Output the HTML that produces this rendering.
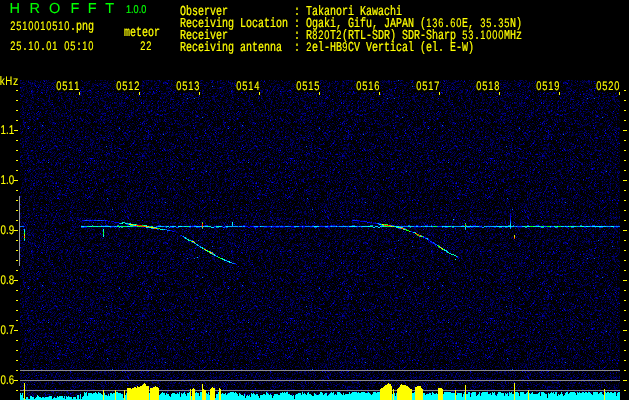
<!DOCTYPE html><html><head><meta charset="utf-8"><title>HROFFT</title><style>html,body{margin:0;padding:0;background:#000;overflow:hidden}svg{display:block;will-change:transform}text{text-rendering:geometricPrecision}</style></head><body><svg width="629" height="400" viewBox="0 0 629 400" shape-rendering="crispEdges">
<defs><g id="t" transform="translate(0,.5)" fill="none" stroke-width="1"><path d="M3 0h1m2 0h1m1 0h1m1 0h2m2 0h1m6 0h1m3 0h1m7 0h2m16 0h1m4 0h1m13 0h1m7 0h1m2 0h2m1 0h1m3 0h1m17 0h1m8 0h1m6 0h1m1 0h2m3 0h2m1 0h1m1 0h1m6 0h1m4 0h2m4 0h1m4 0h1m21 0h2M0 1h1m15 0h1m9 0h2m14 0h1m10 0h1m2 0h1m9 0h1m24 0h2m1 0h1m1 0h1m22 0h1m2 0h1m3 0h1m3 0h1m1 0h1m2 0h1m8 0h2m2 0h1m3 0h1m1 0h1m6 0h1m2 0h1m1 0h1m8 0h1m1 0h1m5 0h1m14 0h2M0 2h1m3 0h1m17 0h1m5 0h1m1 0h1m1 0h2m14 0h1m5 0h1m10 0h2m1 0h1m6 0h1m5 0h1m2 0h1m12 0h1m5 0h2m8 0h1m4 0h1m12 0h1m7 0h2m7 0h1m2 0h1m11 0h2m16 0h1m5 0h1m1 0h1M9 3h1m1 0h1m1 0h1m10 0h1m2 0h1m11 0h2m4 0h1m6 0h1m9 0h1m5 0h1m3 0h2m5 0h1m11 0h1m7 0h1m27 0h2m10 0h1m5 0h1m3 0h1m6 0h1m6 0h1m3 0h3m12 0h1m4 0h1M7 4h1m3 0h2m6 0h2m10 0h1m19 0h1m4 0h1m1 0h1m10 0h1m10 0h1m7 0h2m3 0h1m16 0h1m7 0h1m3 0h1m7 0h1m4 0h1m3 0h1m16 0h1m3 0h1m2 0h1m1 0h1m10 0h1m8 0h2m1 0h1m2 0h1m1 0h1m3 0h1M1 5h1m12 0h1m13 0h1m7 0h1m7 0h1m12 0h1m7 0h2m5 0h1m2 0h2m1 0h1m7 0h1m3 0h1m5 0h1m9 0h1m3 0h1m1 0h1m11 0h1m3 0h1m6 0h1m1 0h1m15 0h1m24 0h1m2 0h2m3 0h2m4 0h1m5 0h1M2 6h1m1 0h2m6 0h2m4 0h1m9 0h1m8 0h1m2 0h1m3 0h1m13 0h1m1 0h1m8 0h1m1 0h1m22 0h1m17 0h1m1 0h1m7 0h1m2 0h1m26 0h1m17 0h1m5 0h1m13 0h1m2 0h1m2 0h1M10 7h1m14 0h1m8 0h1m11 0h1m6 0h2m3 0h1m24 0h1m1 0h1m6 0h1m8 0h1m2 0h1m8 0h1m28 0h1m3 0h1m1 0h1m16 0h1m1 0h1m14 0h1m1 0h2m4 0h1m6 0h1M1 8h2m1 0h1m1 0h1m1 0h2m4 0h1m4 0h1m7 0h2m2 0h1m5 0h1m16 0h1m17 0h1m5 0h1m10 0h1m14 0h1m18 0h1m2 0h1m6 0h2m12 0h1m2 0h2m5 0h1m2 0h1m12 0h1m5 0h1m4 0h1m7 0h1m2 0h1M1 9h1m2 0h1m5 0h1m1 0h1m10 0h1m14 0h1m1 0h1m11 0h1m2 0h1m3 0h1m3 0h1m7 0h1m4 0h2m9 0h1m3 0h1m5 0h1m10 0h1m3 0h1m7 0h1m6 0h1m3 0h1m2 0h2m2 0h1m4 0h1m2 0h2m3 0h1m1 0h1m24 0h1m8 0h1m2 0h2m7 0h1M14 10h1m7 0h2m4 0h1m17 0h1m10 0h1m2 0h1m3 0h1m18 0h1m1 0h1m27 0h1m8 0h2m16 0h1m18 0h1m17 0h1m4 0h1m13 0h1m2 0h1M0 11h1m5 0h2m6 0h1m5 0h1m6 0h1m25 0h1m3 0h2m6 0h1m4 0h1m2 0h1m13 0h1m9 0h1m9 0h1m4 0h1m4 0h1m2 0h1m7 0h1m1 0h1m11 0h1m3 0h2m4 0h1m10 0h1m3 0h1m2 0h1m1 0h1m4 0h1m5 0h1m8 0h1m4 0h1m1 0h1M8 12h1m4 0h1m22 0h1m3 0h1m4 0h1m4 0h2m2 0h1m3 0h1m4 0h1m7 0h2m20 0h1m11 0h1m4 0h2m3 0h1m19 0h1m9 0h1m10 0h1m3 0h1m7 0h1m3 0h1m2 0h1m6 0h1m2 0h1m1 0h1m5 0h1m2 0h1M3 13h1m1 0h1m2 0h1m17 0h1m4 0h1m1 0h1m2 0h1m7 0h3m12 0h1m5 0h1m10 0h1m4 0h1m6 0h1m2 0h1m2 0h1m10 0h1m20 0h1m8 0h2m6 0h1m8 0h1m7 0h1m4 0h1m13 0h1m3 0h1m12 0h1m1 0h1M5 14h1m3 0h1m3 0h1m3 0h1m20 0h2m7 0h4m10 0h1m10 0h1m1 0h1m3 0h1m42 0h2m1 0h1m3 0h1m2 0h1m5 0h1m3 0h1m3 0h2m3 0h1m1 0h1m6 0h1m11 0h2m4 0h1m17 0h1M3 15h1m3 0h1m6 0h1m40 0h1m3 0h1m2 0h1m4 0h1m15 0h1m2 0h1m6 0h1m7 0h1m17 0h1m6 0h1m14 0h1m4 0h1m1 0h1m1 0h2m2 0h1m3 0h1m9 0h1m9 0h1m6 0h1m10 0h1M12 16h1m2 0h1m1 0h1m14 0h2m8 0h1m1 0h1m14 0h1m4 0h1m4 0h1m1 0h1m9 0h1m4 0h2m5 0h1m5 0h1m7 0h1m1 0h1m4 0h1m1 0h1m1 0h1m12 0h1m1 0h1m2 0h1m8 0h1m4 0h1m9 0h1m4 0h1m5 0h1m3 0h1m7 0h1m3 0h1M10 17h1m6 0h1m15 0h1m19 0h1m6 0h1m1 0h2m10 0h1m5 0h1m1 0h1m18 0h1m6 0h1m7 0h1m13 0h1m8 0h1m1 0h1m5 0h1m22 0h1m6 0h1m10 0h1M15 18h1m6 0h1m5 0h1m19 0h1m1 0h1m21 0h1m4 0h1m5 0h1m5 0h1m2 0h1m1 0h1m1 0h1m3 0h1m1 0h1m11 0h1m1 0h1m2 0h1m13 0h1m1 0h1m24 0h1m1 0h1m9 0h1m5 0h2m8 0h2m4 0h1M4 19h2m3 0h1m3 0h1m2 0h1m9 0h1m1 0h1m6 0h1m1 0h1m11 0h1m8 0h2m2 0h2m9 0h1m1 0h1m6 0h1m3 0h1m7 0h2m3 0h1m1 0h1m3 0h1m3 0h1m3 0h1m3 0h1m7 0h3m13 0h1m12 0h1m11 0h1m9 0h1m15 0h1m3 0h1M8 20h1m10 0h3m2 0h1m6 0h1m5 0h1m3 0h1m6 0h1m8 0h1m5 0h2m1 0h1m3 0h1m4 0h1m13 0h1m3 0h1m1 0h1m2 0h2m4 0h2m4 0h1m6 0h1m6 0h1m4 0h1m5 0h1m3 0h1m2 0h1m18 0h1m1 0h1m8 0h1m19 0h1m3 0h1M2 21h1m1 0h1m2 0h1m3 0h1m12 0h1m1 0h2m10 0h1m7 0h1m9 0h1m5 0h1m19 0h1m3 0h2m2 0h1m8 0h1m20 0h1m3 0h2m2 0h1m4 0h2m9 0h2m1 0h1m10 0h1m7 0h1m6 0h1m2 0h1m2 0h1m6 0h1M8 22h1m1 0h2m6 0h1m6 0h2m14 0h1m3 0h1m2 0h1m3 0h1m3 0h1m1 0h1m1 0h1m2 0h3m8 0h1m2 0h1m11 0h1m2 0h1m17 0h1m12 0h1m17 0h1m7 0h1m4 0h1m10 0h1m1 0h1m2 0h2m15 0h1M0 23h1m1 0h1m4 0h1m35 0h1m17 0h2m18 0h1m2 0h2m16 0h1m14 0h1m11 0h1m23 0h1m2 0h1m25 0h1m1 0h1m3 0h1m7 0h1M3 24h1m4 0h4m2 0h1m19 0h1m2 0h1m16 0h1m3 0h1m28 0h1m9 0h1m1 0h1m1 0h1m6 0h1m18 0h1m3 0h1m3 0h1m4 0h1m1 0h1m2 0h1m7 0h1m1 0h1m18 0h1m14 0h1M8 25h1m1 0h1m17 0h2m3 0h1m7 0h2m4 0h1m4 0h1m3 0h1m8 0h1m2 0h1m27 0h2m6 0h1m12 0h2m1 0h1m13 0h2m4 0h1m2 0h1m7 0h1m1 0h1m3 0h1m10 0h1m3 0h1m12 0h1m4 0h1m2 0h1m1 0h1M5 26h2m6 0h1m2 0h2m57 0h1m1 0h1m7 0h1m26 0h1m5 0h1m2 0h1m6 0h1m10 0h1m4 0h1m5 0h1m6 0h1m6 0h1m8 0h1m4 0h1m2 0h3M3 27h1m2 0h1m21 0h1m12 0h1m5 0h1m2 0h1m16 0h1m1 0h1m8 0h1m9 0h1m1 0h2m1 0h1m14 0h1m23 0h1m19 0h1m7 0h1m6 0h1m10 0h1m15 0h1m2 0h1M10 28h1m5 0h1m2 0h1m1 0h1m1 0h1m7 0h1m1 0h1m1 0h1m4 0h1m5 0h1m18 0h1m3 0h1m4 0h1m7 0h1m4 0h1m6 0h1m1 0h1m1 0h1m6 0h1m13 0h2m14 0h1m5 0h1m1 0h1m2 0h1m1 0h1m1 0h1m2 0h2m2 0h1m5 0h1m1 0h1m4 0h2m12 0h1m3 0h1M8 29h1m7 0h1m1 0h1m3 0h1m38 0h1m9 0h1m2 0h1m2 0h1m3 0h2m9 0h1m1 0h1m21 0h1m11 0h1m5 0h2m10 0h1m1 0h1m18 0h3m7 0h1m3 0h1m4 0h1m3 0h1m4 0h1M15 30h1m10 0h1m2 0h1m1 0h1m22 0h1m8 0h1m2 0h1m3 0h1m9 0h1m2 0h1m16 0h1m5 0h1m3 0h1m5 0h1m3 0h1m1 0h1m1 0h1m5 0h1m7 0h1m18 0h1m10 0h1m14 0h1m5 0h1M1 31h1m9 0h2m19 0h1m9 0h2m6 0h1m3 0h1m1 0h1m21 0h1m3 0h1m16 0h1m1 0h1m9 0h1m3 0h1m14 0h1m5 0h1m2 0h1m12 0h1m5 0h1m2 0h1m3 0h1m1 0h1m14 0h1m2 0h1m2 0h1M2 32h1m1 0h1m4 0h1m2 0h1m13 0h1m4 0h1m1 0h1m6 0h1m7 0h1m1 0h1m6 0h1m3 0h1m5 0h1m2 0h2m7 0h1m2 0h1m1 0h1m1 0h1m3 0h1m6 0h1m12 0h1m2 0h1m1 0h1m17 0h1m1 0h1m13 0h1m9 0h2m6 0h1m5 0h1m12 0h1m5 0h1m1 0h1M1 33h1m5 0h1m13 0h1m4 0h2m16 0h1m17 0h1m10 0h1m2 0h1m14 0h2m10 0h1m3 0h1m4 0h1m7 0h1m1 0h1m12 0h1m8 0h1m1 0h1m4 0h1m3 0h1m6 0h1m2 0h1m5 0h1m8 0h1m1 0h1m4 0h1M18 34h1m2 0h1m6 0h1m1 0h2m5 0h2m27 0h1m11 0h3m4 0h1m11 0h2m1 0h1m6 0h1m1 0h1m12 0h1m12 0h2m3 0h1m9 0h1m4 0h1m5 0h1m10 0h1m8 0h1m1 0h1m3 0h1M6 35h1m9 0h2m1 0h1m5 0h1m3 0h1m5 0h1m1 0h1m12 0h1m3 0h1m3 0h1m28 0h1m6 0h3m1 0h1m11 0h1m4 0h1m3 0h1m11 0h1m7 0h1m2 0h1m3 0h1m1 0h1m4 0h3m5 0h1m1 0h1m9 0h1m5 0h1m1 0h1m16 0h2M1 36h2m18 0h1m9 0h1m2 0h2m2 0h2m1 0h1m3 0h1m6 0h1m3 0h1m6 0h1m2 0h1m6 0h2m3 0h1m14 0h1m2 0h1m11 0h1m3 0h1m3 0h2m2 0h1m38 0h1m3 0h1m1 0h1m6 0h2m8 0h2m12 0h1M0 37h1m12 0h1m2 0h1m4 0h1m9 0h1m7 0h1m8 0h1m3 0h1m12 0h1m5 0h1m4 0h1m6 0h1m1 0h1m6 0h3m4 0h1m2 0h1m5 0h3m5 0h1m5 0h1m1 0h1m3 0h2m4 0h1m4 0h1m4 0h1m2 0h2m19 0h1m19 0h1m1 0h1M1 38h1m2 0h1m11 0h1m7 0h2m4 0h1m3 0h2m8 0h1m6 0h2m4 0h1m5 0h1m4 0h1m4 0h1m17 0h1m5 0h1m3 0h1m7 0h1m8 0h1m1 0h1m18 0h1m5 0h1m13 0h1m1 0h1m6 0h1m2 0h1m9 0h1m3 0h2m6 0h1M15 39h2m1 0h1m17 0h1m1 0h1m1 0h1m12 0h1m3 0h1m17 0h2m19 0h1m4 0h1m7 0h1m7 0h2m9 0h1m11 0h1m9 0h2m2 0h1m6 0h1m11 0h1m3 0h2m6 0h1m3 0h1m4 0h1M25 40h2m1 0h1m1 0h1m2 0h1m11 0h1m5 0h2m23 0h1m5 0h1m4 0h1m8 0h1m2 0h1m10 0h1m21 0h1m2 0h1m3 0h2m1 0h1m20 0h1m11 0h1m7 0h1m12 0h1m2 0h1M6 41h1m6 0h1m24 0h1m4 0h1m2 0h1m10 0h2m1 0h1m8 0h1m5 0h1m3 0h1m2 0h2m1 0h1m1 0h1m21 0h1m4 0h1m11 0h1m2 0h1m6 0h1m2 0h1m4 0h1m1 0h3m2 0h1m5 0h2m4 0h2m11 0h1m10 0h1M2 42h1m28 0h1m4 0h1m5 0h1m10 0h1m5 0h1m6 0h1m1 0h1m10 0h1m4 0h2m10 0h1m6 0h1m2 0h1m10 0h1m10 0h1m9 0h1m7 0h1m4 0h1m8 0h1m1 0h1m2 0h1m3 0h1m2 0h1m13 0h1m1 0h2m1 0h1m3 0h2m2 0h1M3 43h1m1 0h1m3 0h1m10 0h1m11 0h1m4 0h1m1 0h1m7 0h1m4 0h1m13 0h2m14 0h1m19 0h1m1 0h1m3 0h1m1 0h1m5 0h1m4 0h1m11 0h1m1 0h1m6 0h1m4 0h1m3 0h1m4 0h1m3 0h1m4 0h1m2 0h1m3 0h1m1 0h1m16 0h1m1 0h1M4 44h1m1 0h1m8 0h1m2 0h1m16 0h1m16 0h1m5 0h3m4 0h2m2 0h1m8 0h1m9 0h1m22 0h1m2 0h1m3 0h1m11 0h1m8 0h1m8 0h1m8 0h1m6 0h3m1 0h1m7 0h1m8 0h1m1 0h1m3 0h1M20 45h1m2 0h1m3 0h1m5 0h1m22 0h1m2 0h1m7 0h1m27 0h1m16 0h1m16 0h1m11 0h1m6 0h1m6 0h1m4 0h1m3 0h2m10 0h1m2 0h2m1 0h1m4 0h2M15 46h1m16 0h1m5 0h1m8 0h1m4 0h1m2 0h2m17 0h1m9 0h1m4 0h2m4 0h1m2 0h2m8 0h1m1 0h1m14 0h1m8 0h1m6 0h1m1 0h1m13 0h1m3 0h2m1 0h1m11 0h1m7 0h1m2 0h1M4 47h1m2 0h1m11 0h1m1 0h2m14 0h1m7 0h1m3 0h1m13 0h1m3 0h2m4 0h2m4 0h1m7 0h2m1 0h1m1 0h2m4 0h1m12 0h1m4 0h1m33 0h1m6 0h1m1 0h1m2 0h1m14 0h1m10 0h2m5 0h1m2 0h2M14 48h1m8 0h1m1 0h1m6 0h1m15 0h1m10 0h1m5 0h1m7 0h1m2 0h1m10 0h1m1 0h1m5 0h1m8 0h1m5 0h1m2 0h1m31 0h1m18 0h1m5 0h1m7 0h2m3 0h3m1 0h1m7 0h1m1 0h1M0 49h1m5 0h1m14 0h1m2 0h1m4 0h1m5 0h1m18 0h1m7 0h2m1 0h1m8 0h1m7 0h1m25 0h1m8 0h1m7 0h1m24 0h1m4 0h2m1 0h1m21 0h1m9 0h1m7 0h1M11 50h1m24 0h1m6 0h1m13 0h2m7 0h1m7 0h1m15 0h1m5 0h1m11 0h1m9 0h1m2 0h1m14 0h2m8 0h1m14 0h1m4 0h1m4 0h1m4 0h1m6 0h1M0 51h1m4 0h2m2 0h1m5 0h1m1 0h1m25 0h2m11 0h1m8 0h2m1 0h1m1 0h1m19 0h1m2 0h1m17 0h1m17 0h1m1 0h1m2 0h1m6 0h1m5 0h1m1 0h1m2 0h1m6 0h1m1 0h1m3 0h1m4 0h2m2 0h1m2 0h1M9 52h1m4 0h1m5 0h2m5 0h1m3 0h1m6 0h1m3 0h1m3 0h1m3 0h1m6 0h1m4 0h1m31 0h1m8 0h1m17 0h1m7 0h1m8 0h1m4 0h1m1 0h1m32 0h1m3 0h1M16 53h1m13 0h1m8 0h1m3 0h1m11 0h1m11 0h1m11 0h1m6 0h1m1 0h1m3 0h2m26 0h1m9 0h1m1 0h1m2 0h1m6 0h1m9 0h2m3 0h1m2 0h3m7 0h1m1 0h1m16 0h1m8 0h2M1 54h1m2 0h1m6 0h1m5 0h1m2 0h1m1 0h1m9 0h1m16 0h1m2 0h1m19 0h1m4 0h1m1 0h1m1 0h1m6 0h1m3 0h1m10 0h1m11 0h1m4 0h1m7 0h1m5 0h1m3 0h1m3 0h1m2 0h1m3 0h1m1 0h1m1 0h1m3 0h1m9 0h1m8 0h1m19 0h1M3 55h1m8 0h2m7 0h1m8 0h1m1 0h1m2 0h1m38 0h1m8 0h1m3 0h1m5 0h1m4 0h1m6 0h1m1 0h1m1 0h1m9 0h1m4 0h1m5 0h1m3 0h1m6 0h1m6 0h1m2 0h1m1 0h1m1 0h1m27 0h1m10 0h2M7 56h2m10 0h1m2 0h2m3 0h2m7 0h1m2 0h1m6 0h1m2 0h1m16 0h1m2 0h1m24 0h1m11 0h1m1 0h1m8 0h1m1 0h1m3 0h1m5 0h1m5 0h1m5 0h1m14 0h1m37 0h1m2 0h1M4 57h2m3 0h1m3 0h1m4 0h1m6 0h1m2 0h2m2 0h2m7 0h1m26 0h3m1 0h1m7 0h1m4 0h1m9 0h1m3 0h1m18 0h2m45 0h2m4 0h1m17 0h1M9 58h1m3 0h2m19 0h1m9 0h3m8 0h1m4 0h1m3 0h1m1 0h1m3 0h1m3 0h1m2 0h1m5 0h1m3 0h1m1 0h1m10 0h1m11 0h1m17 0h3m9 0h1m22 0h1m1 0h1m2 0h1m4 0h1m2 0h1m4 0h1m11 0h1M2 59h2m3 0h1m12 0h1m23 0h1m2 0h1m1 0h1m1 0h1m2 0h1m6 0h1m10 0h1m7 0h1m20 0h1m1 0h1m21 0h1m2 0h1m5 0h2m11 0h1m10 0h1m6 0h1m17 0h1m11 0h1m1 0h1M7 60h1m1 0h1m4 0h1m1 0h1m8 0h1m4 0h1m4 0h1m7 0h1m2 0h3m5 0h1m2 0h1m5 0h1m6 0h1m2 0h2m26 0h1m2 0h1m1 0h1m3 0h1m2 0h1m4 0h1m31 0h1m8 0h1m6 0h2m9 0h1m3 0h1m2 0h1m5 0h1M4 61h1m3 0h1m9 0h1m2 0h1m5 0h2m14 0h1m2 0h1m7 0h1m2 0h1m1 0h1m6 0h1m1 0h1m2 0h1m17 0h1m7 0h1m17 0h1m9 0h1m6 0h1m3 0h1m1 0h1m9 0h1m8 0h1m1 0h1m1 0h1m1 0h1m12 0h1m6 0h1m2 0h1m6 0h1M16 62h3m22 0h1m14 0h1m6 0h1m6 0h1m7 0h2m17 0h1m1 0h1m8 0h1m21 0h1m12 0h2m3 0h1m7 0h1m2 0h1m6 0h1m2 0h1m12 0h1m1 0h1m3 0h1m2 0h3m2 0h1m1 0h1M3 63h1m3 0h1m7 0h1m5 0h1m8 0h1m4 0h1m1 0h1m16 0h2m12 0h1m1 0h1m7 0h1m9 0h1m2 0h1m7 0h1m19 0h1m1 0h1m7 0h1m6 0h1m9 0h1m2 0h1m3 0h1m21 0h1m15 0h1m1 0h1M7 64h1m2 0h1m1 0h1m8 0h2m4 0h1m10 0h1m8 0h1m18 0h1m1 0h1m4 0h1m11 0h1m2 0h1m5 0h1m13 0h1m3 0h1m1 0h1m8 0h1m2 0h2m1 0h1m5 0h1m2 0h1m2 0h1m4 0h1m3 0h1m5 0h1m6 0h1m4 0h1m1 0h1m2 0h1m7 0h1M18 65h1m6 0h2m9 0h1m7 0h1m3 0h1m1 0h1m2 0h1m15 0h1m24 0h1m5 0h1m23 0h1m1 0h1m6 0h1m4 0h1m18 0h1m7 0h1m10 0h1m9 0h1m7 0h1m1 0h1M10 66h1m2 0h1m2 0h1m4 0h2m6 0h1m3 0h1m6 0h1m6 0h1m14 0h2m17 0h2m1 0h1m3 0h1m20 0h1m18 0h1m10 0h1m4 0h1m1 0h1m11 0h1m12 0h2m9 0h1m9 0h1M0 67h1m9 0h1m10 0h1m7 0h2m1 0h1m4 0h1m2 0h1m6 0h1m4 0h1m2 0h1m1 0h1m7 0h1m6 0h1m1 0h1m10 0h2m8 0h2m9 0h1m4 0h2m10 0h1m4 0h1m3 0h1m3 0h1m4 0h1m1 0h2m1 0h1m1 0h1m2 0h1m10 0h1m7 0h1m2 0h2m20 0h1M14 68h1m5 0h1m22 0h1m3 0h1m14 0h1m6 0h1m2 0h1m5 0h1m18 0h1m7 0h2m6 0h1m2 0h1m1 0h1m6 0h1m1 0h3m4 0h1m10 0h1m6 0h2m12 0h1m23 0h1m3 0h1m4 0h1M0 69h1m2 0h1m4 0h1m8 0h1m7 0h1m2 0h1m2 0h1m10 0h1m15 0h1m1 0h1m1 0h1m1 0h1m13 0h1m13 0h1m13 0h1m12 0h1m2 0h1m3 0h1m2 0h1m13 0h1m1 0h1m36 0h1m6 0h1m6 0h1M2 70h1m1 0h1m3 0h1m1 0h1m2 0h1m1 0h1m15 0h1m42 0h1m5 0h1m2 0h1m1 0h1m3 0h1m5 0h1m2 0h1m8 0h1m5 0h1m13 0h1m1 0h1m1 0h1m2 0h1m11 0h1m7 0h1m5 0h3m3 0h3m3 0h1m12 0h1m7 0h1m4 0h1M0 71h1m5 0h1m1 0h1m1 0h1m1 0h1m1 0h1m14 0h1m2 0h1m3 0h1m4 0h1m11 0h2m1 0h1m1 0h1m1 0h1m9 0h1m3 0h1m4 0h1m13 0h1m5 0h1m18 0h2m7 0h3m15 0h1m1 0h1m2 0h1m27 0h1m4 0h1m2 0h1m7 0h1M1 72h1m1 0h1m1 0h1m4 0h1m18 0h1m5 0h1m10 0h1m5 0h1m5 0h1m3 0h1m6 0h1m3 0h1m3 0h1m1 0h1m1 0h3m4 0h1m2 0h1m3 0h1m26 0h1m1 0h1m7 0h1m4 0h1m10 0h1m4 0h1m11 0h1m8 0h1m5 0h1m10 0h1m6 0h1M20 73h1m13 0h1m5 0h1m5 0h1m57 0h1m11 0h2m1 0h1m4 0h1m7 0h1m25 0h1m21 0h1m12 0h1m1 0h1m1 0h1M5 74h3m8 0h1m8 0h1m1 0h1m13 0h1m4 0h1m11 0h1m1 0h1m1 0h1m4 0h1m3 0h1m3 0h1m2 0h1m1 0h2m9 0h1m3 0h1m7 0h1m1 0h1m5 0h2m10 0h1m2 0h1m22 0h1m1 0h1m10 0h1m5 0h1m7 0h1m2 0h1m3 0h1m3 0h1M4 75h1m1 0h1m14 0h1m12 0h1m4 0h1m7 0h1m1 0h1m18 0h2m1 0h1m13 0h1m2 0h2m1 0h1m9 0h1m31 0h1m6 0h1m2 0h1m13 0h1m22 0h1m4 0h1M13 76h1m1 0h1m1 0h1m1 0h1m5 0h2m3 0h1m9 0h1m1 0h1m5 0h3m5 0h1m16 0h1m1 0h1m1 0h1m7 0h1m7 0h1m3 0h1m1 0h1m3 0h1m9 0h2m3 0h1m2 0h1m7 0h1m5 0h1m14 0h1m1 0h1m10 0h1m25 0h1m1 0h1M10 77h1m8 0h1m25 0h1m11 0h1m2 0h1m12 0h1m18 0h1m5 0h1m21 0h2m2 0h1m1 0h1m8 0h1m2 0h2m6 0h1m6 0h1m7 0h1m1 0h1m22 0h1m6 0h3M12 78h1m6 0h1m3 0h1m7 0h1m3 0h1m5 0h1m1 0h1m13 0h1m1 0h1m5 0h1m8 0h1m12 0h1m1 0h1m2 0h1m7 0h2m1 0h1m10 0h1m1 0h1m6 0h1m5 0h1m1 0h1m4 0h1m3 0h1m1 0h1m7 0h1m17 0h1m3 0h1m6 0h1m15 0h1M7 79h1m10 0h1m9 0h1m2 0h1m12 0h1m1 0h1m3 0h1m3 0h1m3 0h1m5 0h1m2 0h1m8 0h1m4 0h1m5 0h1m2 0h1m5 0h1m18 0h1m20 0h1m7 0h1m9 0h1m35 0h1m2 0h2M1 80h1m8 0h1m20 0h1m10 0h1m8 0h1m7 0h1m18 0h1m19 0h1m7 0h1m5 0h1m16 0h1m3 0h1m6 0h1m1 0h1m13 0h1m16 0h1m5 0h1m7 0h1m1 0h1m9 0h1M4 81h1m6 0h1m5 0h1m14 0h2m11 0h1m6 0h1m2 0h2m13 0h1m4 0h1m16 0h1m16 0h1m16 0h1m1 0h2m6 0h1m1 0h2m11 0h1m1 0h2m11 0h1m4 0h2m10 0h1m5 0h1m1 0h2M6 82h1m12 0h1m1 0h1m1 0h1m6 0h2m1 0h1m16 0h2m10 0h1m6 0h1m12 0h1m6 0h1m1 0h1m4 0h1m4 0h1m9 0h2m8 0h1m21 0h1m1 0h1m6 0h1m9 0h1m8 0h1m8 0h1m17 0h1M1 83h1m1 0h1m8 0h1m5 0h1m19 0h1m8 0h1m9 0h1m3 0h1m3 0h1m7 0h1m9 0h1m24 0h1m1 0h1m10 0h1m13 0h1m3 0h1m2 0h1m6 0h1m4 0h1m30 0h1m3 0h1m4 0h2m1 0h1M2 84h1m7 0h1m12 0h1m6 0h1m15 0h2m5 0h1m4 0h1m15 0h2m2 0h1m9 0h1m4 0h1m1 0h1m28 0h1m4 0h1m3 0h1m8 0h1m4 0h1m10 0h1m26 0h1M2 85h1m16 0h1m2 0h2m5 0h1m3 0h1m3 0h1m5 0h1m17 0h1m11 0h1m3 0h1m5 0h1m4 0h1m10 0h1m4 0h1m21 0h3m9 0h1m3 0h1m7 0h1m3 0h1m7 0h1m3 0h1m4 0h1m9 0h1m11 0h2M0 86h1m4 0h1m6 0h1m1 0h1m7 0h1m4 0h1m9 0h1m7 0h1m1 0h1m13 0h1m4 0h1m2 0h2m2 0h2m2 0h1m3 0h2m1 0h1m25 0h1m12 0h1m2 0h1m9 0h1m14 0h1m10 0h2m17 0h1m3 0h1m8 0h1m3 0h1M10 87h1m2 0h1m3 0h1m8 0h1m4 0h1m2 0h1m4 0h1m3 0h1m15 0h1m3 0h1m5 0h1m3 0h1m9 0h2m5 0h1m10 0h1m13 0h1m16 0h1m14 0h1m2 0h1m18 0h1m7 0h1m16 0h2M0 88h1m5 0h1m3 0h1m1 0h2m9 0h1m4 0h1m1 0h1m14 0h1m1 0h1m5 0h1m24 0h1m4 0h1m8 0h1m29 0h1m1 0h1m3 0h1m1 0h1m1 0h2m9 0h2m2 0h1m3 0h1m7 0h1m3 0h1m33 0h1M1 89h1m6 0h2m1 0h2m2 0h1m4 0h1m9 0h2m5 0h1m1 0h1m11 0h1m5 0h1m24 0h1m4 0h1m9 0h1m14 0h1m5 0h1m2 0h1m9 0h1m3 0h1m6 0h1m4 0h2m9 0h1m22 0h2m1 0h1m4 0h1M2 90h1m9 0h2m5 0h1m1 0h3m5 0h1m2 0h1m1 0h1m2 0h2m9 0h1m6 0h1m4 0h1m2 0h1m15 0h2m2 0h1m4 0h1m7 0h1m2 0h1m9 0h1m2 0h1m1 0h1m7 0h1m9 0h1m2 0h1m1 0h1m8 0h1m18 0h1m3 0h1m8 0h1m3 0h1m4 0h1m10 0h1M4 91h1m4 0h1m5 0h1m2 0h1m2 0h1m16 0h1m1 0h2m5 0h2m11 0h1m1 0h1m17 0h1m2 0h1m2 0h1m4 0h1m13 0h2m2 0h1m15 0h1m3 0h1m1 0h1m5 0h1m2 0h1m5 0h1m20 0h1m4 0h1m1 0h1m5 0h1m10 0h1m3 0h1m2 0h1M1 92h1m2 0h1m2 0h1m1 0h1m2 0h1m12 0h1m9 0h1m5 0h1m2 0h1m1 0h1m16 0h1m9 0h1m3 0h1m7 0h1m5 0h1m16 0h1m1 0h1m6 0h1m10 0h1m2 0h1m9 0h1m14 0h4m7 0h1m1 0h1m6 0h1m3 0h1m3 0h1m7 0h2m4 0h1M8 93h1m10 0h1m2 0h1m7 0h1m7 0h1m6 0h1m14 0h1m1 0h1m7 0h1m9 0h1m24 0h2m11 0h2m1 0h1m7 0h1m13 0h2m2 0h1m5 0h1m6 0h1m1 0h1m4 0h1m1 0h1m7 0h1m8 0h1m8 0h1M0 94h1m14 0h1m3 0h1m1 0h1m1 0h2m1 0h1m8 0h1m3 0h1m17 0h1m3 0h1m1 0h1m1 0h1m1 0h1m3 0h2m1 0h1m1 0h2m3 0h1m3 0h1m2 0h1m14 0h1m5 0h1m5 0h1m7 0h1m8 0h1m4 0h1m19 0h1m1 0h1m11 0h1m2 0h2m8 0h1m9 0h1m2 0h1M0 95h1m3 0h1m1 0h1m3 0h1m1 0h2m4 0h1m3 0h1m6 0h1m6 0h1m7 0h1m1 0h3m6 0h1m5 0h1m4 0h1m9 0h1m17 0h1m11 0h1m2 0h1m7 0h1m1 0h2m4 0h1m3 0h1m10 0h1m9 0h1m5 0h1m6 0h1m11 0h1m9 0h2m11 0h2M5 96h1m26 0h1m1 0h1m3 0h1m2 0h1m9 0h2m5 0h1m3 0h1m4 0h1m1 0h1m7 0h1m3 0h1m1 0h1m2 0h1m9 0h1m4 0h2m9 0h2m8 0h1m3 0h2m33 0h2m8 0h1m3 0h1m1 0h1m1 0h2m2 0h1m6 0h2M2 97h1m7 0h1m8 0h1m1 0h1m15 0h1m2 0h1m2 0h1m3 0h1m6 0h1m8 0h1m2 0h1m16 0h1m2 0h1m3 0h1m6 0h1m13 0h1m17 0h1m6 0h1m4 0h3m3 0h1m7 0h1m14 0h1m12 0h1m1 0h1m7 0h1m2 0h1M1 98h1m3 0h2m3 0h1m1 0h2m14 0h1m4 0h2m10 0h1m4 0h1m16 0h1m6 0h1m1 0h1m3 0h1m2 0h1m5 0h1m2 0h2m2 0h1m9 0h1m1 0h1m1 0h1m3 0h1m16 0h2m9 0h1m6 0h1m6 0h1m13 0h1m1 0h1m5 0h1M0 99h1m2 0h2m2 0h1m2 0h1m8 0h1m19 0h1m6 0h1m12 0h1m13 0h1m1 0h1m2 0h1m10 0h1m7 0h2m1 0h1m10 0h1m4 0h2m6 0h2m4 0h2m2 0h1m11 0h1m14 0h1m9 0h1m1 0h1m3 0h1m2 0h1m5 0h1m1 0h1m4 0h1m3 0h2M2 100h1m1 0h1m8 0h1m2 0h1m7 0h1m2 0h2m2 0h1m5 0h2m2 0h1m13 0h1m2 0h1m3 0h1m2 0h1m13 0h1m12 0h1m7 0h1m2 0h1m5 0h1m3 0h1m8 0h1m3 0h1m9 0h1m3 0h1m8 0h2m1 0h1m2 0h1m15 0h1m3 0h1m2 0h1m8 0h1m1 0h1m1 0h1m2 0h1M6 101h1m2 0h1m9 0h1m12 0h1m1 0h1m1 0h1m7 0h1m4 0h2m1 0h2m7 0h1m1 0h2m9 0h1m1 0h1m24 0h1m5 0h2m3 0h1m5 0h1m6 0h2m1 0h1m8 0h1m13 0h2m14 0h1m3 0h1m9 0h1m1 0h1m1 0h1m10 0h1M2 102h1m2 0h1m5 0h1m2 0h1m5 0h1m8 0h1m5 0h1m9 0h1m42 0h1m1 0h1m19 0h1m6 0h1m2 0h1m19 0h2m10 0h1m10 0h1m6 0h1m11 0h1m1 0h1m11 0h1m2 0h1M10 103h2m19 0h1m6 0h1m7 0h1m19 0h1m4 0h1m6 0h1m16 0h1m10 0h1m3 0h1m10 0h1m4 0h1m5 0h1m1 0h2m1 0h1m2 0h1m7 0h1m2 0h1m6 0h1m8 0h1m5 0h1m8 0h1m2 0h1m5 0h2m2 0h1m1 0h2M3 104h1m5 0h1m6 0h1m19 0h1m3 0h1m12 0h1m4 0h1m2 0h1m1 0h1m11 0h1m4 0h1m7 0h1m2 0h1m4 0h1m8 0h1m4 0h1m3 0h1m13 0h1m7 0h2m6 0h1m2 0h2m1 0h1m2 0h1m2 0h2m2 0h1m4 0h2m15 0h2m5 0h1m2 0h1M4 105h1m6 0h1m14 0h1m12 0h1m20 0h1m4 0h1m4 0h1m16 0h1m6 0h1m2 0h1m4 0h1m8 0h1m5 0h1m4 0h2m11 0h1m2 0h1m2 0h1m5 0h1m5 0h1m4 0h1m1 0h1m25 0h1m12 0h1M9 106h1m20 0h1m4 0h1m18 0h1m6 0h2m11 0h1m1 0h1m2 0h1m24 0h1m14 0h1m5 0h1m12 0h1m1 0h1m29 0h2m16 0h1m1 0h1m2 0h1m4 0h1M2 107h1m20 0h1m21 0h1m9 0h1m13 0h1m3 0h1m14 0h2m3 0h1m1 0h1m1 0h1m21 0h1m7 0h1m4 0h1m6 0h1m10 0h1m2 0h1m13 0h1m21 0h1m9 0h1M5 108h1m6 0h1m4 0h1m4 0h1m23 0h1m18 0h1m35 0h1m1 0h1m16 0h1m1 0h1m17 0h1m5 0h4m4 0h1m5 0h1m5 0h1m13 0h1m17 0h2M1 109h1m6 0h1m15 0h1m3 0h1m1 0h1m6 0h1m1 0h1m19 0h2m8 0h1m16 0h1m8 0h1m1 0h1m3 0h3m1 0h1m7 0h1m1 0h1m11 0h1m7 0h1m5 0h1m16 0h1m5 0h2m6 0h1m4 0h1m12 0h1m3 0h1m3 0h2M4 110h1m17 0h1m5 0h1m7 0h1m18 0h1m3 0h1m6 0h1m5 0h2m20 0h1m2 0h1m4 0h1m2 0h1m6 0h1m4 0h1m12 0h2m6 0h1m3 0h1m10 0h1m10 0h1m9 0h1m11 0h1m3 0h1M4 111h2m2 0h2m3 0h1m10 0h1m11 0h1m1 0h1m3 0h1m20 0h1m3 0h1m22 0h2m2 0h1m9 0h1m3 0h1m9 0h1m3 0h1m2 0h1m1 0h1m1 0h1m12 0h1m3 0h1m2 0h1m6 0h1m2 0h1m16 0h1m5 0h1m2 0h2m12 0h1M4 112h1m1 0h1m9 0h1m16 0h1m5 0h1m1 0h1m3 0h1m1 0h1m15 0h1m9 0h1m4 0h1m5 0h3m5 0h1m3 0h1m27 0h1m9 0h1m4 0h1m9 0h1m4 0h1m4 0h1m9 0h1m4 0h1m4 0h1m4 0h2m5 0h1m2 0h1m1 0h2m1 0h1M2 113h1m14 0h1m12 0h1m10 0h1m17 0h1m2 0h1m21 0h1m1 0h2m31 0h2m6 0h1m3 0h1m1 0h1m14 0h1m23 0h1m11 0h1m8 0h1m4 0h1M12 114h1m15 0h1m8 0h1m17 0h3m12 0h2m2 0h1m1 0h1m4 0h1m26 0h2m15 0h1m11 0h3m1 0h1m1 0h2m3 0h1m8 0h1m1 0h1m6 0h1m11 0h1m11 0h2m7 0h1M1 115h1m18 0h1m11 0h1m6 0h2m1 0h1m5 0h1m5 0h1m15 0h1m22 0h1m10 0h1m8 0h1m6 0h1m1 0h1m4 0h1m11 0h1m7 0h1m3 0h1m3 0h1m3 0h1m24 0h1m12 0h1m1 0h1M5 116h1m2 0h1m3 0h1m7 0h1m1 0h1m2 0h1m5 0h1m4 0h1m5 0h1m3 0h1m8 0h1m8 0h1m2 0h2m14 0h1m10 0h1m10 0h1m6 0h1m7 0h1m7 0h2m3 0h1m15 0h1m6 0h2m1 0h1m5 0h1m8 0h2m3 0h1m3 0h1m1 0h1m2 0h1m6 0h2M1 117h1m2 0h1m5 0h1m2 0h1m4 0h1m3 0h1m6 0h1m7 0h1m2 0h1m17 0h1m3 0h2m10 0h1m4 0h1m11 0h2m6 0h1m2 0h1m22 0h1m2 0h2m7 0h1m3 0h1m14 0h1m6 0h2m15 0h1m8 0h2m1 0h1m2 0h2M9 118h1m1 0h1m6 0h1m2 0h1m2 0h1m4 0h1m1 0h2m6 0h2m3 0h1m4 0h1m4 0h1m1 0h2m4 0h1m14 0h1m32 0h1m1 0h1m2 0h2m12 0h3m28 0h1m7 0h1m18 0h2m1 0h1m2 0h1m2 0h1M2 119h2m4 0h1m18 0h1m2 0h1m14 0h1m1 0h1m3 0h1m2 0h1m13 0h1m4 0h1m4 0h1m2 0h2m3 0h2m17 0h1m2 0h1m12 0h1m2 0h1m6 0h1m6 0h1m1 0h1m5 0h2m4 0h1m9 0h1m10 0h1m1 0h1m7 0h1m14 0h1M3 120h2m9 0h1m4 0h1m8 0h1m13 0h1m5 0h1m4 0h2m2 0h2m1 0h1m13 0h1m4 0h1m6 0h1m7 0h1m9 0h1m1 0h3m1 0h1m4 0h1m12 0h1m3 0h1m3 0h1m11 0h1m4 0h1m5 0h1m26 0h1m1 0h1m8 0h1m1 0h1M8 121h1m1 0h1m20 0h1m20 0h1m1 0h1m6 0h2m15 0h1m3 0h1m5 0h2m8 0h1m9 0h1m6 0h1m8 0h1m1 0h2m6 0h1m3 0h1m2 0h2m7 0h1m2 0h1m2 0h1m4 0h1m5 0h2m3 0h1m8 0h1m10 0h1m5 0h1M14 122h2m6 0h1m6 0h1m7 0h1m5 0h1m2 0h1m18 0h1m5 0h1m8 0h1m10 0h1m1 0h1m5 0h1m2 0h1m5 0h3m13 0h1m1 0h1m10 0h1m4 0h1m3 0h1m9 0h1m3 0h1m8 0h1m27 0h1M7 123h1m25 0h1m5 0h1m11 0h1m25 0h1m4 0h1m3 0h1m14 0h1m2 0h2m2 0h1m8 0h1m12 0h1m1 0h1m3 0h1m9 0h1m7 0h1m4 0h1m1 0h1m12 0h2m11 0h1m1 0h2m2 0h1M1 124h1m11 0h1m2 0h1m1 0h1m4 0h1m5 0h1m3 0h1m13 0h1m15 0h1m2 0h1m6 0h1m6 0h1m2 0h1m15 0h1m1 0h3m1 0h1m6 0h1m1 0h1m12 0h1m5 0h1m5 0h1m9 0h1m10 0h2m9 0h1m9 0h1m8 0h1m4 0h1m1 0h1M7 125h1m9 0h1m6 0h1m16 0h2m9 0h1m7 0h1m2 0h1m2 0h1m11 0h1m2 0h1m9 0h1m3 0h1m2 0h1m2 0h1m4 0h1m3 0h1m15 0h1m8 0h1m8 0h1m2 0h1m8 0h1m2 0h1m7 0h1m1 0h1m6 0h2m19 0h1M22 126h2m14 0h1m9 0h1m4 0h1m7 0h1m20 0h2m7 0h1m6 0h1m16 0h1m2 0h1m8 0h1m9 0h1m6 0h1m8 0h1m1 0h1m3 0h1m7 0h1M2 127h1m9 0h1m3 0h1m12 0h1m1 0h1m1 0h1m4 0h1m17 0h1m1 0h1m9 0h1m16 0h1m2 0h1m14 0h1m3 0h1m6 0h1m1 0h1m7 0h1m1 0h1m4 0h1m5 0h1m5 0h3m36 0h1m10 0h1M10 128h1m9 0h1m4 0h1m6 0h1m1 0h1m2 0h1m7 0h1m3 0h1m9 0h1m2 0h1m3 0h1m28 0h1m4 0h1m10 0h1m11 0h1m12 0h1m22 0h2m13 0h1m5 0h1m9 0h1M1 129h1m1 0h2m3 0h1m5 0h3m11 0h1m10 0h1m1 0h1m8 0h2m16 0h1m7 0h1m3 0h1m2 0h2m1 0h1m16 0h1m6 0h1m2 0h3m1 0h1m11 0h1m14 0h1m16 0h1m3 0h1m7 0h1m10 0h1m10 0h1M10 130h1m5 0h2m19 0h1m8 0h2m3 0h1m6 0h1m8 0h1m3 0h2m3 0h1m3 0h1m4 0h1m7 0h1m3 0h1m7 0h1m2 0h1m3 0h1m4 0h1m13 0h1m3 0h1m1 0h2m1 0h1m1 0h1m8 0h1m9 0h1m1 0h2m11 0h1m3 0h1m3 0h1m11 0h1M4 131h1m3 0h1m2 0h1m31 0h1m5 0h1m25 0h1m4 0h1m28 0h1m3 0h2m3 0h1m7 0h1m13 0h4m23 0h1m2 0h1m1 0h2m6 0h1m17 0h1M1 132h1m9 0h1m5 0h1m20 0h2m12 0h1m5 0h1m3 0h1m3 0h1m3 0h1m3 0h1m8 0h1m1 0h1m17 0h1m10 0h1m2 0h1m3 0h1m9 0h1m11 0h1m4 0h1m4 0h1m4 0h1m5 0h1m6 0h1m6 0h1m5 0h1m13 0h1M7 133h1m13 0h1m1 0h3m4 0h1m1 0h1m5 0h1m6 0h1m22 0h1m10 0h1m1 0h1m7 0h1m4 0h1m3 0h2m4 0h1m1 0h1m7 0h1m11 0h1m4 0h2m10 0h1m4 0h1m3 0h1m12 0h1m5 0h2m2 0h1m4 0h1m11 0h1m3 0h1M11 134h1m2 0h1m22 0h2m5 0h1m3 0h1m1 0h1m1 0h1m1 0h1m2 0h2m8 0h1m5 0h1m2 0h1m7 0h1m1 0h1m2 0h1m1 0h1m9 0h1m7 0h1m2 0h1m2 0h2m2 0h1m11 0h2m3 0h1m12 0h1m6 0h1m4 0h1m13 0h1m11 0h1m3 0h1m1 0h1m1 0h1m3 0h1M12 135h1m7 0h3m14 0h1m4 0h1m3 0h1m11 0h1m24 0h1m2 0h1m2 0h1m3 0h1m4 0h1m18 0h1m3 0h1m9 0h1m9 0h1m5 0h1m14 0h2m14 0h1m3 0h1m6 0h1m6 0h1M0 136h1m14 0h1m10 0h1m6 0h1m11 0h1m4 0h1m2 0h1m7 0h1m3 0h1m9 0h1m4 0h1m7 0h2m4 0h1m9 0h1m8 0h1m3 0h1m8 0h3m2 0h1m4 0h1m1 0h1m17 0h1m12 0h1m2 0h1m2 0h1m4 0h1m7 0h1m1 0h1M2 137h1m1 0h1m4 0h1m2 0h1m12 0h1m4 0h1m9 0h1m1 0h1m1 0h1m15 0h2m1 0h1m6 0h1m22 0h1m2 0h1m30 0h1m4 0h1m6 0h2m7 0h1m1 0h1m1 0h2m7 0h1m8 0h1m2 0h1m12 0h1m5 0h1m3 0h1M0 138h1m11 0h1m2 0h1m4 0h1m1 0h1m1 0h1m5 0h1m3 0h1m15 0h1m1 0h1m3 0h3m10 0h1m11 0h1m6 0h1m1 0h1m13 0h2m13 0h1m8 0h1m2 0h1m4 0h1m23 0h1m2 0h1m8 0h1m1 0h1m1 0h1m5 0h1m15 0h1M7 139h1m5 0h1m4 0h1m1 0h1m6 0h1m12 0h1m2 0h1m5 0h2m9 0h1m1 0h1m1 0h1m2 0h1m10 0h1m41 0h1m2 0h1m22 0h1m7 0h1m10 0h1m1 0h1m7 0h2m5 0h1m1 0h1m5 0h1m5 0h1M1 140h1m6 0h1m9 0h1m15 0h2m1 0h3m8 0h1m1 0h2m1 0h1m2 0h1m1 0h1m1 0h1m16 0h1m17 0h1m8 0h1m2 0h1m2 0h1m1 0h2m18 0h1m4 0h1m3 0h3m2 0h1m11 0h1m4 0h1m4 0h2m5 0h1m1 0h1m4 0h1m1 0h1m13 0h1M0 141h1m1 0h1m3 0h1m4 0h3m1 0h1m3 0h1m8 0h1m4 0h1m3 0h1m1 0h1m1 0h1m6 0h1m13 0h1m1 0h1m5 0h1m1 0h1m9 0h1m5 0h1m2 0h1m10 0h1m4 0h1m1 0h1m5 0h1m9 0h1m3 0h1m12 0h1m2 0h1m23 0h1m2 0h1m22 0h1M10 142h2m3 0h1m3 0h1m10 0h1m8 0h1m2 0h1m10 0h1m7 0h1m3 0h2m2 0h1m12 0h1m1 0h1m14 0h1m4 0h1m1 0h1m6 0h2m1 0h1m3 0h2m2 0h4m9 0h1m7 0h1m4 0h2m14 0h1m2 0h1m1 0h1m6 0h1m1 0h1m3 0h1M6 143h1m24 0h1m8 0h1m2 0h1m3 0h1m1 0h1m15 0h1m1 0h1m5 0h1m22 0h1m13 0h2m4 0h1m6 0h1m5 0h1m9 0h1m3 0h1m8 0h2m12 0h1m22 0h1m8 0h1M6 144h1m12 0h1m1 0h1m4 0h1m4 0h1m3 0h1m14 0h1m4 0h1m1 0h1m10 0h1m12 0h1m15 0h1m21 0h1m24 0h1m3 0h1m3 0h1m14 0h1m1 0h1m2 0h1m9 0h1m3 0h1m5 0h1m3 0h1m1 0h1M12 145h1m8 0h3m17 0h1m10 0h2m8 0h1m4 0h1m5 0h1m10 0h1m15 0h1m1 0h1m2 0h1m4 0h2m7 0h1m2 0h1m1 0h2m20 0h1m7 0h1m3 0h1m7 0h1m19 0h2m2 0h2m2 0h1M1 146h1m13 0h1m5 0h2m11 0h1m1 0h1m9 0h1m4 0h1m2 0h1m1 0h1m1 0h1m18 0h1m1 0h1m22 0h1m10 0h1m6 0h1m1 0h1m4 0h1m4 0h3m11 0h1m2 0h1m1 0h2m7 0h5m13 0h1m12 0h1m6 0h1M17 147h1m32 0h1m5 0h1m1 0h1m4 0h1m7 0h1m1 0h1m3 0h1m17 0h1m2 0h1m12 0h1m1 0h1m21 0h1m31 0h2m5 0h1m2 0h1m12 0h1m4 0h1m1 0h1M9 148h1m2 0h1m1 0h1m9 0h1m9 0h1m3 0h2m3 0h2m17 0h1m2 0h1m1 0h1m10 0h2m3 0h2m1 0h1m1 0h1m1 0h1m9 0h1m3 0h1m2 0h1m3 0h1m10 0h1m24 0h1m3 0h1m13 0h1m9 0h1m1 0h1m1 0h2m7 0h1m3 0h2m3 0h1M0 149h1m4 0h1m3 0h3m1 0h1m3 0h1m1 0h2m2 0h1m7 0h2m4 0h1m2 0h1m11 0h1m7 0h2m2 0h1m5 0h2m33 0h2m7 0h2m14 0h1m1 0h1m4 0h2m1 0h1m4 0h1m8 0h1m15 0h1m17 0h1m2 0h1m2 0h1m1 0h1M2 150h1m2 0h1m2 0h1m11 0h1m3 0h1m5 0h1m5 0h1m10 0h1m2 0h3m18 0h1m9 0h1m3 0h1m3 0h1m2 0h1m3 0h1m1 0h1m9 0h1m3 0h1m2 0h1m13 0h1m1 0h3m17 0h1m7 0h1m2 0h1m1 0h1m16 0h1m5 0h1m3 0h1m3 0h1m1 0h1M5 151h1m3 0h1m2 0h2m3 0h2m7 0h2m10 0h1m19 0h1m7 0h1m6 0h1m10 0h1m2 0h1m9 0h1m1 0h1m5 0h3m2 0h2m14 0h1m5 0h1m2 0h1m7 0h1m1 0h1m2 0h1m8 0h1m3 0h1m3 0h1m5 0h1m1 0h1m7 0h1m8 0h1M8 152h1m2 0h1m8 0h1m11 0h1m5 0h1m2 0h1m1 0h1m21 0h2m12 0h1m11 0h1m8 0h1m1 0h1m1 0h1m9 0h1m11 0h1m1 0h1m5 0h1m21 0h1m1 0h1m2 0h2m12 0h2m7 0h1m3 0h1M1 153h2m2 0h1m2 0h1m5 0h1m6 0h1m3 0h1m10 0h1m2 0h1m7 0h1m4 0h1m3 0h3m5 0h1m6 0h1m18 0h1m2 0h1m1 0h1m5 0h1m6 0h1m7 0h2m12 0h1m8 0h1m3 0h1m2 0h2m4 0h1m11 0h1m1 0h2m2 0h1m11 0h1m3 0h1m3 0h3M6 154h1m1 0h1m1 0h1m2 0h2m24 0h1m7 0h1m5 0h1m17 0h1m4 0h1m2 0h1m13 0h1m22 0h1m1 0h1m23 0h1m29 0h1m2 0h1m5 0h1m6 0h1m2 0h1M5 155h1m14 0h1m1 0h1m25 0h1m6 0h1m6 0h1m3 0h1m5 0h1m6 0h1m6 0h1m2 0h1m13 0h1m9 0h1m5 0h1m9 0h1m6 0h1m1 0h1m3 0h1m1 0h1m6 0h1m18 0h1m7 0h1m1 0h1m4 0h1m2 0h1m4 0h1M3 156h2m17 0h1m11 0h1m6 0h1m1 0h2m3 0h1m1 0h2m9 0h1m9 0h1m2 0h2m6 0h1m13 0h1m8 0h1m1 0h1m6 0h1m2 0h1m1 0h1m6 0h1m11 0h1m4 0h1m4 0h1m9 0h2m6 0h1m9 0h1m3 0h1m15 0h1m1 0h1M1 157h2m1 0h1m2 0h2m4 0h2m20 0h1m11 0h1m10 0h1m6 0h1m3 0h1m24 0h1m20 0h1m3 0h1m28 0h1m10 0h1m7 0h1m5 0h1m5 0h2m4 0h1M15 158h1m9 0h1m7 0h1m4 0h1m1 0h1m7 0h1m14 0h1m1 0h1m9 0h1m9 0h1m7 0h1m7 0h1m26 0h1m7 0h2m14 0h1m5 0h1m6 0h1m3 0h1m8 0h2M5 159h1m6 0h2m12 0h1m2 0h1m2 0h1m23 0h1m12 0h1m1 0h1m8 0h1m1 0h1m2 0h1m1 0h1m10 0h1m1 0h1m1 0h2m2 0h1m7 0h1m4 0h1m9 0h1m12 0h1m5 0h1m4 0h1m1 0h1m11 0h1m1 0h1m6 0h1m8 0h1" stroke="#000034"/><path d="M1 0h1m13 0h1m8 0h1m3 0h1m6 0h1m8 0h1m9 0h1m25 0h1m4 0h1m13 0h4m2 0h1m20 0h2m3 0h1m5 0h2m10 0h1m1 0h1m3 0h1m6 0h1m1 0h1m4 0h1m6 0h1m5 0h1m7 0h4M6 1h1m8 0h1m1 0h1m2 0h1m14 0h2m1 0h1m1 0h1m14 0h1m2 0h1m9 0h1m18 0h1m7 0h1m4 0h1m2 0h1m2 0h1m5 0h1m3 0h1m14 0h1m7 0h2m19 0h1m2 0h1m1 0h1m1 0h1m5 0h1m2 0h1m3 0h1M2 2h2m5 0h1m2 0h1m1 0h1m3 0h1m7 0h1m2 0h1m5 0h1m9 0h1m18 0h1m18 0h1m1 0h1m1 0h1m10 0h2m5 0h1m9 0h1m7 0h2m1 0h1m1 0h1m7 0h1m7 0h1m23 0h2m1 0h1m23 0h1M0 3h3m2 0h1m4 0h1m3 0h2m15 0h1m1 0h1m17 0h1m1 0h1m10 0h1m4 0h1m7 0h1m8 0h2m7 0h1m2 0h1m4 0h1m3 0h1m3 0h2m4 0h2m3 0h1m1 0h1m1 0h1m9 0h1m7 0h1m6 0h1m8 0h1m10 0h1m6 0h1m9 0h1m4 0h1m3 0h1M8 4h1m1 0h1m7 0h1m5 0h1m12 0h4m6 0h1m11 0h1m6 0h1m5 0h1m1 0h3m2 0h1m3 0h1m1 0h1m8 0h1m12 0h1m1 0h1m7 0h1m8 0h1m7 0h1m10 0h1m1 0h1m3 0h2m4 0h1m21 0h1m3 0h1M6 5h1m4 0h1m5 0h1m3 0h1m2 0h2m3 0h2m3 0h1m14 0h1m5 0h1m3 0h1m7 0h1m5 0h1m6 0h1m2 0h1m4 0h2m5 0h1m8 0h1m4 0h1m5 0h2m4 0h1m12 0h1m1 0h1m6 0h1m4 0h1m2 0h1m2 0h2m6 0h1m13 0h1m3 0h1m4 0h1M3 6h1m11 0h1m3 0h1m15 0h1m3 0h1m1 0h1m6 0h1m3 0h1m2 0h1m16 0h2m4 0h1m7 0h1m3 0h1m6 0h2m3 0h3m2 0h1m1 0h1m10 0h1m2 0h1m8 0h1m8 0h1m15 0h1m6 0h1m7 0h1m13 0h1M1 7h2m3 0h1m2 0h1m6 0h1m12 0h1m1 0h1m1 0h1m3 0h1m12 0h1m6 0h1m1 0h2m2 0h1m2 0h1m7 0h1m6 0h2m4 0h1m34 0h1m26 0h1m11 0h1m4 0h1m8 0h1m23 0h1M0 8h1m10 0h1m1 0h1m10 0h1m9 0h1m7 0h1m30 0h1m18 0h1m2 0h1m3 0h2m6 0h1m6 0h3m5 0h1m6 0h1m9 0h1m6 0h1m1 0h2m12 0h1m6 0h1m2 0h1m1 0h1m10 0h1m8 0h1m2 0h3M3 9h1m2 0h1m14 0h2m3 0h1m1 0h1m1 0h1m3 0h1m8 0h1m2 0h2m14 0h1m3 0h1m2 0h1m2 0h1m2 0h1m5 0h1m4 0h1m14 0h2m2 0h1m23 0h2m1 0h1m4 0h1m18 0h1m2 0h1m10 0h1m11 0h1M1 10h1m5 0h1m10 0h1m2 0h1m5 0h1m6 0h1m6 0h2m6 0h1m6 0h1m8 0h1m2 0h1m39 0h1m1 0h1m8 0h1m34 0h1m11 0h1m3 0h2m15 0h1m2 0h1m6 0h1M1 11h1m10 0h2m12 0h1m11 0h1m2 0h1m4 0h2m1 0h1m11 0h2m1 0h1m3 0h1m2 0h1m5 0h1m4 0h1m2 0h1m3 0h1m3 0h1m1 0h1m12 0h1m10 0h1m17 0h1m3 0h1m6 0h2m5 0h1m3 0h1m11 0h1m2 0h1M2 12h1m4 0h1m3 0h1m4 0h2m6 0h1m5 0h1m8 0h1m2 0h1m6 0h1m11 0h1m7 0h2m5 0h1m3 0h1m4 0h1m6 0h1m9 0h1m4 0h1m5 0h1m15 0h1m4 0h1m22 0h1m11 0h1m4 0h1m2 0h1m2 0h1m18 0h1M6 13h1m3 0h1m9 0h1m18 0h2m7 0h1m4 0h1m7 0h1m4 0h1m4 0h1m6 0h1m3 0h1m12 0h1m4 0h1m31 0h2m8 0h1m10 0h1m10 0h1m1 0h2m1 0h1m1 0h1m3 0h1m8 0h1m4 0h1M3 14h1m10 0h2m11 0h1m17 0h1m7 0h1m2 0h2m2 0h1m2 0h1m20 0h3m1 0h2m4 0h1m1 0h1m2 0h1m6 0h1m5 0h1m4 0h1m8 0h1m2 0h1m8 0h1m4 0h1m10 0h1m1 0h1m7 0h1m4 0h2m22 0h1m4 0h1M1 15h2m17 0h1m11 0h1m1 0h1m5 0h2m5 0h2m11 0h2m13 0h1m3 0h1m4 0h1m2 0h1m3 0h1m4 0h1m16 0h1m33 0h1m17 0h1m5 0h1m1 0h1m9 0h2m8 0h1M19 16h1m7 0h1m1 0h1m1 0h1m6 0h1m2 0h1m5 0h1m3 0h1m3 0h1m6 0h1m28 0h1m10 0h1m1 0h1m18 0h2m5 0h1m7 0h1m3 0h1m1 0h1m1 0h1m9 0h1m1 0h2m7 0h1m4 0h1m15 0h1m2 0h1m1 0h3M6 17h1m6 0h1m22 0h1m1 0h2m1 0h1m27 0h1m14 0h1m3 0h1m8 0h1m1 0h1m2 0h1m3 0h1m37 0h1m20 0h1m7 0h1m1 0h1m6 0h1m2 0h1m3 0h1m3 0h2M1 18h1m11 0h1m6 0h2m20 0h1m19 0h1m18 0h2m20 0h1m4 0h1m1 0h1m15 0h1m14 0h1m2 0h1m3 0h1m1 0h2m9 0h1m4 0h1m1 0h1m4 0h1m6 0h1m11 0h2M6 19h1m15 0h2m5 0h1m12 0h1m3 0h1m3 0h1m1 0h1m11 0h1m1 0h1m4 0h2m5 0h1m1 0h1m26 0h1m13 0h1m24 0h1m3 0h1m13 0h1m2 0h1m15 0h1m9 0h1m3 0h1M0 20h1m5 0h2m2 0h2m11 0h1m6 0h1m12 0h1m5 0h1m1 0h1m3 0h2m5 0h1m9 0h1m3 0h1m4 0h3m8 0h1m8 0h2m8 0h1m8 0h2m1 0h1m1 0h1m6 0h1m5 0h1m7 0h1m3 0h1m6 0h2m3 0h1m2 0h2m7 0h1m6 0h1m1 0h1m2 0h1m7 0h1m3 0h1M3 21h1m2 0h1m5 0h2m7 0h1m17 0h1m5 0h1m3 0h1m1 0h2m14 0h1m2 0h1m2 0h1m3 0h1m5 0h3m11 0h1m3 0h1m8 0h1m2 0h1m5 0h1m6 0h1m2 0h2m6 0h1m5 0h1m2 0h1m3 0h1m4 0h1m3 0h1m3 0h1m4 0h1m3 0h1m4 0h1m3 0h2m5 0h1m5 0h1m2 0h3M13 22h1m3 0h1m11 0h1m1 0h1m34 0h1m2 0h2m4 0h1m2 0h1m11 0h1m4 0h2m2 0h1m2 0h1m2 0h1m12 0h1m5 0h1m5 0h1m6 0h1m24 0h1m1 0h1m4 0h1m3 0h1m21 0h1M12 23h1m2 0h1m6 0h1m3 0h1m3 0h1m4 0h1m6 0h1m8 0h1m4 0h1m9 0h2m1 0h1m2 0h1m15 0h1m5 0h3m3 0h2m1 0h1m2 0h1m6 0h1m1 0h2m9 0h1m15 0h1m9 0h1m18 0h1m8 0h1m2 0h1m2 0h2m1 0h1m9 0h1M15 24h2m7 0h2m3 0h3m18 0h2m19 0h1m8 0h1m1 0h1m7 0h1m14 0h1m5 0h1m17 0h1m8 0h1m13 0h1m3 0h1m2 0h1m3 0h1m1 0h1m13 0h1m4 0h1m3 0h1m3 0h1m4 0h1M2 25h1m6 0h1m16 0h1m4 0h1m21 0h2m3 0h1m12 0h1m7 0h1m4 0h4m2 0h1m8 0h1m1 0h1m1 0h1m5 0h1m6 0h1m9 0h2m5 0h1m4 0h1m8 0h1m6 0h1m1 0h1m4 0h1m1 0h1m3 0h1m7 0h1m7 0h1M10 26h1m19 0h1m6 0h1m5 0h1m6 0h1m9 0h1m6 0h2m14 0h1m6 0h1m9 0h2m7 0h1m7 0h1m9 0h1m4 0h1m2 0h1m9 0h1m6 0h1m1 0h1m5 0h1m5 0h1m7 0h1m5 0h1m10 0h1m4 0h1M17 27h1m4 0h1m6 0h1m5 0h2m2 0h1m3 0h1m13 0h1m15 0h1m1 0h1m9 0h1m8 0h1m12 0h1m5 0h1m4 0h1m4 0h1m2 0h2m9 0h1m5 0h1m4 0h1m9 0h1m3 0h1m14 0h1m3 0h2m2 0h2m1 0h1m7 0h1M1 28h1m3 0h1m7 0h1m6 0h1m1 0h1m2 0h1m6 0h1m6 0h1m14 0h1m7 0h1m15 0h1m22 0h1m9 0h1m11 0h1m3 0h1m4 0h1m18 0h2m2 0h1m4 0h2m15 0h1m9 0h1M0 29h1m2 0h1m6 0h2m1 0h1m9 0h1m10 0h1m6 0h1m5 0h1m8 0h2m1 0h1m2 0h1m1 0h1m4 0h1m9 0h2m5 0h1m13 0h1m1 0h1m1 0h1m26 0h1m11 0h1m1 0h1m10 0h1m8 0h1m13 0h1M2 30h1m31 0h1m1 0h1m8 0h1m4 0h1m7 0h1m6 0h1m7 0h1m2 0h1m2 0h1m18 0h1m4 0h1m11 0h1m3 0h1m5 0h1m6 0h1m10 0h1m11 0h2m3 0h1m33 0h1m3 0h1M3 31h1m16 0h1m4 0h1m5 0h1m1 0h1m3 0h1m15 0h1m7 0h3m9 0h1m6 0h1m7 0h1m17 0h1m6 0h1m2 0h1m6 0h1m3 0h1m6 0h1m3 0h1m1 0h1m8 0h1m5 0h1m8 0h1m3 0h2m20 0h1m5 0h1M0 32h1m4 0h1m1 0h1m5 0h1m9 0h1m50 0h2m18 0h1m5 0h2m7 0h1m14 0h1m3 0h1m5 0h1m31 0h1m9 0h2m4 0h1m8 0h1M4 33h1m3 0h1m5 0h1m14 0h1m4 0h1m3 0h2m2 0h2m1 0h1m10 0h1m11 0h2m7 0h2m3 0h1m10 0h2m4 0h1m5 0h1m7 0h1m11 0h1m2 0h2m3 0h1m2 0h2m10 0h1m10 0h1m3 0h1m17 0h1m11 0h1m4 0h1M19 34h1m19 0h1m1 0h1m2 0h1m26 0h1m11 0h1m21 0h2m18 0h1m5 0h1m14 0h1m13 0h1m2 0h1m6 0h1m4 0h1m2 0h1m7 0h1M4 35h1m4 0h1m2 0h1m7 0h1m3 0h1m6 0h1m2 0h1m3 0h1m5 0h1m4 0h1m16 0h1m6 0h1m2 0h1m7 0h1m16 0h1m6 0h1m2 0h1m18 0h1m5 0h1m22 0h1m15 0h1M6 36h1m3 0h1m2 0h2m3 0h2m16 0h1m5 0h1m1 0h1m1 0h2m9 0h1m2 0h1m19 0h1m1 0h1m5 0h1m2 0h1m3 0h1m7 0h1m1 0h3m5 0h1m8 0h1m16 0h1m2 0h1m1 0h1m8 0h1m12 0h1m17 0h1M9 37h1m4 0h1m13 0h2m2 0h1m3 0h1m3 0h1m9 0h2m5 0h1m10 0h1m11 0h1m8 0h1m1 0h1m19 0h1m11 0h1m7 0h2m12 0h1m3 0h1m5 0h1m7 0h1m12 0h1m2 0h1m3 0h1m3 0h1m8 0h1M2 38h2m14 0h1m19 0h1m9 0h1m10 0h1m1 0h1m13 0h1m11 0h2m5 0h1m12 0h1m16 0h1m6 0h1m4 0h1m13 0h2m39 0h1m4 0h1M8 39h1m22 0h2m9 0h2m8 0h1m24 0h3m3 0h4m2 0h1m17 0h2m16 0h1m10 0h1m7 0h2m2 0h1m17 0h1m5 0h1m2 0h1m3 0h1m12 0h1m3 0h1m1 0h1M10 40h1m21 0h1m23 0h1m4 0h1m8 0h1m10 0h1m1 0h2m5 0h1m3 0h1m11 0h2m16 0h1m1 0h1m7 0h1m2 0h1m11 0h1m4 0h1m1 0h2m9 0h1m4 0h1m12 0h1m1 0h3m4 0h1M15 41h1m13 0h2m10 0h1m2 0h1m5 0h1m8 0h1m2 0h1m2 0h1m14 0h1m15 0h1m7 0h1m11 0h1m8 0h1m11 0h1m2 0h1m2 0h1m16 0h1m5 0h1m2 0h1m1 0h1m14 0h1m4 0h1M3 42h1m9 0h1m6 0h1m8 0h1m2 0h1m1 0h1m4 0h1m7 0h1m1 0h1m7 0h1m6 0h2m3 0h2m4 0h2m12 0h1m1 0h1m2 0h1m3 0h1m3 0h1m19 0h1m10 0h1m16 0h1m4 0h1m20 0h3M4 43h1m10 0h1m14 0h1m2 0h2m16 0h1m4 0h1m2 0h1m9 0h1m8 0h1m15 0h1m10 0h1m6 0h2m20 0h1m10 0h1m2 0h1m3 0h1m4 0h1m9 0h1m1 0h1m10 0h3M14 44h1m5 0h2m12 0h1m9 0h1m18 0h1m38 0h1m3 0h1m12 0h1m2 0h1m14 0h1m7 0h1m12 0h2m20 0h2M0 45h1m70 0h1m9 0h1m40 0h2m4 0h1m3 0h1m2 0h1m27 0h1m2 0h1m2 0h1m5 0h1m9 0h1M7 46h1m2 0h1m6 0h1m2 0h2m7 0h1m4 0h1m9 0h2m24 0h1m6 0h1m8 0h1m1 0h1m2 0h1m5 0h1m2 0h1m1 0h1m1 0h1m10 0h1m8 0h1m1 0h2m32 0h1m9 0h1m17 0h1M5 47h1m18 0h1m2 0h1m13 0h1m1 0h1m3 0h1m4 0h1m3 0h1m3 0h1m16 0h1m26 0h1m2 0h1m14 0h1m5 0h1m2 0h1m13 0h1m1 0h2m11 0h1m30 0h1m2 0h1M3 48h1m6 0h1m6 0h1m3 0h1m11 0h1m8 0h1m10 0h2m6 0h1m4 0h1m11 0h1m5 0h1m5 0h1m7 0h1m17 0h1m14 0h1m1 0h1m38 0h1m18 0h1m7 0h1M17 49h1m13 0h1m7 0h1m9 0h1m3 0h1m2 0h1m1 0h1m29 0h1m4 0h1m1 0h1m2 0h1m4 0h1m3 0h1m7 0h1m5 0h1m5 0h1m19 0h1m35 0h1m1 0h1m7 0h1m3 0h1m1 0h1M6 50h1m2 0h1m6 0h1m6 0h1m6 0h2m1 0h2m5 0h1m1 0h1m7 0h1m5 0h1m6 0h1m4 0h1m4 0h1m5 0h2m2 0h1m1 0h3m9 0h1m5 0h1m3 0h1m3 0h2m1 0h1m10 0h1m4 0h1m8 0h1m13 0h1m11 0h1m2 0h1m5 0h1m2 0h1m4 0h1m11 0h1m1 0h1M10 51h1m17 0h1m6 0h1m2 0h1m18 0h3m2 0h1m11 0h1m9 0h2m24 0h1m2 0h1m13 0h2m14 0h1m2 0h1m3 0h1m9 0h1m1 0h1m3 0h1m5 0h1M2 52h1m3 0h1m5 0h2m12 0h1m12 0h1m9 0h1m11 0h1m6 0h1m1 0h1m20 0h3m10 0h1m3 0h2m4 0h1m3 0h1m3 0h1m31 0h1m35 0h1M0 53h2m3 0h1m1 0h1m4 0h2m12 0h2m4 0h1m7 0h1m17 0h1m7 0h1m6 0h1m11 0h1m4 0h1m8 0h1m4 0h1m2 0h1m5 0h1m24 0h2m16 0h1m2 0h1m14 0h1m1 0h1m1 0h1m14 0h1M6 54h1m17 0h2m8 0h1m3 0h2m5 0h1m1 0h1m5 0h1m5 0h1m2 0h1m2 0h1m3 0h1m3 0h1m6 0h1m15 0h1m13 0h1m7 0h1m6 0h1m4 0h2m5 0h1m14 0h1m2 0h1m3 0h1m9 0h1m1 0h1m15 0h2m5 0h1M17 55h1m4 0h2m1 0h1m2 0h1m7 0h1m12 0h1m8 0h1m11 0h1m5 0h1m1 0h1m1 0h1m8 0h1m11 0h1m6 0h1m1 0h1m1 0h1m10 0h1m1 0h1m12 0h1m5 0h1m4 0h1m2 0h1m8 0h1m6 0h1m5 0h3m4 0h1m4 0h1m1 0h1m2 0h1M5 56h2m6 0h1m2 0h1m1 0h1m1 0h2m13 0h1m4 0h1m1 0h1m2 0h1m21 0h2m6 0h1m10 0h1m2 0h1m9 0h1m5 0h1m3 0h1m6 0h1m8 0h1m1 0h1m6 0h1m5 0h1m6 0h1m3 0h1m7 0h1m5 0h1m4 0h1m16 0h3M27 57h1m14 0h1m3 0h1m2 0h1m2 0h2m2 0h5m1 0h1m1 0h2m1 0h1m13 0h3m3 0h1m6 0h1m5 0h1m4 0h2m1 0h1m8 0h1m6 0h1m2 0h1m9 0h1m4 0h1m17 0h1m1 0h1m4 0h1m9 0h1m4 0h1m4 0h2m1 0h1m4 0h1m1 0h1M1 58h1m14 0h1m14 0h1m1 0h1m14 0h1m14 0h1m1 0h1m7 0h1m4 0h1m1 0h1m1 0h1m8 0h1m5 0h1m5 0h1m2 0h2m1 0h1m4 0h2m8 0h1m3 0h1m12 0h1m1 0h1m5 0h2m12 0h1m7 0h1m8 0h1m9 0h1M0 59h1m4 0h1m7 0h1m7 0h1m3 0h1m11 0h1m20 0h2m2 0h1m3 0h2m3 0h1m4 0h1m2 0h1m6 0h1m6 0h1m1 0h1m11 0h2m3 0h1m3 0h1m2 0h1m19 0h1m4 0h1m9 0h1m7 0h2m5 0h1m15 0h1m1 0h1m2 0h1M5 60h1m2 0h1m15 0h1m3 0h1m4 0h1m3 0h1m33 0h2m6 0h1m3 0h1m2 0h2m19 0h1m13 0h1m22 0h1m24 0h2m4 0h2m15 0h1m1 0h1M2 61h2m7 0h1m1 0h1m1 0h1m3 0h2m10 0h2m5 0h1m2 0h1m8 0h2m4 0h1m6 0h1m6 0h1m19 0h1m20 0h1m6 0h1m2 0h1m4 0h1m13 0h1m2 0h1m2 0h1m7 0h1m10 0h1m4 0h1m2 0h1m7 0h1m5 0h1m1 0h1m1 0h1m6 0h1M2 62h1m3 0h1m6 0h1m5 0h1m5 0h2m1 0h1m8 0h1m4 0h1m5 0h1m16 0h1m7 0h1m2 0h1m14 0h1m12 0h1m9 0h1m5 0h2m7 0h1m7 0h1m7 0h1m3 0h1m1 0h1m19 0h1m3 0h1m3 0h1m1 0h1m3 0h1m4 0h1m6 0h1M1 63h1m3 0h1m2 0h1m1 0h1m15 0h1m6 0h2m10 0h2m4 0h1m1 0h1m6 0h2m9 0h2m1 0h1m14 0h1m2 0h1m17 0h1m31 0h2m6 0h1m8 0h1m5 0h1m5 0h1m6 0h1m18 0h2M1 64h1m1 0h1m7 0h1m3 0h1m1 0h1m5 0h1m5 0h1m18 0h2m5 0h2m6 0h1m18 0h1m3 0h1m12 0h2m1 0h3m6 0h1m3 0h1m8 0h2m6 0h1m12 0h1m3 0h1m21 0h1m6 0h1m6 0h1M9 65h1m3 0h2m12 0h1m1 0h1m10 0h1m1 0h1m2 0h1m11 0h1m4 0h1m2 0h1m4 0h3m6 0h1m10 0h2m3 0h1m24 0h2m5 0h1m4 0h1m7 0h1m4 0h1m12 0h1m8 0h2m12 0h1m2 0h1m3 0h1m4 0h1m5 0h1M2 66h2m1 0h3m6 0h1m19 0h2m5 0h1m3 0h1m3 0h1m10 0h1m5 0h1m4 0h1m7 0h2m16 0h1m1 0h1m13 0h1m4 0h1m8 0h1m5 0h1m6 0h1m7 0h1m2 0h1m1 0h1m6 0h1m2 0h1m15 0h1m4 0h1m1 0h1M3 67h1m8 0h1m2 0h1m11 0h1m5 0h1m2 0h1m22 0h1m3 0h1m3 0h1m7 0h1m2 0h2m4 0h1m4 0h1m7 0h1m10 0h1m12 0h1m2 0h2m28 0h1m21 0h1m4 0h2m2 0h1m3 0h1m6 0h1M18 68h1m13 0h3m2 0h1m3 0h1m10 0h2m2 0h1m3 0h1m12 0h1m5 0h1m2 0h1m9 0h1m1 0h1m17 0h1m6 0h1m4 0h1m1 0h1m8 0h1m3 0h1m4 0h1m6 0h1m5 0h1m2 0h1m9 0h1m1 0h1m1 0h1m8 0h1m11 0h1M7 69h1m13 0h1m7 0h1m9 0h1m11 0h1m4 0h1m12 0h1m1 0h1m2 0h1m1 0h2m1 0h3m8 0h1m34 0h1m1 0h1m5 0h1m13 0h1m2 0h1m1 0h1m23 0h1m4 0h1m2 0h2M5 70h1m10 0h1m20 0h1m1 0h1m6 0h1m3 0h1m2 0h1m2 0h1m9 0h1m4 0h1m15 0h1m3 0h1m19 0h1m2 0h1m21 0h1m7 0h1m2 0h1m2 0h2m22 0h2m1 0h1m1 0h1m8 0h1M15 71h1m7 0h2m5 0h1m3 0h1m10 0h1m2 0h1m13 0h1m19 0h1m1 0h1m3 0h1m3 0h1m3 0h1m4 0h2m3 0h1m17 0h2m6 0h1m10 0h1m5 0h1m9 0h1m1 0h3m3 0h2m6 0h1m6 0h1m2 0h1m13 0h1M0 72h1m3 0h1m2 0h1m5 0h1m11 0h2m4 0h1m1 0h1m10 0h1m3 0h2m3 0h1m7 0h1m6 0h1m5 0h1m3 0h1m13 0h1m13 0h1m6 0h1m5 0h2m4 0h1m24 0h1m17 0h1m2 0h1m1 0h1m9 0h1m3 0h1m6 0h1M8 73h1m3 0h1m6 0h1m15 0h1m5 0h1m7 0h1m4 0h1m11 0h1m7 0h2m1 0h1m24 0h1m22 0h1m10 0h1m1 0h1m7 0h1m7 0h1m4 0h2m2 0h1m5 0h1m1 0h1m16 0h1M4 74h1m15 0h1m10 0h1m2 0h1m3 0h1m1 0h1m1 0h2m41 0h1m1 0h1m4 0h1m6 0h1m6 0h1m1 0h1m1 0h1m21 0h1m1 0h1m10 0h1m18 0h1m7 0h1m8 0h1m12 0h1M10 75h3m6 0h1m4 0h1m5 0h1m2 0h1m18 0h1m8 0h1m2 0h1m2 0h1m6 0h1m2 0h1m15 0h1m2 0h1m6 0h1m23 0h2m1 0h2m3 0h1m14 0h1m4 0h1m7 0h1m14 0h1m5 0h1m3 0h1m7 0h1M0 76h1m7 0h1m22 0h2m3 0h1m7 0h1m10 0h1m3 0h1m4 0h1m14 0h1m6 0h1m3 0h1m16 0h1m11 0h1m28 0h1m4 0h1m8 0h1m6 0h2m10 0h1m5 0h1m5 0h1M2 77h1m9 0h2m2 0h1m4 0h1m12 0h2m4 0h1m5 0h1m4 0h1m2 0h1m14 0h1m5 0h1m3 0h1m2 0h1m4 0h1m15 0h2m2 0h1m6 0h1m2 0h1m7 0h1m3 0h1m24 0h1m15 0h1m11 0h1m1 0h1m5 0h1M6 78h3m19 0h1m1 0h1m8 0h1m16 0h1m6 0h1m4 0h2m23 0h1m4 0h1m3 0h1m1 0h2m14 0h1m5 0h1m10 0h1m3 0h1m6 0h1m4 0h1m11 0h1m4 0h2m19 0h1m6 0h1M4 79h1m4 0h1m4 0h1m9 0h1m9 0h1m5 0h1m2 0h1m13 0h1m8 0h1m19 0h1m11 0h1m2 0h1m4 0h1m2 0h1m3 0h1m6 0h1m9 0h1m14 0h1m1 0h1m3 0h1m12 0h1m15 0h1m4 0h1m10 0h1m2 0h1M6 80h1m12 0h1m6 0h1m22 0h1m5 0h1m5 0h1m2 0h1m3 0h1m16 0h1m2 0h1m19 0h1m2 0h1m10 0h1m7 0h1m6 0h2m12 0h1m3 0h1m1 0h1m12 0h2m3 0h1m9 0h1m4 0h1M0 81h2m8 0h1m8 0h1m1 0h1m7 0h1m8 0h1m25 0h1m1 0h1m6 0h1m3 0h2m3 0h1m7 0h2m9 0h2m8 0h1m8 0h1m6 0h1m29 0h3m13 0h3m23 0h1M0 82h2m2 0h1m4 0h1m1 0h1m5 0h2m6 0h1m9 0h4m1 0h1m1 0h1m18 0h1m2 0h1m15 0h2m20 0h1m13 0h1m1 0h1m7 0h1m3 0h1m3 0h1m3 0h1m5 0h1m5 0h1m2 0h1m10 0h1m4 0h1m2 0h1m3 0h1m6 0h1m8 0h1M5 83h2m1 0h1m4 0h1m17 0h1m7 0h1m5 0h1m5 0h2m1 0h1m20 0h1m5 0h1m11 0h1m1 0h1m9 0h2m2 0h1m2 0h1m9 0h1m3 0h1m5 0h1m7 0h2m4 0h1m3 0h2m3 0h2m9 0h1m26 0h1m4 0h1M5 84h1m3 0h1m22 0h1m2 0h1m1 0h1m2 0h1m18 0h1m6 0h2m2 0h1m6 0h1m8 0h1m25 0h1m17 0h1m1 0h1m3 0h1m4 0h1m4 0h1m3 0h1m1 0h1m4 0h1m6 0h1m6 0h2m4 0h2m1 0h1m1 0h1m13 0h1M10 85h1m10 0h1m4 0h1m4 0h1m8 0h1m15 0h1m2 0h1m11 0h1m10 0h1m14 0h1m2 0h1m2 0h1m12 0h1m15 0h1m1 0h1m11 0h1m10 0h2m10 0h1m6 0h1m9 0h1m1 0h1m1 0h2M2 86h1m15 0h1m15 0h1m5 0h1m2 0h1m45 0h2m1 0h1m16 0h1m5 0h1m5 0h1m13 0h1m22 0h1m5 0h1m1 0h1m16 0h1m15 0h1M18 87h1m8 0h1m8 0h1m13 0h1m1 0h1m1 0h1m13 0h1m9 0h1m3 0h1m2 0h2m10 0h1m4 0h1m20 0h1m3 0h1m6 0h1m1 0h1m17 0h1m10 0h1m7 0h1m6 0h1m4 0h1m1 0h1m3 0h1M3 88h2m11 0h1m1 0h1m1 0h2m15 0h1m4 0h1m7 0h1m1 0h1m8 0h1m3 0h1m10 0h1m5 0h1m6 0h1m5 0h1m8 0h1m4 0h1m11 0h1m12 0h2m5 0h2m14 0h1m4 0h1m7 0h1m2 0h1m19 0h1M16 89h2m5 0h1m23 0h1m20 0h2m19 0h1m9 0h1m1 0h1m5 0h1m5 0h1m5 0h1m2 0h1m16 0h1m1 0h1m22 0h1m2 0h1m5 0h1m3 0h1m8 0h1m5 0h1M36 90h1m4 0h1m3 0h1m24 0h2m12 0h1m13 0h1m8 0h1m9 0h1m6 0h1m15 0h1m4 0h1m9 0h2m5 0h1m1 0h1m18 0h1m1 0h2m8 0h1M0 91h1m12 0h1m17 0h2m4 0h1m7 0h1m3 0h1m4 0h1m2 0h1m1 0h1m58 0h1m4 0h1m8 0h1m2 0h1m2 0h1m24 0h1m7 0h1m5 0h1m19 0h1M8 92h1m10 0h1m8 0h1m3 0h1m19 0h1m4 0h1m3 0h2m1 0h1m29 0h1m1 0h2m3 0h1m10 0h1m14 0h1m12 0h1m7 0h1m2 0h2m10 0h1m19 0h1m1 0h1M16 93h2m8 0h1m9 0h1m4 0h2m1 0h1m2 0h1m2 0h1m4 0h2m4 0h1m9 0h1m3 0h1m2 0h1m9 0h1m1 0h1m9 0h1m9 0h1m21 0h1m7 0h1m5 0h1m1 0h1M2 94h1m1 0h1m1 0h1m3 0h1m1 0h1m3 0h1m1 0h1m1 0h1m12 0h1m15 0h1m3 0h1m2 0h1m38 0h1m1 0h1m3 0h1m4 0h2m5 0h1m25 0h1m1 0h1m9 0h1m9 0h1m7 0h1m7 0h1m5 0h1M25 95h1m2 0h1m20 0h1m15 0h1m2 0h1m4 0h1m5 0h1m13 0h1m4 0h1m2 0h1m28 0h1m5 0h1m10 0h1m16 0h1m5 0h1m1 0h1m1 0h1m4 0h1m17 0h1M10 96h1m6 0h2m5 0h1m3 0h1m2 0h1m4 0h1m2 0h1m5 0h1m9 0h1m3 0h1m1 0h1m2 0h1m3 0h1m16 0h1m8 0h1m3 0h1m6 0h1m3 0h1m1 0h1m4 0h1m2 0h1m3 0h1m58 0h1M5 97h1m21 0h1m4 0h1m5 0h1m3 0h1m5 0h1m6 0h1m8 0h1m43 0h2m2 0h1m2 0h1m2 0h1m1 0h1m10 0h1m1 0h1m10 0h1m6 0h1m8 0h1m7 0h1m3 0h1m4 0h1m13 0h1M4 98h1m2 0h1m1 0h1m6 0h1m4 0h1m43 0h1m5 0h1m15 0h2m26 0h1m1 0h1m1 0h1m2 0h1m2 0h1m1 0h1m6 0h2m3 0h1m1 0h1m4 0h2m19 0h1m6 0h1m7 0h1m7 0h2m2 0h1M6 99h1m7 0h1m11 0h1m15 0h1m1 0h1m7 0h1m18 0h1m9 0h2m3 0h1m3 0h2m11 0h1m3 0h1m24 0h2m1 0h1m18 0h2m2 0h1m20 0h1m7 0h1m2 0h1M5 100h1m3 0h1m10 0h1m8 0h1m2 0h1m27 0h1m9 0h1m10 0h2m4 0h1m26 0h2m4 0h1m9 0h1m4 0h1m2 0h1m12 0h1m7 0h1m24 0h1m8 0h1M16 101h1m4 0h1m3 0h1m4 0h2m19 0h1m5 0h1m17 0h1m3 0h1m1 0h2m32 0h1m3 0h2m20 0h1m4 0h2m21 0h1m25 0h1M3 102h1m12 0h1m9 0h1m5 0h2m15 0h1m6 0h1m15 0h1m1 0h1m1 0h1m6 0h1m1 0h1m3 0h1m3 0h1m13 0h1m1 0h1m2 0h1m2 0h1m5 0h1m2 0h1m11 0h1m2 0h1m2 0h1m6 0h2m7 0h1M2 103h1m13 0h1m4 0h1m10 0h1m22 0h1m9 0h1m8 0h1m38 0h1m3 0h1m10 0h1m24 0h1m39 0h1M2 104h1m3 0h1m4 0h1m16 0h1m17 0h1m2 0h1m1 0h1m10 0h1m13 0h2m17 0h1m2 0h1m17 0h1m28 0h1m12 0h1m2 0h1m14 0h1m13 0h1M6 105h1m3 0h1m5 0h1m1 0h1m4 0h1m4 0h1m1 0h3m8 0h2m2 0h1m1 0h3m6 0h1m5 0h1m12 0h1m1 0h1m12 0h1m5 0h1m4 0h1m22 0h1m6 0h1m5 0h1m10 0h1m1 0h1m8 0h1m9 0h2m19 0h1m5 0h2M2 106h1m1 0h1m9 0h1m5 0h1m26 0h2m2 0h1m39 0h1m2 0h1m8 0h1m1 0h1m20 0h1m1 0h1m6 0h1m12 0h1m3 0h1m1 0h1m2 0h1m3 0h1m12 0h1m1 0h1m8 0h1M1 107h1m1 0h1m8 0h1m2 0h1m2 0h1m16 0h1m2 0h1m1 0h1m3 0h1m3 0h1m4 0h1m8 0h2m12 0h1m21 0h1m5 0h1m1 0h1m1 0h1m13 0h1m7 0h1m4 0h1m20 0h1m4 0h1m9 0h1m15 0h1m7 0h1m1 0h1M29 108h1m25 0h1m1 0h1m8 0h1m2 0h1m7 0h1m11 0h1m26 0h1m2 0h1m10 0h1m7 0h1m2 0h1m9 0h1m6 0h1m2 0h1m7 0h1m1 0h2m17 0h1m4 0h1M4 109h1m6 0h1m1 0h1m1 0h1m2 0h1m1 0h2m11 0h1m18 0h1m3 0h1m1 0h1m2 0h1m2 0h1m8 0h1m14 0h1m2 0h2m6 0h1m10 0h1m14 0h1m27 0h1m5 0h1m3 0h1m9 0h1m2 0h1m1 0h1m2 0h1m4 0h1M5 110h1m20 0h1m11 0h1m4 0h1m3 0h1m1 0h2m7 0h1m2 0h2m2 0h1m18 0h2m4 0h3m2 0h1m8 0h1m8 0h1m6 0h1m11 0h1m3 0h1m14 0h1m2 0h2m1 0h1m1 0h1m16 0h1m16 0h1m4 0h1M1 111h1m14 0h1m20 0h1m2 0h1m9 0h1m2 0h1m1 0h1m4 0h1m10 0h1m2 0h1m12 0h1m9 0h2m6 0h1m1 0h1m28 0h2m6 0h1m6 0h1m15 0h1m2 0h1M3 112h1m7 0h1m8 0h5m2 0h1m12 0h1m15 0h1m10 0h1m2 0h1m6 0h1m4 0h1m4 0h1m7 0h1m4 0h1m9 0h1m6 0h3m6 0h1m1 0h1m14 0h1m2 0h3m2 0h1m3 0h1m7 0h1m1 0h1m11 0h1m2 0h3m6 0h1M0 113h1m8 0h1m11 0h2m3 0h3m7 0h1m1 0h1m7 0h3m1 0h1m19 0h1m1 0h1m7 0h1m7 0h3m18 0h1m7 0h1m27 0h1m11 0h1m7 0h1m12 0h1m3 0h2m1 0h1m6 0h1M6 114h1m6 0h1m10 0h1m5 0h2m3 0h1m4 0h1m22 0h1m4 0h1m14 0h1m2 0h1m1 0h3m6 0h1m1 0h1m10 0h1m1 0h1m6 0h1m11 0h1m1 0h1m17 0h1m6 0h1m14 0h1m2 0h1m3 0h1m1 0h1M11 115h1m1 0h1m12 0h1m2 0h1m14 0h1m6 0h1m44 0h1m3 0h1m4 0h1m3 0h1m8 0h1m6 0h1m6 0h1m15 0h1m9 0h1m1 0h1m8 0h2m4 0h1m5 0h1m3 0h1M1 116h1m4 0h1m4 0h1m7 0h1m7 0h1m5 0h1m3 0h1m14 0h1m6 0h1m3 0h1m1 0h1m4 0h1m4 0h1m13 0h2m16 0h1m1 0h1m5 0h4m6 0h1m4 0h1m4 0h1m2 0h1m16 0h1m6 0h1m7 0h1m1 0h1m17 0h1M0 117h1m10 0h1m2 0h1m10 0h1m30 0h1m8 0h2m2 0h3m24 0h2m15 0h1m4 0h1m23 0h1m8 0h1m3 0h1m1 0h1m9 0h1m13 0h1m17 0h1M6 118h1m9 0h1m5 0h1m10 0h1m8 0h1m9 0h1m11 0h1m5 0h1m8 0h1m1 0h1m8 0h1m2 0h1m1 0h1m12 0h1m5 0h1m7 0h1m12 0h1m6 0h2m3 0h1m4 0h1m1 0h2m3 0h1m7 0h1m5 0h1m3 0h1m6 0h1M10 119h1m14 0h1m3 0h1m2 0h1m8 0h1m8 0h1m4 0h1m3 0h1m2 0h1m9 0h1m21 0h1m4 0h1m3 0h1m10 0h2m2 0h1m6 0h1m17 0h1m5 0h1m4 0h1m6 0h1m2 0h1m3 0h1m9 0h1m8 0h1m1 0h1m3 0h1m1 0h1M5 120h1m3 0h1m1 0h1m14 0h1m4 0h1m18 0h1m16 0h1m7 0h1m8 0h1m2 0h1m32 0h1m9 0h1m4 0h1m6 0h1m2 0h1m4 0h1m7 0h1m4 0h1m5 0h1m1 0h1m2 0h1m4 0h2m2 0h1m1 0h1m3 0h1M1 121h1m12 0h1m14 0h1m14 0h1m2 0h1m8 0h2m12 0h1m13 0h1m6 0h1m5 0h1m14 0h1m8 0h1m3 0h1m2 0h2m1 0h1m3 0h3m6 0h1m2 0h1m3 0h1m14 0h1m4 0h1m8 0h1m1 0h2M7 122h1m4 0h1m4 0h1m15 0h1m20 0h1m14 0h2m17 0h1m5 0h2m18 0h1m8 0h1m1 0h1m6 0h2m2 0h1m7 0h1m22 0h1m4 0h2m10 0h1m1 0h1m2 0h1m6 0h1M6 123h1m6 0h1m21 0h2m3 0h1m8 0h1m3 0h1m3 0h1m10 0h1m5 0h1m5 0h1m8 0h1m6 0h1m3 0h1m2 0h1m6 0h1m15 0h1m1 0h1m2 0h1m5 0h1m1 0h1m10 0h1m2 0h1m1 0h1m6 0h2m3 0h1m5 0h1m3 0h1m2 0h1m1 0h1m11 0h1m1 0h1M15 124h1m1 0h1m10 0h1m5 0h1m11 0h1m5 0h1m6 0h1m10 0h1m15 0h1m11 0h1m9 0h1m12 0h1m2 0h1m12 0h1m5 0h1m1 0h1m7 0h1m2 0h1m7 0h1m4 0h2m3 0h1m2 0h1m1 0h1M1 125h1m3 0h2m7 0h1m6 0h1m5 0h1m9 0h1m2 0h1m6 0h2m18 0h1m18 0h1m21 0h1m6 0h1m2 0h1m8 0h1m2 0h1m10 0h1m1 0h1m7 0h1m11 0h1m2 0h1m3 0h1m15 0h1m5 0h1m3 0h1M8 126h1m9 0h1m12 0h1m2 0h2m3 0h1m11 0h1m2 0h1m1 0h1m2 0h1m10 0h1m4 0h4m2 0h1m5 0h3m14 0h3m13 0h1m10 0h1m9 0h1m14 0h1m16 0h1m1 0h1m9 0h2m4 0h1m5 0h1M17 127h1m3 0h1m4 0h1m18 0h1m14 0h1m10 0h1m3 0h1m3 0h1m2 0h1m4 0h1m7 0h1m2 0h1m7 0h1m2 0h2m8 0h2m6 0h1m10 0h1m1 0h1m10 0h2m12 0h1m19 0h1m4 0h1m1 0h1m2 0h1M8 128h1m19 0h1m13 0h1m3 0h1m7 0h3m11 0h1m13 0h1m2 0h1m6 0h1m25 0h1m7 0h1m2 0h1m1 0h1m2 0h1m2 0h1m6 0h1m4 0h1m2 0h1m26 0h1m1 0h1m6 0h1M22 129h1m3 0h1m6 0h1m27 0h1m26 0h1m9 0h1m3 0h1m4 0h1m4 0h1m6 0h1m2 0h1m4 0h1m14 0h1m2 0h1m28 0h1m4 0h1m16 0h1m1 0h1M8 130h2m3 0h1m12 0h3m23 0h1m6 0h3m3 0h1m24 0h1m1 0h1m25 0h1m1 0h1m5 0h1m9 0h1m10 0h1m2 0h1m1 0h2m13 0h1m2 0h1m1 0h1m13 0h1m3 0h2M3 131h1m10 0h1m6 0h1m3 0h1m1 0h1m1 0h1m15 0h2m17 0h1m5 0h1m1 0h1m8 0h1m2 0h1m3 0h1m15 0h1m2 0h1m4 0h1m31 0h1m8 0h1m4 0h1m3 0h1m21 0h2m1 0h1m4 0h1m6 0h1M13 132h1m4 0h2m10 0h1m3 0h1m15 0h1m12 0h1m5 0h1m7 0h1m2 0h2m2 0h1m7 0h2m1 0h1m13 0h1m1 0h1m12 0h1m1 0h1m7 0h1m12 0h1m2 0h1m1 0h1m13 0h1m7 0h1m6 0h1m8 0h1M0 133h2m10 0h1m1 0h1m16 0h1m16 0h1m5 0h1m2 0h1m7 0h1m6 0h1m1 0h2m1 0h1m6 0h3m3 0h2m1 0h1m21 0h1m1 0h1m10 0h1m6 0h2m3 0h2m16 0h1m15 0h1m3 0h1M0 134h1m8 0h1m2 0h1m7 0h2m2 0h1m6 0h2m14 0h1m24 0h1m1 0h1m10 0h1m9 0h1m11 0h2m13 0h1m2 0h1m2 0h1m10 0h1m3 0h1m3 0h2m5 0h1m4 0h1m4 0h1m8 0h2m2 0h1m4 0h1M1 135h1m8 0h1m4 0h1m7 0h1m1 0h1m6 0h1m2 0h1m13 0h1m7 0h1m6 0h1m7 0h1m9 0h1m5 0h1m13 0h1m4 0h1m1 0h1m12 0h2m3 0h1m1 0h1m9 0h1m8 0h1m1 0h1m6 0h1m6 0h1m7 0h1m7 0h1M1 136h1m2 0h1m23 0h1m2 0h1m6 0h1m4 0h1m4 0h1m56 0h2m1 0h1m3 0h1m32 0h2m6 0h1m10 0h2m11 0h1m5 0h1m3 0h1m3 0h1m1 0h1m2 0h1M0 137h1m2 0h1m13 0h1m5 0h1m10 0h3m16 0h1m1 0h1m2 0h1m7 0h1m9 0h1m5 0h1m7 0h1m10 0h1m1 0h1m1 0h1m19 0h1m3 0h1m4 0h1m2 0h1m6 0h1m2 0h1m3 0h1m3 0h1m7 0h1m1 0h1m19 0h1m4 0h1m2 0h2m2 0h1M1 138h1m5 0h1m9 0h1m20 0h1m6 0h1m2 0h1m19 0h1m1 0h1m4 0h1m3 0h1m4 0h1m9 0h1m6 0h1m9 0h1m13 0h1m20 0h1m1 0h1m7 0h1m7 0h1m18 0h1m1 0h1m7 0h2m4 0h1M17 139h1m6 0h1m13 0h1m3 0h1m4 0h1m4 0h1m3 0h2m11 0h1m4 0h1m15 0h1m3 0h1m4 0h2m8 0h1m3 0h1m18 0h2m17 0h1m9 0h2m5 0h1m3 0h2m17 0h1m3 0h1M6 140h1m15 0h1m1 0h1m1 0h3m1 0h1m28 0h1m13 0h1m8 0h1m2 0h1m3 0h1m11 0h1m27 0h1m8 0h1m5 0h1m15 0h1m22 0h1m1 0h1m3 0h1m4 0h1M8 141h1m7 0h1m1 0h1m17 0h1m9 0h1m2 0h1m3 0h2m6 0h1m1 0h1m7 0h1m32 0h1m19 0h1m2 0h1m3 0h2m4 0h1m11 0h1m1 0h1m11 0h1m4 0h1m12 0h1m1 0h1m5 0h1M0 142h1m1 0h1m5 0h1m11 0h1m5 0h1m5 0h1m5 0h1m1 0h1m5 0h1m5 0h1m9 0h1m8 0h1m3 0h1m15 0h1m9 0h2m4 0h1m4 0h1m20 0h2m1 0h1m16 0h2m10 0h1m9 0h1m1 0h1m3 0h1m3 0h1m13 0h1M1 143h1m1 0h1m8 0h1m4 0h1m2 0h1m3 0h2m2 0h1m4 0h2m23 0h1m3 0h1m5 0h1m9 0h2m10 0h1m1 0h2m1 0h1m4 0h1m1 0h1m5 0h1m10 0h1m12 0h2m4 0h1m3 0h1m4 0h1m3 0h1m6 0h1m2 0h1M1 144h1m7 0h1m3 0h1m11 0h1m2 0h1m10 0h2m13 0h1m9 0h1m4 0h1m7 0h1m20 0h1m1 0h1m10 0h1m1 0h2m3 0h1m42 0h1m2 0h3m3 0h1m3 0h1m6 0h1m7 0h1m4 0h1M2 145h2m3 0h1m7 0h1m9 0h1m4 0h1m2 0h1m23 0h1m10 0h1m1 0h1m10 0h2m10 0h1m37 0h1m2 0h1m2 0h1m2 0h1m4 0h1m2 0h1m1 0h1m1 0h1m20 0h1m2 0h1m21 0h1M2 146h1m2 0h2m17 0h2m33 0h1m4 0h1m6 0h1m1 0h1m8 0h1m3 0h1m27 0h1m1 0h1m13 0h1m17 0h1m7 0h1m15 0h1m8 0h1m11 0h1M0 147h1m10 0h1m6 0h1m3 0h1m1 0h1m3 0h1m2 0h1m15 0h1m9 0h1m34 0h1m9 0h1m18 0h1m6 0h1m1 0h3m1 0h1m7 0h1m9 0h1m19 0h1m8 0h2m4 0h1m1 0h1m6 0h1M4 148h1m25 0h1m37 0h2m1 0h1m37 0h1m5 0h1m2 0h1m1 0h1m3 0h1m1 0h1m6 0h1m2 0h2m4 0h1m14 0h1m3 0h1m8 0h1m23 0h2M6 149h1m8 0h2m9 0h1m16 0h1m9 0h1m11 0h1m1 0h1m4 0h1m1 0h1m8 0h1m4 0h1m9 0h2m28 0h2m18 0h1m4 0h1m9 0h1m4 0h2m3 0h1m1 0h1m4 0h1m14 0h1m3 0h1M1 150h1m7 0h2m2 0h1m3 0h1m4 0h1m12 0h1m3 0h1m13 0h2m1 0h1m2 0h1m7 0h1m6 0h1m20 0h1m21 0h2m3 0h1m4 0h1m10 0h1m3 0h2m6 0h1m1 0h1m12 0h1m3 0h1m2 0h2m4 0h1m17 0h1M7 151h1m14 0h1m9 0h1m8 0h1m2 0h1m1 0h1m22 0h1m9 0h1m9 0h1m27 0h1m2 0h1m10 0h1m2 0h1m1 0h1m17 0h3m2 0h1m2 0h1m12 0h1m3 0h1m12 0h1m1 0h1m1 0h1M12 152h1m15 0h1m4 0h1m3 0h1m8 0h3m4 0h1m32 0h2m9 0h1m8 0h1m3 0h2m7 0h1m3 0h1m18 0h1m1 0h1m12 0h1m7 0h1m31 0h1m1 0h1M13 153h1m1 0h1m4 0h1m19 0h2m17 0h2m11 0h1m2 0h1m1 0h1m9 0h1m12 0h1m1 0h1m1 0h1m4 0h1m10 0h1m2 0h1m1 0h1m24 0h1m2 0h1m4 0h1m10 0h1m14 0h1m8 0h1M7 154h1m8 0h1m6 0h1m6 0h2m3 0h1m9 0h1m9 0h1m9 0h1m9 0h1m4 0h3m25 0h1m10 0h1m9 0h2m16 0h1m4 0h1m27 0h1m1 0h4m8 0h1M9 155h1m2 0h1m6 0h1m6 0h1m2 0h1m2 0h1m1 0h1m10 0h1m5 0h2m4 0h1m1 0h2m6 0h1m7 0h1m5 0h1m5 0h1m6 0h1m12 0h1m1 0h1m2 0h1m2 0h1m7 0h2m9 0h1m18 0h2m2 0h1m5 0h1m2 0h1m5 0h2m9 0h1m11 0h1M5 156h1m9 0h1m8 0h1m17 0h1m2 0h1m10 0h1m2 0h2m12 0h1m18 0h1m1 0h2m1 0h1m6 0h1m1 0h1m8 0h1m5 0h1m7 0h1m2 0h1m1 0h2m8 0h2m5 0h1m1 0h2m2 0h1m13 0h3m1 0h1m6 0h1m1 0h1m7 0h1m1 0h1m4 0h1M6 157h1m4 0h1m5 0h1m10 0h1m1 0h2m1 0h1m2 0h1m3 0h1m4 0h1m2 0h2m9 0h1m1 0h1m12 0h1m2 0h1m6 0h1m4 0h1m1 0h2m14 0h1m16 0h1m16 0h1m21 0h1m2 0h1m14 0h1m5 0h1m8 0h2M1 158h1m20 0h1m19 0h1m2 0h1m4 0h1m3 0h1m5 0h1m1 0h1m6 0h1m2 0h1m7 0h1m17 0h2m13 0h1m15 0h1m9 0h1m6 0h1m2 0h1m3 0h1m2 0h2m3 0h1m4 0h1m1 0h1m21 0h1m8 0h1M9 159h2m27 0h2m6 0h2m7 0h1m16 0h1m23 0h1m13 0h1m1 0h1m2 0h1m1 0h2m5 0h1m5 0h1m3 0h1m5 0h1m2 0h2m34 0h1m1 0h2m3 0h1" stroke="#000058"/><path d="M0 0h1m22 0h1m2 0h1m11 0h1m2 0h1m7 0h1m11 0h1m13 0h1m18 0h1m73 0h1m12 0h1M37 1h1m24 0h1m6 0h1m47 0h1m16 0h1m33 0h2m1 0h1M8 2h1m1 0h1m9 0h1m13 0h1m8 0h1m57 0h1m7 0h1m33 0h1m2 0h1m8 0h1m6 0h1m3 0h1m19 0h1m5 0h1m4 0h1M25 3h1m6 0h1m34 0h1m12 0h1m9 0h1m18 0h1m4 0h1m20 0h1m10 0h1m28 0h1m4 0h2M3 4h2m9 0h1m18 0h1m9 0h1m13 0h1m23 0h1m2 0h1m12 0h2m1 0h1m26 0h1m41 0h1M19 5h1m7 0h1m36 0h1m57 0h2m35 0h1m1 0h1m13 0h1M11 6h1m4 0h1m3 0h1m2 0h1m30 0h1m30 0h1m13 0h1m5 0h1m2 0h1m41 0h1m43 0h1M23 7h1m12 0h1m1 0h1m88 0h1m3 0h1m5 0h2m8 0h1m28 0h1m1 0h1M32 8h1m20 0h1m9 0h1m7 0h1m11 0h1m105 0h1m3 0h1M31 9h1m4 0h1m8 0h1m7 0h1m3 0h1m22 0h1m35 0h1m33 0h1M3 10h1m7 0h2m11 0h1m1 0h1m13 0h1m11 0h1m1 0h1m44 0h1m3 0h1m5 0h1m5 0h1m39 0h1m11 0h1m12 0h1m2 0h1M9 11h1m20 0h1m2 0h1m8 0h1m8 0h1m11 0h1m36 0h1m4 0h1m4 0h1m5 0h1m1 0h1m3 0h1m6 0h1m20 0h1m2 0h1m12 0h1m15 0h1M12 12h1m9 0h1m14 0h1m3 0h1m4 0h1m28 0h1m8 0h1m2 0h1m15 0h1m16 0h1m9 0h1m5 0h1m11 0h1m4 0h1M11 13h1m38 0h1m26 0h1m19 0h2m14 0h1m4 0h1m9 0h1m12 0h1m2 0h2m17 0h1m26 0h1M12 14h1m18 0h1m3 0h1m34 0h1m21 0h1m9 0h1m17 0h1m27 0h1m19 0h1m18 0h1M9 15h1m2 0h1m16 0h1m59 0h2m14 0h1m12 0h1m51 0h1m1 0h1m6 0h1m17 0h1M1 16h2m1 0h1m21 0h1m19 0h1m2 0h1m3 0h1m22 0h1m11 0h1m17 0h1m56 0h1M29 17h1m43 0h1m1 0h1m9 0h1m54 0h1m10 0h1m1 0h1m10 0h1m11 0h1m1 0h1m4 0h1m2 0h1M0 18h1m6 0h1m3 0h1m17 0h1m28 0h1m17 0h1m3 0h1m10 0h1m3 0h1m35 0h1m11 0h1m27 0h1M17 19h1m79 0h1m21 0h1m31 0h1m1 0h1m9 0h1m6 0h1m7 0h1m15 0h1M18 20h1m9 0h1m3 0h1m14 0h1m30 0h1m52 0h1m56 0h1M28 21h2m82 0h1m10 0h1m16 0h1m48 0h1m5 0h1M5 22h2m25 0h1m11 0h1m6 0h1m9 0h1m23 0h1m15 0h1m13 0h1m50 0h1m11 0h1m5 0h1M23 23h2m32 0h1m20 0h1m20 0h1m4 0h1m32 0h1m19 0h1m19 0h1M69 24h1m8 0h1m6 0h1m14 0h1m12 0h1M7 25h1m3 0h1m12 0h1m20 0h1m15 0h1m8 0h1m52 0h1m4 0h2m49 0h1m14 0h1M2 26h1m18 0h1m16 0h1m6 0h1m8 0h1m8 0h1m10 0h1m23 0h1m3 0h1m28 0h1m6 0h1m1 0h1m5 0h1m40 0h1M2 27h1m6 0h2m34 0h1m5 0h1m43 0h2m6 0h1m16 0h1m32 0h1m15 0h1M3 28h1m22 0h1m7 0h1m10 0h1m29 0h1m8 0h1m4 0h1m1 0h1m15 0h1m5 0h1m4 0h1m7 0h1m11 0h1m5 0h1m30 0h1m3 0h1m1 0h2m12 0h1M50 29h1m15 0h1m1 0h1m18 0h1m25 0h1m13 0h1m29 0h1m4 0h1m35 0h1M5 30h1m21 0h1m12 0h1m14 0h1m8 0h1m2 0h1m21 0h1m2 0h1m4 0h1m11 0h1m1 0h1m28 0h2m2 0h2m27 0h1m1 0h1M26 31h1m22 0h1m9 0h1m27 0h1m2 0h1m14 0h1m22 0h1m13 0h1m2 0h1m8 0h1m5 0h1m2 0h1m8 0h1m8 0h1M3 32h1m32 0h1m9 0h1m19 0h1m2 0h1m41 0h2m9 0h1m47 0h1m1 0h1M11 33h1m7 0h1m10 0h1m5 0h1m24 0h1m19 0h1m1 0h2m26 0h1m6 0h2m27 0h1m4 0h1m8 0h1m10 0h1m11 0h1m7 0h1M3 34h1m10 0h1m2 0h1m32 0h1m3 0h1m27 0h1m7 0h1m17 0h1m2 0h1m3 0h1m5 0h1m10 0h1m11 0h2m49 0h1M41 35h2m4 0h1m24 0h1m15 0h1m23 0h1m3 0h1m18 0h1m26 0h1m13 0h1m15 0h1M0 36h1m21 0h1m25 0h1m2 0h1m15 0h1m29 0h1m64 0h1m13 0h1m1 0h1M4 37h1m2 0h1m2 0h1m49 0h1m20 0h1m23 0h1m59 0h1m4 0h1m4 0h1M12 38h1m67 0h1m3 0h1m7 0h1m3 0h1m13 0h1m15 0h1m30 0h1m8 0h1m13 0h1M10 39h1m2 0h1m3 0h1m10 0h1m21 0h1m10 0h1m1 0h1m1 0h1m3 0h1m57 0h1m4 0h1m1 0h1m4 0h1m6 0h1m18 0h1M3 40h1m62 0h1m11 0h1m9 0h1m2 0h1m9 0h1m10 0h1m5 0h1m8 0h1m27 0h1m3 0h1m13 0h1m5 0h1M3 41h1m5 0h1m57 0h1m8 0h1m13 0h1m7 0h1m1 0h1m22 0h2m10 0h1m19 0h1m28 0h1M4 42h1m2 0h1m11 0h1m21 0h1m4 0h1m7 0h1m18 0h1m16 0h1m32 0h1m68 0h1M68 43h1m11 0h1m77 0h1m14 0h1m14 0h1M32 44h1m5 0h1m2 0h1m5 0h1m3 0h1m28 0h1m22 0h1m20 0h1m24 0h1m1 0h2m8 0h1m5 0h1m22 0h1m5 0h1M4 45h1m20 0h1m61 0h1m6 0h1m22 0h1m16 0h1m27 0h1m7 0h1M0 46h1m11 0h1m9 0h2m12 0h1m26 0h1m43 0h1m21 0h1m6 0h1m3 0h1m5 0h1m28 0h1m14 0h1m1 0h1m3 0h1M71 47h1m6 0h1m1 0h1m37 0h1m14 0h1m15 0h1m8 0h1m14 0h2M0 48h1m6 0h1m23 0h1m6 0h1m11 0h1m1 0h1m27 0h1m2 0h1m7 0h1m57 0h1m2 0h1m35 0h1m7 0h1m1 0h1M2 49h1m70 0h1m22 0h1m3 0h1m19 0h1m11 0h1m2 0h1m13 0h1m37 0h1m6 0h1M46 50h1m52 0h1m6 0h1m13 0h1m3 0h1m8 0h1m55 0h1m2 0h1m2 0h1M13 51h1m11 0h1m10 0h1m5 0h1m5 0h1m6 0h1m5 0h1m35 0h1m16 0h2m14 0h1m27 0h1m19 0h1m17 0h1M1 52h1m30 0h1m10 0h1m14 0h1m6 0h1m10 0h1m11 0h1m60 0h1m2 0h1m11 0h2m11 0h1m7 0h1M15 53h1m33 0h1m7 0h1m18 0h1m26 0h1m1 0h2m10 0h1m25 0h1m1 0h2m16 0h1m2 0h1m19 0h1m4 0h1m4 0h1M56 54h1m33 0h1m41 0h1m23 0h1m18 0h1m22 0h1M54 55h1m7 0h1m12 0h1m9 0h1m5 0h1m22 0h1m12 0h2m4 0h1m36 0h1M10 56h1m23 0h1m22 0h1m30 0h1m4 0h1m21 0h1m2 0h1m9 0h1m2 0h1m26 0h1m1 0h1m19 0h1m9 0h1M20 57h1m24 0h1m30 0h1m2 0h1m18 0h1m27 0h1m1 0h1m46 0h1m7 0h1m14 0h1M2 58h1m3 0h2m12 0h1m16 0h2m117 0h1m4 0h1m12 0h1m1 0h1M11 59h1m6 0h1m14 0h1m1 0h1m3 0h1m20 0h1m9 0h1m12 0h2m15 0h1m19 0h1m36 0h1m24 0h1m9 0h1m3 0h1M0 60h1m22 0h1m7 0h1m9 0h1m10 0h1m31 0h1m17 0h1m11 0h1m26 0h1m31 0h1M5 61h2m10 0h1m4 0h1m7 0h1m8 0h1m22 0h1m10 0h1m14 0h1m7 0h1m2 0h1m14 0h1m70 0h1M32 62h1m1 0h1m15 0h1m2 0h1m13 0h1m4 0h1m40 0h1m24 0h1m1 0h1m20 0h1m14 0h1M0 63h1m41 0h1m33 0h2m34 0h1m15 0h1m22 0h1m38 0h1m3 0h1M5 64h1m20 0h1m35 0h1m9 0h1m8 0h1m9 0h1m9 0h1m14 0h1m11 0h1m1 0h1m21 0h1m11 0h2m8 0h1m17 0h2m3 0h1M30 65h1m3 0h1m4 0h1m3 0h1m3 0h1m4 0h1m1 0h1m20 0h1m1 0h1m11 0h1m25 0h1m6 0h1m5 0h1m13 0h1m17 0h1m3 0h1m12 0h1M18 66h1m5 0h2m11 0h1m30 0h1m6 0h1m15 0h1m2 0h1m57 0h1m2 0h1m1 0h1m12 0h1m4 0h1m21 0h1M2 67h1m6 0h1m41 0h1m9 0h1m4 0h1m4 0h1m19 0h1m42 0h1m20 0h1m19 0h1m12 0h1m1 0h1M7 68h1m7 0h1m15 0h1m13 0h1m13 0h1m27 0h1m10 0h1m1 0h1m3 0h1m18 0h1m19 0h1m38 0h1m5 0h1M23 69h2m5 0h1m6 0h2m15 0h1m11 0h1m1 0h1m22 0h1m9 0h1m13 0h1m7 0h1m8 0h1m1 0h1m40 0h1m16 0h1m4 0h1M6 70h1m13 0h1m37 0h2m22 0h1m20 0h1m44 0h1m27 0h1m1 0h1m5 0h1m2 0h1M11 71h1m5 0h1m9 0h1m39 0h1m1 0h1m1 0h1m25 0h2m31 0h1m9 0h1m11 0h1m16 0h1m9 0h1m10 0h1m4 0h1M27 72h1m2 0h1m33 0h1m11 0h1m26 0h1m6 0h1m18 0h1m62 0h1M32 73h1m15 0h1m7 0h1m19 0h1m11 0h1m8 0h1m10 0h1m12 0h1m1 0h1m24 0h1m24 0h1m4 0h1m13 0h1M50 74h1m10 0h1m22 0h1m1 0h1m2 0h1m7 0h1m17 0h1m3 0h1m2 0h1m18 0h1m51 0h1M1 75h2m6 0h1m6 0h1m20 0h1m4 0h1m5 0h1m10 0h1m12 0h1m13 0h1m11 0h1m24 0h2m37 0h1m2 0h1m11 0h1m1 0h1M1 76h1m14 0h1m6 0h1m21 0h1m46 0h1m16 0h1m10 0h1m2 0h2m3 0h1m27 0h1m42 0h1M7 77h2m40 0h1m2 0h1m14 0h1m9 0h1m16 0h1m4 0h2m1 0h1m15 0h1m43 0h1m3 0h1m12 0h1m16 0h1M10 78h1m2 0h1m11 0h1m12 0h1m3 0h1m30 0h1m4 0h1m43 0h1m2 0h1m32 0h1m16 0h1m4 0h1m1 0h1m7 0h1M0 79h1m2 0h1m4 0h1m20 0h1m9 0h1m11 0h1m7 0h1m2 0h1m5 0h1m2 0h1m46 0h1m23 0h1m7 0h1m1 0h1m2 0h1M11 80h1m6 0h1m3 0h2m9 0h1m9 0h1m8 0h1m19 0h1m3 0h1m62 0h1m1 0h1m4 0h1m30 0h1m10 0h1m6 0h1M12 81h1m5 0h1m7 0h1m38 0h1m8 0h1m22 0h1m2 0h1m40 0h1m10 0h1m37 0h1m6 0h1M22 82h1m34 0h1m10 0h1m1 0h1m1 0h1m3 0h1m7 0h1m2 0h1m5 0h1m3 0h1m61 0h2m12 0h1m4 0h1m3 0h1M2 83h1m13 0h1m5 0h1m47 0h1m3 0h1m1 0h1m1 0h1m5 0h1m2 0h2m12 0h1m11 0h1m3 0h1m11 0h1m1 0h1m29 0h2m16 0h1m3 0h1m4 0h1M14 84h1m16 0h1m4 0h1m12 0h1m2 0h1m4 0h1m43 0h1m12 0h1m4 0h1m3 0h1m27 0h1m3 0h1m5 0h1m5 0h1m1 0h1m18 0h1m1 0h1M16 85h1m37 0h1m31 0h1m2 0h1m29 0h1m27 0h1m4 0h1m32 0h1m1 0h1M23 86h1m25 0h1m4 0h1m10 0h1m2 0h1m26 0h1m17 0h1m29 0h1m24 0h1m2 0h1m14 0h1m8 0h1M9 87h1m48 0h1m7 0h1m10 0h1m13 0h1m11 0h1m1 0h1m24 0h1m17 0h1m8 0h1m16 0h1m3 0h1m5 0h1m8 0h1M8 88h1m10 0h1m9 0h1m13 0h1m14 0h1m4 0h1m3 0h1m18 0h1m12 0h1m6 0h1m7 0h1m30 0h1m4 0h1m5 0h1m7 0h1m6 0h1m2 0h1m2 0h1m7 0h1m4 0h1M40 89h1m35 0h1m1 0h1m1 0h1m7 0h1m21 0h1m60 0h1M43 90h1m50 0h1m2 0h1m4 0h1m25 0h1m9 0h2m7 0h1m1 0h1m16 0h1m17 0h1M8 91h1m1 0h1m25 0h1m32 0h1m2 0h4m16 0h1m1 0h1m44 0h1m8 0h1m32 0h1m3 0h1m3 0h1m9 0h1M15 92h1m56 0h1m6 0h1m13 0h1m19 0h1m22 0h1m17 0h1m16 0h1m3 0h1m6 0h1m6 0h2m4 0h1m1 0h1m1 0h1M11 93h1m9 0h1m3 0h1m3 0h1m3 0h1m23 0h1m10 0h1m26 0h1m16 0h1m15 0h1m1 0h1m33 0h1m13 0h1m9 0h1M25 94h1m40 0h1m13 0h1m6 0h1m37 0h1m14 0h1m9 0h1m2 0h1m34 0h2M15 95h1m26 0h1m35 0h1m8 0h2m13 0h3m37 0h1m14 0h2m17 0h1m12 0h1M25 96h2m19 0h1m26 0h2m59 0h1m10 0h1m9 0h1m17 0h1m19 0h1m3 0h1M12 97h1m7 0h1m2 0h2m6 0h1m1 0h1m18 0h2m7 0h1m10 0h1m2 0h1m12 0h1m9 0h1m1 0h2m28 0h1m1 0h1m33 0h1m15 0h1m14 0h1M17 98h1m22 0h1m11 0h1m3 0h1m2 0h1m15 0h1m60 0h1m6 0h1m10 0h1m13 0h1m29 0h1M55 99h1m4 0h1m22 0h1m3 0h1m21 0h1m18 0h1m8 0h1m15 0h1m3 0h1m17 0h1m5 0h1m2 0h1M14 100h1m3 0h1m38 0h1m11 0h1m13 0h1m18 0h1m8 0h1m5 0h1m26 0h1m18 0h1m1 0h1m2 0h1m3 0h1m25 0h1M12 101h1m34 0h2m5 0h1m50 0h2m22 0h1m2 0h1m42 0h1m6 0h1m3 0h1m3 0h1M17 102h1m20 0h1m14 0h1m3 0h1m4 0h1m3 0h1m1 0h1m15 0h1m21 0h1m12 0h1m10 0h1m23 0h1m19 0h1m14 0h1M40 103h1m13 0h1m1 0h1m1 0h1m21 0h1m7 0h1m7 0h1m7 0h1m24 0h1m26 0h1m13 0h1m6 0h2m11 0h1M13 104h1m3 0h1m1 0h1m6 0h1m17 0h2m93 0h1m44 0h1m1 0h2m8 0h1M14 105h1m20 0h1m17 0h1m32 0h1m6 0h1m5 0h1m5 0h1m60 0h1M8 106h1m46 0h1m1 0h1m5 0h1m25 0h2m6 0h1m70 0h2m5 0h1m11 0h1m8 0h1M10 107h1m59 0h1m25 0h1m16 0h1m12 0h1m35 0h1m2 0h1m2 0h1m9 0h1m5 0h1m5 0h1M1 108h1m5 0h1m2 0h2m20 0h1m2 0h1m12 0h1m62 0h1m6 0h1m7 0h1m6 0h2m9 0h1m28 0h1m8 0h1m5 0h1M5 109h1m4 0h1m33 0h1m4 0h1m3 0h1m30 0h1m2 0h1m10 0h1m22 0h1m4 0h1m9 0h1m13 0h1m18 0h1m18 0h1M7 110h1m6 0h1m24 0h1m17 0h1m9 0h1m6 0h1m35 0h2m13 0h1m23 0h1m15 0h1M27 111h1m18 0h1m7 0h1m17 0h1m11 0h1m3 0h2m21 0h2m17 0h1m32 0h1m24 0h1M8 112h1m4 0h1m20 0h1m17 0h1m41 0h1m20 0h1m4 0h2m10 0h1m24 0h1m17 0h1m11 0h2M45 113h1m9 0h1m7 0h1m43 0h1m2 0h1m3 0h1m1 0h1m17 0h1m53 0h1M16 114h1m22 0h1m3 0h2m33 0h1m14 0h1m29 0h1m44 0h1M37 115h1m27 0h1m5 0h1m7 0h1m3 0h1m23 0h1m8 0h1m2 0h1m17 0h1m16 0h1M0 116h1m9 0h1m4 0h1m5 0h1m39 0h1m61 0h1m29 0h1m43 0h1M30 117h1m7 0h1m7 0h1m25 0h1m8 0h1m12 0h2m4 0h1m8 0h1m2 0h1m19 0h1m20 0h1M20 118h1m14 0h1m37 0h1m9 0h1m23 0h1m3 0h1m20 0h1m8 0h1m2 0h2m10 0h1m19 0h1m12 0h1m7 0h1M14 119h1m4 0h1m19 0h1m44 0h1m28 0h1m25 0h1M30 120h1m21 0h1m12 0h1m17 0h1m27 0h1m13 0h1m13 0h1m27 0h1m22 0h1m4 0h1M39 121h1m47 0h1m16 0h1m14 0h1m37 0h1m1 0h1m10 0h1m5 0h1m8 0h1M2 122h1m15 0h1m2 0h1m29 0h1m1 0h1m9 0h1m14 0h1m7 0h1m28 0h1m6 0h1m41 0h1m16 0h1m1 0h1m8 0h1M31 123h1m12 0h1m1 0h1m1 0h1m36 0h1m26 0h1m3 0h1m3 0h1m1 0h1m19 0h1m4 0h1m24 0h1M62 124h1m26 0h1m4 0h1m11 0h1m37 0h1m18 0h1m11 0h1m11 0h1M13 125h1m2 0h1m19 0h1m6 0h1m7 0h1m4 0h1m15 0h1m29 0h1m2 0h1m10 0h1m5 0h2m25 0h1M4 126h1m2 0h1m20 0h1m3 0h1m11 0h1m19 0h1m35 0h1m12 0h1m18 0h1m39 0h1M3 127h1m16 0h1m3 0h1m25 0h2m40 0h1m8 0h1m2 0h1m18 0h1m12 0h1m5 0h1m16 0h1m9 0h1m9 0h1M0 128h1m12 0h1m12 0h1m4 0h1m9 0h1m10 0h1m8 0h1m36 0h1m8 0h1m6 0h1m49 0h1m18 0h1M40 129h1m1 0h1m20 0h1m8 0h1m17 0h1m5 0h1m7 0h1m15 0h1m5 0h1m8 0h1m18 0h1m8 0h1M20 130h1m3 0h1m7 0h1m6 0h1m17 0h1m43 0h1m4 0h1m49 0h1m24 0h1M76 131h2m7 0h1m4 0h1m3 0h1m10 0h1m21 0h1m4 0h1M33 132h1m3 0h1m13 0h1m27 0h1m8 0h1m11 0h1m18 0h2m6 0h1m17 0h1m17 0h1M8 133h1m7 0h1m23 0h1m9 0h1m4 0h1m3 0h1m1 0h1m48 0h1m9 0h3m16 0h1m43 0h1M8 134h1m27 0h1m29 0h1m26 0h1m39 0h1m34 0h1M31 135h1m7 0h1m40 0h1m23 0h1m5 0h1m3 0h1m9 0h1m3 0h1m5 0h1m2 0h2m6 0h1m7 0h1m7 0h1m6 0h1m15 0h1m5 0h1M5 136h1m3 0h1m4 0h1m24 0h1m1 0h1m55 0h1m18 0h1m23 0h1m13 0h1m44 0h1M6 137h1m13 0h1m5 0h1m6 0h1m17 0h1m5 0h1m13 0h1m23 0h1m11 0h1m16 0h1m32 0h1m10 0h1m6 0h1m13 0h1m9 0h1M16 138h1m4 0h1m3 0h1m14 0h1m10 0h1m2 0h1m7 0h1m1 0h1m2 0h1m10 0h1m1 0h1m35 0h1m33 0h1m6 0h1m13 0h1m7 0h1m6 0h1m4 0h1m4 0h1M5 139h1m30 0h1m22 0h1m10 0h1m1 0h1m2 0h1m8 0h1m17 0h1m8 0h1m22 0h1m1 0h1m18 0h1m7 0h1m7 0h1M13 140h1m29 0h1m73 0h3m58 0h1M10 141h1m21 0h1m23 0h1m3 0h1m32 0h1m32 0h1m11 0h1m1 0h1m20 0h1m14 0h1m7 0h1m6 0h1M3 142h1m10 0h1m13 0h1m15 0h1m14 0h1m25 0h1m2 0h1m16 0h1m4 0h1m21 0h1m2 0h1m2 0h1m9 0h1m10 0h1M4 143h1m34 0h1m24 0h1m12 0h1m4 0h1m5 0h1m48 0h1m12 0h1m3 0h1m4 0h1m9 0h1m1 0h1m6 0h1M11 144h1m40 0h1m18 0h1m8 0h1m5 0h1m7 0h1m22 0h1m4 0h1m16 0h1m37 0h1m1 0h1M5 145h1m77 0h1m4 0h1m8 0h1m3 0h1m6 0h1m6 0h1m37 0h1m6 0h1m11 0h1m1 0h1m6 0h1m14 0h1M0 146h1m17 0h1m13 0h1m19 0h2m1 0h1m9 0h1m9 0h1m5 0h1m2 0h1m11 0h1m2 0h1m28 0h2m17 0h1m46 0h1M3 147h1m2 0h1m46 0h1m1 0h1m27 0h1m38 0h1m2 0h1m1 0h1m1 0h1m6 0h2m56 0h1M6 148h1m43 0h1m3 0h1m27 0h1m15 0h1m28 0h1m61 0h1M25 149h1m9 0h1m37 0h1m35 0h1m17 0h1m13 0h1m37 0h1m4 0h1M23 150h1m4 0h1m11 0h1m29 0h1m11 0h1m16 0h1m10 0h1m9 0h1m33 0h2m30 0h1M31 151h1m50 0h1m9 0h1m23 0h1m10 0h1m57 0h1m11 0h1M9 152h1m15 0h1m26 0h1m7 0h1m23 0h1m35 0h1m16 0h1m32 0h2m10 0h1m2 0h1m8 0h1M3 153h1m7 0h1m21 0h1m17 0h1m17 0h1m18 0h1m7 0h1m10 0h1m23 0h1m12 0h1m17 0h1m36 0h1M9 154h1m2 0h1m14 0h2m15 0h1m5 0h1m5 0h1m21 0h1m19 0h1m15 0h1m56 0h1m14 0h1m3 0h1m2 0h1m2 0h1M8 155h1m1 0h1m24 0h1m17 0h1m15 0h1m6 0h1m7 0h1m20 0h1m2 0h1m13 0h1m16 0h2M13 156h1m4 0h1m27 0h1m2 0h1m36 0h1m23 0h1m11 0h1m14 0h1m12 0h1m9 0h1m17 0h1m7 0h1M19 157h1m34 0h1m11 0h1m3 0h1m2 0h1m7 0h1m32 0h1m5 0h1m16 0h1m4 0h2m7 0h1m5 0h1m14 0h1m11 0h1m14 0h1M3 158h1m4 0h1m2 0h1m14 0h1m22 0h1m20 0h2m10 0h2m5 0h1m1 0h1m41 0h1m46 0h1M7 159h1m13 0h1m38 0h1m6 0h1m25 0h1m26 0h1m6 0h1m4 0h1m2 0h1m13 0h2m15 0h1m3 0h1m28 0h1" stroke="#000080"/><path d="M128 0h1m10 0h1m8 0h1M8 1h1m106 0h1m7 0h1m33 0h1m16 0h1m17 0h1m4 0h1M145 2h1m45 0h1M12 3h1m10 0h1m76 0h1m42 0h1m30 0h1M138 5h1m45 0h1M32 6h1m17 0h1m33 0h1M62 7h1m45 0h1m7 0h1m19 0h1M58 8h1m29 0h1m42 0h1M17 9h1m15 0h1m27 0h1m31 0h1m75 0h1m1 0h1M69 10h1m81 0h1M17 11h1m49 0h1m94 0h1M26 12h1m97 0h1m8 0h1m20 0h1M22 13h1m37 0h1m29 0h1m36 0h1m6 0h1m14 0h1m32 0h1m12 0h1M0 14h1m24 0h1m41 0h1m35 0h1m28 0h1m30 0h1M81 15h1m84 0h1M77 16h1m18 0h1m3 0h1m25 0h1m52 0h1m12 0h1m3 0h1M12 17h1m43 0h1m11 0h1m100 0h1M38 18h1m2 0h1m7 0h1m55 0h2m33 0h1M152 19h1M39 20h1m150 0h1M138 21h1m14 0h1M73 22h1m20 0h1m9 0h1m38 0h1m1 0h1m12 0h1m4 0h1M63 23h1m28 0h1m55 0h1m13 0h1m4 0h1m10 0h1M44 24h1m105 0h1m7 0h1M107 25h1m11 0h1m22 0h1m17 0h1m37 0h1M33 26h1m50 0h1m20 0h1m18 0h1m74 0h1M12 27h1m74 0h1m1 0h1m48 0h1M86 28h1M60 29h1m56 0h1m19 0h1m28 0h1M8 30h1m39 0h1m68 0h1m13 0h1M34 31h1m32 0h1m11 0h1m12 0h1m36 0h1m1 0h1m21 0h1m22 0h1M17 32h1m2 0h1m108 0h1M9 33h1m6 0h1m8 0h1m20 0h1m23 0h1m14 0h1m16 0h1m21 0h1m72 0h1M2 34h1m69 0h1m19 0h1m6 0h1m38 0h1m3 0h1m42 0h1M85 35h1m54 0h2m35 0h1m9 0h1M81 36h1m43 0h1m42 0h1m26 0h1M193 37h1M47 38h1m12 0h1m92 0h1M9 39h1m71 0h1m82 0h1M14 40h1m47 0h1m81 0h1M74 41h1m70 0h1M33 42h1m49 0h1m36 0h1m16 0h1m37 0h1M84 43h1m39 0h1m1 0h1m27 0h1M3 44h1m88 0h1m27 0h1M44 45h1m64 0h1M4 46h1m80 0h1M9 47h1m51 0h1m37 0h1m8 0h1M15 48h1m27 0h1m74 0h1m2 0h1m3 0h1m12 0h1M28 49h1m22 0h1m86 0h1m25 0h1M29 50h1M2 51h1m86 0h1m12 0h1m81 0h1M105 52h1m22 0h1m18 0h1m50 0h1M34 53h1m37 0h1m55 0h1m39 0h1M107 54h1m21 0h1m10 0h1m23 0h1m28 0h1M81 55h1m22 0h1m59 0h1m1 0h1M31 56h1m21 0h1m37 0h1m87 0h1m15 0h1M8 57h1m13 0h1m61 0h1m85 0h1m5 0h1M35 58h1m11 0h1m6 0h1m37 0h1m9 0h1m20 0h1m53 0h1M77 59h1m46 0h1m2 0h1m12 0h1m31 0h1m16 0h1M49 60h1m146 0h1M40 61h1m38 0h1m44 0h1M103 63h1M61 64h1m8 0h1m82 0h1M3 65h1m31 0h1m75 0h1m43 0h1M19 66h1m90 0h1m57 0h1m26 0h1M50 67h1m39 0h1M57 68h1m37 0h1m44 0h1m13 0h1M100 69h1m48 0h1m13 0h1M11 70h2m15 0h1m116 0h1m34 0h1M91 71h1m17 0h1M43 72h1m15 0h1m26 0h1m110 0h1M7 73h1m7 0h1m6 0h1m16 0h1m23 0h1m23 0h1m1 0h1m17 0h1m2 0h1m15 0h1m26 0h1m13 0h1M116 74h2m21 0h1m21 0h1m8 0h2m8 0h1M8 75h1m72 0h1m40 0h1m74 0h1M46 76h1m51 0h1m13 0h1m9 0h1m22 0h1M0 77h1m149 0h1m36 0h1M44 78h1m9 0h1m17 0h1m72 0h1m21 0h1M17 79h1m5 0h1m110 0h1M24 80h1m12 0h1m32 0h1m18 0h1m29 0h1m14 0h1m13 0h1M8 81h1m75 0h1m11 0h1m35 0h1M63 82h1m39 0h1m13 0h1m17 0h1M36 83h1m3 0h1m59 0h1m70 0h1M13 84h1m104 0h1m7 0h1m35 0h1m11 0h1m20 0h1M1 85h1m33 0h1m9 0h1M99 86h1m42 0h1M49 87h1m31 0h1m28 0h1m15 0h1M196 88h1M10 89h1m13 0h1m4 0h1m53 0h1m30 0h1m36 0h1M5 90h1m3 0h1m4 0h1m98 0h1m12 0h1m23 0h1m39 0h1M65 91h1m44 0h1m8 0h1m32 0h1m4 0h1m17 0h1M43 92h1m16 0h1m45 0h1m53 0h1m20 0h1M5 93h1m67 0h1m61 0h1m47 0h1m14 0h1M54 94h1m65 0h1M54 95h1m14 0h2m26 0h1m9 0h1m72 0h1m11 0h1M14 96h1m15 0h1m75 0h1m34 0h1M15 97h1m49 0h1m28 0h1m74 0h1M84 98h1m81 0h1M5 99h1m24 0h1m48 0h1m42 0h1M8 100h1m2 0h1m34 0h1m3 0h1m20 0h1M5 101h1m12 0h1m64 0h1m13 0h1M21 102h1m14 0h1m14 0h1m75 0h1m43 0h1M13 103h2m18 0h1m1 0h1m25 0h1m8 0h1m71 0h1m14 0h1m17 0h1M108 104h1m17 0h1m4 0h1m42 0h1M13 105h1m10 0h1m94 0h1m54 0h1m7 0h1M28 106h1m9 0h1m88 0h1m19 0h1M22 107h1m45 0h1m3 0h1m9 0h1m64 0h1M41 108h1m38 0h1m69 0h1m2 0h1M116 109h1m30 0h1m6 0h1m7 0h1M40 110h1m5 0h1m22 0h1m7 0h1m114 0h1M33 111h1m90 0h1m3 0h1m58 0h1m10 0h1M0 112h1m106 0h1m68 0h1M39 113h1m57 0h1m25 0h1m13 0h1M25 114h1m12 0h1m3 0h1m10 0h1m11 0h1m6 0h1m25 0h1m97 0h1M45 115h2m19 0h1m68 0h1M127 116h1m61 0h1M34 117h1m14 0h1m18 0h1m92 0h1m13 0h1m9 0h1M5 118h1m20 0h1m153 0h1M58 119h1m29 0h1m6 0h1m11 0h1m28 0h1m5 0h1m51 0h1M139 121h1M4 122h1m26 0h1m27 0h1m60 0h1m9 0h1m10 0h1M0 124h1m109 0h1M121 126h1m47 0h1m9 0h1M53 127h1m78 0h1m38 0h1M14 128h1m158 0h1M13 129h1m51 0h1m84 0h1m31 0h1m10 0h1M7 130h1m96 0h1M108 131h1m12 0h1m1 0h1M196 132h1M3 133h1m32 0h1m27 0h1m84 0h1m12 0h1m27 0h1m2 0h1M29 134h1m80 0h1m54 0h1M6 135h1m11 0h1m25 0h1m7 0h1m42 0h1m40 0h1M35 136h1m55 0h1m15 0h1m12 0h1m45 0h1m14 0h1M8 137h1m12 0h1m28 0h1m57 0h1m24 0h1m24 0h1m36 0h1M11 138h1m48 0h1m90 0h1M34 139h1m23 0h1m7 0h1m36 0h1m65 0h1M33 140h1m15 0h1m115 0h1m13 0h1M69 141h1m15 0h1m78 0h1M5 142h1m75 0h1m73 0h1M26 143h1m5 0h1m9 0h1m12 0h1m29 0h1m99 0h1M4 144h1m2 0h1M59 145h1m1 0h1m45 0h1m8 0h1m53 0h1m13 0h1M4 146h1m120 0h1m53 0h1m6 0h1M91 147h1M95 148h1m12 0h1m39 0h1m17 0h1M51 149h1m110 0h1M21 150h1m144 0h1M33 151h1m13 0h1m19 0h1m79 0h1m16 0h1m3 0h1M36 152h1m110 0h1M7 153h1m16 0h1m23 0h1m140 0h1M25 154h1m3 0h1m42 0h1m15 0h1m7 0h1m58 0h1m17 0h1M13 155h1m11 0h1M2 156h1m25 0h1m34 0h1M24 157h1m71 0h1M19 158h1m17 0h1m126 0h1m8 0h1M24 159h1m6 0h1m4 0h1m16 0h1m103 0h1m31 0h1" stroke="#0000b4"/><path d="M24 1h1m19 0h1M147 3h1M15 5h1m61 0h1m21 0h1M0 7h1m17 0h1m8 0h1M175 8h1M47 10h1m22 0h1m65 0h1m37 0h1M11 11h1m48 0h1m17 0h1m54 0h1m5 0h1M21 12h1M87 13h1m35 0h1M160 14h1M109 15h1M120 16h1M70 17h1m36 0h1M18 18h1M112 19h1M121 22h1M121 23h1m1 0h1m8 0h1M32 24h1M18 26h1M150 27h1M18 31h1m174 0h1M7 34h1m129 0h1M109 36h1m67 0h1M97 37h1M17 38h1m101 0h1M55 39h1M50 40h1M5 42h1m17 0h1M35 43h1m86 0h1M135 44h1M53 45h1m119 0h1m15 0h1M8 46h1m121 0h1M174 48h1M14 49h1M128 50h1m56 0h1M22 51h1m86 0h1m16 0h1M77 52h1m117 0h1M185 53h1M184 55h1M65 56h1M131 57h1M42 58h1m45 0h1M131 59h1M92 60h1m43 0h1m20 0h1M113 63h1m85 0h1M22 65h1M36 66h1M23 67h1m25 0h1m111 0h1M21 68h1m77 0h1M144 69h1M60 70h1m81 0h1M94 72h1M134 73h1M157 77h1M70 78h2m34 0h1M177 79h1M28 80h1m45 0h1m5 0h1M122 81h1M20 82h1m45 0h1M67 83h1M50 84h1M59 86h1m34 0h1m59 0h1M116 87h1m35 0h1M172 88h1M65 89h1m8 0h1m97 0h1M7 90h1M46 91h1M118 92h1M31 93h1m101 0h1M69 97h1m23 0h1M49 98h1m102 0h1M163 99h1M27 101h1m38 0h1m42 0h1M52 102h1M36 103h1m39 0h1M33 106h1m3 0h1m96 0h1M47 108h1m20 0h1m66 0h1M75 109h1M86 110h1M178 111h1M51 112h1M132 113h1M156 114h1M69 116h1M37 118h2m28 0h1M182 120h1m9 0h1m5 0h1M153 122h1M134 123h1m62 0h1M26 124h1M184 127h1M21 129h1m125 0h1M36 130h1m41 0h1M50 131h1m51 0h1m25 0h1M105 132h1M16 135h1m9 0h1M121 137h1m21 0h1M108 138h1M44 140h1m7 0h1m69 0h1m50 0h1M73 142h1m20 0h1M107 143h1M14 144h1M123 145h1M139 146h1M35 148h1M3 149h1M183 151h1M50 153h1m29 0h1M193 157h1" stroke="#0000ff"/><path d="M178 0h1M192 6h1M167 18h1m6 0h1M182 37h1M22 45h1M8 48h1m90 0h1M143 54h1M86 66h1M28 82h1M186 91h1M87 118h1M145 122h1M92 129h1" stroke="#0060ff"/></g><clipPath id="cp"><rect x="20" y="80" width="600" height="320"/></clipPath></defs>
<rect width="629" height="400" fill="#000"/>
<g clip-path="url(#cp)">
<use href="#t" x="20" y="80"/>
<use href="#t" x="220" y="80"/>
<use href="#t" x="420" y="80"/>
<use href="#t" x="20" y="240"/>
<use href="#t" x="220" y="240"/>
<use href="#t" x="420" y="240"/>
</g>
<rect x="20" y="370" width="600" height="1" fill="#8c8c8c"/>
<rect x="20" y="380" width="600" height="1" fill="#8c8c8c"/>
<rect x="20" y="390" width="600" height="1" fill="#8c8c8c"/>
<rect x="19" y="196" width="1" height="70" fill="#a0a0a0"/>
<g shape-rendering="auto" fill="none" stroke-linecap="round">
</g>
<rect x="81" y="225" width="539" height="3" fill="#000080" opacity=".3"/>
<rect x="20" y="226" width="4" height="1" fill="#0070ff"/>
<rect x="81" y="226" width="3" height="1" fill="#00e9ff"/>
<rect x="81" y="227" width="3" height="1" fill="#003cff" opacity="0.85"/>
<rect x="84" y="226" width="3" height="1" fill="#0094ff"/>
<rect x="84" y="227" width="3" height="1" fill="#0000e5" opacity="0.85"/>
<rect x="87" y="226" width="2" height="1" fill="#00ff7f"/>
<rect x="89" y="226" width="3" height="1" fill="#00ffd9"/>
<rect x="92" y="226" width="1" height="1" fill="#00ff46"/>
<rect x="92" y="225" width="1" height="1" fill="#00aaff" opacity="0.85"/>
<rect x="93" y="226" width="3" height="1" fill="#00ff9a"/>
<rect x="96" y="226" width="2" height="1" fill="#00dfff"/>
<rect x="98" y="226" width="3" height="1" fill="#00ff78"/>
<rect x="101" y="226" width="1" height="1" fill="#00d6ff"/>
<rect x="101" y="225" width="1" height="1" fill="#0029ff" opacity="0.85"/>
<rect x="102" y="226" width="3" height="1" fill="#00ceff"/>
<rect x="105" y="226" width="3" height="1" fill="#00d3ff"/>
<rect x="105" y="225" width="3" height="1" fill="#0025ff" opacity="0.85"/>
<rect x="108" y="226" width="1" height="1" fill="#00e3ff"/>
<rect x="109" y="226" width="1" height="1" fill="#00ffc8"/>
<rect x="110" y="226" width="1" height="1" fill="#00daff"/>
<rect x="110" y="227" width="1" height="1" fill="#002dff" opacity="0.85"/>
<rect x="111" y="226" width="3" height="1" fill="#005dff"/>
<rect x="114" y="226" width="1" height="1" fill="#0092ff"/>
<rect x="114" y="227" width="1" height="1" fill="#0000e3" opacity="0.85"/>
<rect x="115" y="226" width="1" height="1" fill="#00cfff"/>
<rect x="116" y="226" width="1" height="1" fill="#007cff"/>
<rect x="116" y="227" width="1" height="1" fill="#0000cd" opacity="0.85"/>
<rect x="117" y="226" width="1" height="1" fill="#00ffab"/>
<rect x="117" y="225" width="1" height="1" fill="#007aff" opacity="0.85"/>
<rect x="118" y="226" width="1" height="1" fill="#00ff32"/>
<rect x="118" y="225" width="1" height="1" fill="#00b4ff" opacity="0.85"/>
<rect x="119" y="226" width="1" height="1" fill="#02ff00"/>
<rect x="119" y="227" width="1" height="1" fill="#00cdff" opacity="0.85"/>
<rect x="120" y="226" width="1" height="1" fill="#00e3ff"/>
<rect x="121" y="226" width="2" height="1" fill="#00ff53"/>
<rect x="121" y="227" width="2" height="1" fill="#00a4ff" opacity="0.85"/>
<rect x="123" y="226" width="3" height="1" fill="#00ff5c"/>
<rect x="126" y="226" width="1" height="1" fill="#00ff74"/>
<rect x="127" y="226" width="3" height="1" fill="#00f0ff"/>
<rect x="130" y="226" width="3" height="1" fill="#00ff5c"/>
<rect x="133" y="226" width="3" height="1" fill="#004dff"/>
<rect x="136" y="226" width="2" height="1" fill="#0040ff"/>
<rect x="138" y="226" width="1" height="1" fill="#00ebff"/>
<rect x="138" y="225" width="1" height="1" fill="#003eff" opacity="0.85"/>
<rect x="139" y="226" width="2" height="1" fill="#0057ff"/>
<rect x="141" y="226" width="2" height="1" fill="#00ff9e"/>
<rect x="143" y="226" width="1" height="1" fill="#005bff"/>
<rect x="143" y="227" width="1" height="1" fill="#0000ad" opacity="0.85"/>
<rect x="144" y="226" width="1" height="1" fill="#00c7ff"/>
<rect x="145" y="226" width="1" height="1" fill="#0043ff"/>
<rect x="145" y="225" width="1" height="1" fill="#000095" opacity="0.85"/>
<rect x="146" y="226" width="1" height="1" fill="#0045ff"/>
<rect x="147" y="226" width="1" height="1" fill="#00e3ff"/>
<rect x="148" y="226" width="2" height="1" fill="#00e7ff"/>
<rect x="150" y="226" width="3" height="1" fill="#00ff77"/>
<rect x="153" y="227" width="3" height="1" fill="#00d2ff"/>
<rect x="153" y="228" width="3" height="1" fill="#0024ff" opacity="0.85"/>
<rect x="156" y="226" width="2" height="1" fill="#005bff"/>
<rect x="158" y="226" width="2" height="1" fill="#00c0ff"/>
<rect x="158" y="225" width="2" height="1" fill="#0012ff" opacity="0.85"/>
<rect x="160" y="226" width="1" height="1" fill="#00deff"/>
<rect x="160" y="225" width="1" height="1" fill="#0031ff" opacity="0.85"/>
<rect x="161" y="226" width="3" height="1" fill="#00b2ff"/>
<rect x="164" y="226" width="1" height="1" fill="#0059ff"/>
<rect x="165" y="226" width="1" height="1" fill="#0058ff"/>
<rect x="165" y="227" width="1" height="1" fill="#0000aa" opacity="0.85"/>
<rect x="166" y="226" width="1" height="1" fill="#00ff85"/>
<rect x="166" y="227" width="1" height="1" fill="#008cff" opacity="0.85"/>
<rect x="167" y="226" width="2" height="1" fill="#00deff"/>
<rect x="169" y="227" width="1" height="1" fill="#009aff"/>
<rect x="170" y="226" width="2" height="1" fill="#00aaff"/>
<rect x="170" y="227" width="2" height="1" fill="#0000fc" opacity="0.85"/>
<rect x="172" y="226" width="2" height="1" fill="#00e5ff"/>
<rect x="172" y="227" width="2" height="1" fill="#0037ff" opacity="0.85"/>
<rect x="174" y="226" width="2" height="1" fill="#00c3ff"/>
<rect x="176" y="227" width="2" height="1" fill="#0045ff"/>
<rect x="178" y="226" width="1" height="1" fill="#00fffd"/>
<rect x="178" y="227" width="1" height="1" fill="#0053ff" opacity="0.85"/>
<rect x="179" y="226" width="3" height="1" fill="#00fcff"/>
<rect x="182" y="226" width="2" height="1" fill="#0096ff"/>
<rect x="184" y="226" width="2" height="1" fill="#00e0ff"/>
<rect x="186" y="226" width="3" height="1" fill="#00ff81"/>
<rect x="189" y="226" width="2" height="1" fill="#00c0ff"/>
<rect x="189" y="227" width="2" height="1" fill="#0013ff" opacity="0.85"/>
<rect x="191" y="226" width="1" height="1" fill="#001fff"/>
<rect x="192" y="226" width="2" height="1" fill="#003eff"/>
<rect x="194" y="226" width="2" height="1" fill="#00b1ff"/>
<rect x="194" y="225" width="2" height="1" fill="#0004ff" opacity="0.85"/>
<rect x="196" y="226" width="2" height="1" fill="#00e0ff"/>
<rect x="196" y="227" width="2" height="1" fill="#0033ff" opacity="0.85"/>
<rect x="198" y="226" width="2" height="1" fill="#00beff"/>
<rect x="198" y="227" width="2" height="1" fill="#0011ff" opacity="0.85"/>
<rect x="200" y="226" width="1" height="1" fill="#00dfff"/>
<rect x="201" y="226" width="1" height="1" fill="#00bcff"/>
<rect x="202" y="226" width="2" height="1" fill="#00e4ff"/>
<rect x="204" y="226" width="1" height="1" fill="#00a2ff"/>
<rect x="205" y="226" width="3" height="1" fill="#00e6ff"/>
<rect x="205" y="225" width="3" height="1" fill="#0038ff" opacity="0.85"/>
<rect x="208" y="226" width="3" height="1" fill="#00ff8d"/>
<rect x="211" y="227" width="3" height="1" fill="#00e0ff"/>
<rect x="214" y="226" width="2" height="1" fill="#0046ff"/>
<rect x="216" y="226" width="3" height="1" fill="#00ffb0"/>
<rect x="216" y="227" width="3" height="1" fill="#0078ff" opacity="0.85"/>
<rect x="219" y="226" width="2" height="1" fill="#00fdff"/>
<rect x="221" y="226" width="1" height="1" fill="#00c8ff"/>
<rect x="222" y="226" width="1" height="1" fill="#0026ff"/>
<rect x="222" y="227" width="1" height="1" fill="#00008f" opacity="0.85"/>
<rect x="223" y="227" width="2" height="1" fill="#005aff"/>
<rect x="225" y="226" width="1" height="1" fill="#005aff"/>
<rect x="225" y="227" width="1" height="1" fill="#0000ac" opacity="0.85"/>
<rect x="226" y="226" width="2" height="1" fill="#00ffe8"/>
<rect x="226" y="227" width="2" height="1" fill="#005dff" opacity="0.85"/>
<rect x="228" y="226" width="1" height="1" fill="#00aeff"/>
<rect x="229" y="226" width="3" height="1" fill="#00b4ff"/>
<rect x="232" y="226" width="3" height="1" fill="#00a0ff"/>
<rect x="235" y="226" width="3" height="1" fill="#00acff"/>
<rect x="238" y="226" width="1" height="1" fill="#0000ed"/>
<rect x="239" y="226" width="3" height="1" fill="#00b6ff"/>
<rect x="242" y="226" width="1" height="1" fill="#001fff"/>
<rect x="243" y="226" width="2" height="1" fill="#00bcff"/>
<rect x="243" y="225" width="2" height="1" fill="#000fff" opacity="0.85"/>
<rect x="245" y="226" width="3" height="1" fill="#0000ed"/>
<rect x="248" y="227" width="2" height="1" fill="#0007ff"/>
<rect x="250" y="226" width="3" height="1" fill="#0001ff"/>
<rect x="253" y="226" width="1" height="1" fill="#0020ff"/>
<rect x="253" y="227" width="1" height="1" fill="#00008f" opacity="0.85"/>
<rect x="254" y="226" width="2" height="1" fill="#00a8ff"/>
<rect x="254" y="227" width="2" height="1" fill="#0000f9" opacity="0.85"/>
<rect x="256" y="226" width="2" height="1" fill="#00afff"/>
<rect x="256" y="227" width="2" height="1" fill="#0002ff" opacity="0.85"/>
<rect x="258" y="226" width="2" height="1" fill="#000aff"/>
<rect x="260" y="226" width="1" height="1" fill="#00fffc"/>
<rect x="261" y="226" width="3" height="1" fill="#009bff"/>
<rect x="264" y="226" width="3" height="1" fill="#006fff"/>
<rect x="264" y="227" width="3" height="1" fill="#0000c1" opacity="0.85"/>
<rect x="267" y="226" width="1" height="1" fill="#0007ff"/>
<rect x="268" y="226" width="1" height="1" fill="#000bff"/>
<rect x="268" y="227" width="1" height="1" fill="#00008f" opacity="0.85"/>
<rect x="269" y="226" width="2" height="1" fill="#0033ff"/>
<rect x="271" y="226" width="1" height="1" fill="#00ccff"/>
<rect x="271" y="227" width="1" height="1" fill="#001eff" opacity="0.85"/>
<rect x="272" y="226" width="2" height="1" fill="#002aff"/>
<rect x="272" y="227" width="2" height="1" fill="#00008f" opacity="0.85"/>
<rect x="274" y="226" width="2" height="1" fill="#0019ff"/>
<rect x="276" y="226" width="3" height="1" fill="#006cff"/>
<rect x="276" y="227" width="3" height="1" fill="#0000be" opacity="0.85"/>
<rect x="279" y="226" width="1" height="1" fill="#0000f0"/>
<rect x="280" y="226" width="3" height="1" fill="#006fff"/>
<rect x="280" y="227" width="3" height="1" fill="#0000c0" opacity="0.85"/>
<rect x="283" y="226" width="2" height="1" fill="#0013ff"/>
<rect x="283" y="227" width="2" height="1" fill="#00008f" opacity="0.85"/>
<rect x="285" y="226" width="3" height="1" fill="#00a1ff"/>
<rect x="288" y="226" width="3" height="1" fill="#006cff"/>
<rect x="291" y="226" width="3" height="1" fill="#0000fd"/>
<rect x="291" y="227" width="3" height="1" fill="#00008f" opacity="0.85"/>
<rect x="294" y="226" width="2" height="1" fill="#00c6ff"/>
<rect x="294" y="227" width="2" height="1" fill="#0018ff" opacity="0.85"/>
<rect x="296" y="226" width="3" height="1" fill="#00b5ff"/>
<rect x="299" y="226" width="3" height="1" fill="#0010ff"/>
<rect x="302" y="226" width="1" height="1" fill="#00bdff"/>
<rect x="302" y="227" width="1" height="1" fill="#0010ff" opacity="0.85"/>
<rect x="303" y="226" width="2" height="1" fill="#0000f5"/>
<rect x="303" y="227" width="2" height="1" fill="#00008f" opacity="0.85"/>
<rect x="305" y="226" width="2" height="1" fill="#0089ff"/>
<rect x="307" y="226" width="3" height="1" fill="#0078ff"/>
<rect x="310" y="226" width="2" height="1" fill="#0033ff"/>
<rect x="310" y="227" width="2" height="1" fill="#00008f" opacity="0.85"/>
<rect x="312" y="226" width="2" height="1" fill="#0088ff"/>
<rect x="312" y="225" width="2" height="1" fill="#0000da" opacity="0.85"/>
<rect x="314" y="226" width="3" height="1" fill="#00f7ff"/>
<rect x="314" y="227" width="3" height="1" fill="#004aff" opacity="0.85"/>
<rect x="317" y="226" width="2" height="1" fill="#00e2ff"/>
<rect x="319" y="226" width="3" height="1" fill="#002aff"/>
<rect x="322" y="226" width="3" height="1" fill="#0030ff"/>
<rect x="325" y="226" width="3" height="1" fill="#00b3ff"/>
<rect x="325" y="227" width="3" height="1" fill="#0006ff" opacity="0.85"/>
<rect x="328" y="226" width="2" height="1" fill="#0009ff"/>
<rect x="328" y="227" width="2" height="1" fill="#00008f" opacity="0.85"/>
<rect x="330" y="226" width="1" height="1" fill="#0075ff"/>
<rect x="330" y="225" width="1" height="1" fill="#0000c6" opacity="0.85"/>
<rect x="331" y="226" width="1" height="1" fill="#00ccff"/>
<rect x="331" y="225" width="1" height="1" fill="#001eff" opacity="0.85"/>
<rect x="332" y="226" width="3" height="1" fill="#0080ff"/>
<rect x="332" y="225" width="3" height="1" fill="#0000d2" opacity="0.85"/>
<rect x="335" y="226" width="1" height="1" fill="#0066ff"/>
<rect x="336" y="226" width="1" height="1" fill="#00fff7"/>
<rect x="337" y="226" width="2" height="1" fill="#0030ff"/>
<rect x="339" y="226" width="1" height="1" fill="#00a7ff"/>
<rect x="340" y="226" width="3" height="1" fill="#009cff"/>
<rect x="343" y="226" width="3" height="1" fill="#00b7ff"/>
<rect x="346" y="226" width="2" height="1" fill="#008dff"/>
<rect x="348" y="226" width="1" height="1" fill="#0028ff"/>
<rect x="348" y="225" width="1" height="1" fill="#00008f" opacity="0.85"/>
<rect x="349" y="226" width="3" height="1" fill="#00ebff"/>
<rect x="352" y="226" width="3" height="1" fill="#00fcff"/>
<rect x="352" y="225" width="3" height="1" fill="#004eff" opacity="0.85"/>
<rect x="355" y="226" width="2" height="1" fill="#00cdff"/>
<rect x="357" y="226" width="2" height="1" fill="#0048ff"/>
<rect x="359" y="226" width="1" height="1" fill="#00bcff"/>
<rect x="360" y="226" width="1" height="1" fill="#0060ff"/>
<rect x="361" y="226" width="1" height="1" fill="#00afff"/>
<rect x="361" y="227" width="1" height="1" fill="#0002ff" opacity="0.85"/>
<rect x="362" y="226" width="3" height="1" fill="#00e3ff"/>
<rect x="365" y="226" width="2" height="1" fill="#00ceff"/>
<rect x="367" y="226" width="1" height="1" fill="#00ffbc"/>
<rect x="368" y="226" width="2" height="1" fill="#00fbff"/>
<rect x="370" y="226" width="3" height="1" fill="#00ff82"/>
<rect x="370" y="225" width="3" height="1" fill="#008dff" opacity="0.85"/>
<rect x="373" y="227" width="2" height="1" fill="#00bcff"/>
<rect x="375" y="226" width="3" height="1" fill="#00c7ff"/>
<rect x="378" y="227" width="2" height="1" fill="#00d3ff"/>
<rect x="380" y="226" width="1" height="1" fill="#00f6ff"/>
<rect x="381" y="226" width="1" height="1" fill="#00b0ff"/>
<rect x="381" y="227" width="1" height="1" fill="#0003ff" opacity="0.85"/>
<rect x="382" y="226" width="2" height="1" fill="#00ffb1"/>
<rect x="384" y="226" width="3" height="1" fill="#00ff76"/>
<rect x="387" y="226" width="2" height="1" fill="#003cff"/>
<rect x="389" y="226" width="1" height="1" fill="#00b9ff"/>
<rect x="390" y="226" width="3" height="1" fill="#006bff"/>
<rect x="393" y="226" width="3" height="1" fill="#00d1ff"/>
<rect x="396" y="226" width="3" height="1" fill="#00f0ff"/>
<rect x="399" y="226" width="3" height="1" fill="#006fff"/>
<rect x="399" y="227" width="3" height="1" fill="#0000c0" opacity="0.85"/>
<rect x="402" y="226" width="3" height="1" fill="#0078ff"/>
<rect x="405" y="226" width="3" height="1" fill="#0071ff"/>
<rect x="408" y="226" width="2" height="1" fill="#00ffa5"/>
<rect x="408" y="225" width="2" height="1" fill="#007dff" opacity="0.85"/>
<rect x="410" y="226" width="1" height="1" fill="#00ff93"/>
<rect x="410" y="227" width="1" height="1" fill="#0085ff" opacity="0.85"/>
<rect x="411" y="226" width="3" height="1" fill="#00afff"/>
<rect x="414" y="226" width="2" height="1" fill="#0045ff"/>
<rect x="414" y="227" width="2" height="1" fill="#000097" opacity="0.85"/>
<rect x="416" y="226" width="2" height="1" fill="#00d1ff"/>
<rect x="416" y="225" width="2" height="1" fill="#0024ff" opacity="0.85"/>
<rect x="418" y="226" width="3" height="1" fill="#0038ff"/>
<rect x="418" y="227" width="3" height="1" fill="#00008f" opacity="0.85"/>
<rect x="421" y="226" width="1" height="1" fill="#00e3ff"/>
<rect x="422" y="226" width="2" height="1" fill="#0080ff"/>
<rect x="424" y="226" width="1" height="1" fill="#00ff37"/>
<rect x="425" y="226" width="3" height="1" fill="#00c8ff"/>
<rect x="425" y="225" width="3" height="1" fill="#001aff" opacity="0.85"/>
<rect x="428" y="226" width="1" height="1" fill="#0080ff"/>
<rect x="429" y="226" width="1" height="1" fill="#00afff"/>
<rect x="430" y="226" width="1" height="1" fill="#007fff"/>
<rect x="431" y="226" width="1" height="1" fill="#00ffef"/>
<rect x="431" y="225" width="1" height="1" fill="#0059ff" opacity="0.85"/>
<rect x="432" y="226" width="1" height="1" fill="#0084ff"/>
<rect x="432" y="227" width="1" height="1" fill="#0000d6" opacity="0.85"/>
<rect x="433" y="226" width="2" height="1" fill="#00ff63"/>
<rect x="435" y="226" width="2" height="1" fill="#00ff3f"/>
<rect x="437" y="226" width="1" height="1" fill="#0084ff"/>
<rect x="438" y="226" width="1" height="1" fill="#0034ff"/>
<rect x="439" y="226" width="3" height="1" fill="#0036ff"/>
<rect x="442" y="226" width="1" height="1" fill="#00fbff"/>
<rect x="442" y="227" width="1" height="1" fill="#004dff" opacity="0.85"/>
<rect x="443" y="226" width="2" height="1" fill="#00caff"/>
<rect x="445" y="226" width="2" height="1" fill="#00edff"/>
<rect x="445" y="227" width="2" height="1" fill="#003fff" opacity="0.85"/>
<rect x="447" y="226" width="1" height="1" fill="#00caff"/>
<rect x="447" y="227" width="1" height="1" fill="#001dff" opacity="0.85"/>
<rect x="448" y="226" width="3" height="1" fill="#00ffac"/>
<rect x="451" y="226" width="1" height="1" fill="#0048ff"/>
<rect x="451" y="225" width="1" height="1" fill="#000099" opacity="0.85"/>
<rect x="452" y="226" width="2" height="1" fill="#00ff9f"/>
<rect x="452" y="227" width="2" height="1" fill="#0080ff" opacity="0.85"/>
<rect x="454" y="226" width="2" height="1" fill="#0095ff"/>
<rect x="456" y="226" width="2" height="1" fill="#0095ff"/>
<rect x="458" y="226" width="3" height="1" fill="#0096ff"/>
<rect x="461" y="226" width="1" height="1" fill="#00fff8"/>
<rect x="462" y="226" width="2" height="1" fill="#00d8ff"/>
<rect x="462" y="225" width="2" height="1" fill="#002bff" opacity="0.85"/>
<rect x="464" y="226" width="2" height="1" fill="#00b1ff"/>
<rect x="466" y="226" width="1" height="1" fill="#00e0ff"/>
<rect x="466" y="225" width="1" height="1" fill="#0032ff" opacity="0.85"/>
<rect x="467" y="226" width="3" height="1" fill="#00dcff"/>
<rect x="467" y="227" width="3" height="1" fill="#002eff" opacity="0.85"/>
<rect x="470" y="226" width="1" height="1" fill="#00dbff"/>
<rect x="470" y="225" width="1" height="1" fill="#002dff" opacity="0.85"/>
<rect x="471" y="226" width="2" height="1" fill="#00c1ff"/>
<rect x="471" y="227" width="2" height="1" fill="#0013ff" opacity="0.85"/>
<rect x="473" y="226" width="3" height="1" fill="#00acff"/>
<rect x="473" y="225" width="3" height="1" fill="#0000fd" opacity="0.85"/>
<rect x="476" y="226" width="3" height="1" fill="#00d0ff"/>
<rect x="479" y="226" width="1" height="1" fill="#0045ff"/>
<rect x="479" y="227" width="1" height="1" fill="#000097" opacity="0.85"/>
<rect x="480" y="226" width="2" height="1" fill="#004cff"/>
<rect x="480" y="227" width="2" height="1" fill="#00009e" opacity="0.85"/>
<rect x="482" y="227" width="2" height="1" fill="#008fff"/>
<rect x="484" y="226" width="1" height="1" fill="#00ffab"/>
<rect x="485" y="226" width="1" height="1" fill="#008fff"/>
<rect x="486" y="226" width="1" height="1" fill="#00b4ff"/>
<rect x="486" y="227" width="1" height="1" fill="#0006ff" opacity="0.85"/>
<rect x="487" y="226" width="2" height="1" fill="#0092ff"/>
<rect x="489" y="226" width="1" height="1" fill="#009bff"/>
<rect x="489" y="227" width="1" height="1" fill="#0000ed" opacity="0.85"/>
<rect x="490" y="226" width="2" height="1" fill="#009eff"/>
<rect x="492" y="226" width="2" height="1" fill="#00b7ff"/>
<rect x="494" y="226" width="2" height="1" fill="#00c6ff"/>
<rect x="494" y="227" width="2" height="1" fill="#0018ff" opacity="0.85"/>
<rect x="496" y="226" width="1" height="1" fill="#00baff"/>
<rect x="496" y="225" width="1" height="1" fill="#000dff" opacity="0.85"/>
<rect x="497" y="226" width="2" height="1" fill="#00e2ff"/>
<rect x="499" y="226" width="3" height="1" fill="#00ffe2"/>
<rect x="499" y="227" width="3" height="1" fill="#0060ff" opacity="0.85"/>
<rect x="502" y="226" width="3" height="1" fill="#00c7ff"/>
<rect x="505" y="226" width="2" height="1" fill="#00ffe5"/>
<rect x="505" y="227" width="2" height="1" fill="#005eff" opacity="0.85"/>
<rect x="507" y="226" width="1" height="1" fill="#00c8ff"/>
<rect x="507" y="227" width="1" height="1" fill="#001bff" opacity="0.85"/>
<rect x="508" y="226" width="3" height="1" fill="#00ffce"/>
<rect x="508" y="225" width="3" height="1" fill="#0069ff" opacity="0.85"/>
<rect x="511" y="226" width="2" height="1" fill="#00b2ff"/>
<rect x="513" y="226" width="1" height="1" fill="#00ff86"/>
<rect x="513" y="225" width="1" height="1" fill="#008cff" opacity="0.85"/>
<rect x="514" y="226" width="2" height="1" fill="#0055ff"/>
<rect x="516" y="226" width="1" height="1" fill="#00c9ff"/>
<rect x="517" y="226" width="2" height="1" fill="#0041ff"/>
<rect x="517" y="227" width="2" height="1" fill="#000093" opacity="0.85"/>
<rect x="519" y="226" width="3" height="1" fill="#0049ff"/>
<rect x="519" y="227" width="3" height="1" fill="#00009b" opacity="0.85"/>
<rect x="522" y="226" width="3" height="1" fill="#00d4ff"/>
<rect x="525" y="226" width="2" height="1" fill="#00ff46"/>
<rect x="525" y="227" width="2" height="1" fill="#00abff" opacity="0.85"/>
<rect x="527" y="226" width="2" height="1" fill="#00ffe5"/>
<rect x="527" y="225" width="2" height="1" fill="#005eff" opacity="0.85"/>
<rect x="529" y="226" width="1" height="1" fill="#00d7ff"/>
<rect x="530" y="226" width="3" height="1" fill="#00ff03"/>
<rect x="533" y="226" width="3" height="1" fill="#00ffa1"/>
<rect x="536" y="226" width="2" height="1" fill="#00d3ff"/>
<rect x="536" y="225" width="2" height="1" fill="#0025ff" opacity="0.85"/>
<rect x="538" y="226" width="1" height="1" fill="#00ffea"/>
<rect x="538" y="225" width="1" height="1" fill="#005cff" opacity="0.85"/>
<rect x="539" y="226" width="1" height="1" fill="#00ffb2"/>
<rect x="540" y="226" width="1" height="1" fill="#009dff"/>
<rect x="540" y="227" width="1" height="1" fill="#0000ee" opacity="0.85"/>
<rect x="541" y="226" width="3" height="1" fill="#00ff44"/>
<rect x="541" y="227" width="3" height="1" fill="#00abff" opacity="0.85"/>
<rect x="544" y="226" width="3" height="1" fill="#0072ff"/>
<rect x="547" y="226" width="3" height="1" fill="#00ff0a"/>
<rect x="550" y="226" width="1" height="1" fill="#00feff"/>
<rect x="550" y="227" width="1" height="1" fill="#0051ff" opacity="0.85"/>
<rect x="551" y="226" width="3" height="1" fill="#0065ff"/>
<rect x="554" y="226" width="1" height="1" fill="#00fdff"/>
<rect x="555" y="226" width="2" height="1" fill="#00ff46"/>
<rect x="555" y="227" width="2" height="1" fill="#00aaff" opacity="0.85"/>
<rect x="557" y="226" width="1" height="1" fill="#00fbff"/>
<rect x="557" y="227" width="1" height="1" fill="#004dff" opacity="0.85"/>
<rect x="558" y="226" width="3" height="1" fill="#00ff07"/>
<rect x="561" y="226" width="1" height="1" fill="#00e0ff"/>
<rect x="562" y="226" width="2" height="1" fill="#00d7ff"/>
<rect x="564" y="226" width="1" height="1" fill="#0066ff"/>
<rect x="565" y="226" width="1" height="1" fill="#00fff2"/>
<rect x="566" y="226" width="2" height="1" fill="#00a3ff"/>
<rect x="566" y="227" width="2" height="1" fill="#0000f5" opacity="0.85"/>
<rect x="568" y="226" width="1" height="1" fill="#00fff2"/>
<rect x="569" y="226" width="2" height="1" fill="#00ff22"/>
<rect x="571" y="226" width="3" height="1" fill="#00ffcc"/>
<rect x="571" y="227" width="3" height="1" fill="#006aff" opacity="0.85"/>
<rect x="574" y="226" width="2" height="1" fill="#00cdff"/>
<rect x="576" y="226" width="1" height="1" fill="#00ff4a"/>
<rect x="577" y="226" width="3" height="1" fill="#008dff"/>
<rect x="580" y="226" width="2" height="1" fill="#00ff9d"/>
<rect x="580" y="225" width="2" height="1" fill="#0081ff" opacity="0.85"/>
<rect x="582" y="226" width="2" height="1" fill="#00ffdd"/>
<rect x="584" y="226" width="2" height="1" fill="#00a3ff"/>
<rect x="584" y="227" width="2" height="1" fill="#0000f5" opacity="0.85"/>
<rect x="586" y="226" width="2" height="1" fill="#00ffff"/>
<rect x="588" y="226" width="2" height="1" fill="#00cdff"/>
<rect x="590" y="226" width="2" height="1" fill="#0080ff"/>
<rect x="592" y="226" width="3" height="1" fill="#00e6ff"/>
<rect x="592" y="225" width="3" height="1" fill="#0039ff" opacity="0.85"/>
<rect x="595" y="226" width="1" height="1" fill="#00daff"/>
<rect x="595" y="227" width="1" height="1" fill="#002cff" opacity="0.85"/>
<rect x="596" y="226" width="3" height="1" fill="#00eaff"/>
<rect x="599" y="226" width="2" height="1" fill="#00f8ff"/>
<rect x="599" y="227" width="2" height="1" fill="#004bff" opacity="0.85"/>
<rect x="601" y="226" width="2" height="1" fill="#00dfff"/>
<rect x="601" y="227" width="2" height="1" fill="#0032ff" opacity="0.85"/>
<rect x="603" y="226" width="3" height="1" fill="#00d6ff"/>
<rect x="606" y="226" width="2" height="1" fill="#00a3ff"/>
<rect x="608" y="226" width="3" height="1" fill="#0099ff"/>
<rect x="611" y="226" width="2" height="1" fill="#00faff"/>
<rect x="613" y="226" width="1" height="1" fill="#00ffc7"/>
<rect x="613" y="227" width="1" height="1" fill="#006cff" opacity="0.85"/>
<rect x="614" y="226" width="2" height="1" fill="#005cff"/>
<rect x="616" y="226" width="2" height="1" fill="#0085ff"/>
<rect x="616" y="227" width="2" height="1" fill="#0000d7" opacity="0.85"/>
<rect x="618" y="226" width="2" height="1" fill="#0079ff"/>
<g shape-rendering="auto" fill="none" stroke-linecap="round">
<rect x="82" y="220" width="1" height="1" fill="#0000dd"/>
<rect x="83" y="220" width="1" height="1" fill="#0000f5"/>
<rect x="84" y="220" width="1" height="1" fill="#001cff"/>
<rect x="85" y="220" width="1" height="1" fill="#0056ff"/>
<rect x="86" y="220" width="1" height="1" fill="#005eff"/>
<rect x="87" y="220" width="1" height="1" fill="#002cff"/>
<rect x="88" y="220" width="1" height="1" fill="#002bff"/>
<rect x="89" y="220" width="1" height="1" fill="#001fff"/>
<rect x="90" y="220" width="1" height="1" fill="#002fff"/>
<rect x="91" y="220" width="1" height="1" fill="#0000fe"/>
<rect x="92" y="220" width="1" height="1" fill="#0000d8"/>
<rect x="93" y="220" width="1" height="1" fill="#0000e0"/>
<rect x="94" y="220" width="1" height="1" fill="#0037ff"/>
<rect x="95" y="220" width="1" height="1" fill="#0033ff"/>
<rect x="96" y="220" width="1" height="1" fill="#001bff"/>
<rect x="97" y="220" width="1" height="1" fill="#0048ff"/>
<rect x="98" y="220" width="1" height="1" fill="#006bff"/>
<rect x="99" y="220" width="1" height="1" fill="#0064ff"/>
<rect x="100" y="220" width="1" height="1" fill="#001cff"/>
<rect x="101" y="220" width="1" height="1" fill="#0051ff"/>
<rect x="102" y="220" width="1" height="1" fill="#0020ff"/>
<rect x="103" y="220" width="1" height="1" fill="#0030ff"/>
<rect x="104" y="220" width="1" height="1" fill="#0000c6"/>
<rect x="105" y="220" width="1" height="1" fill="#0029ff"/>
<rect x="106" y="220" width="1" height="1" fill="#0000fb"/>
<rect x="107" y="220" width="1" height="1" fill="#00008a"/>
<rect x="108" y="221" width="1" height="1" fill="#0000fa"/>
<rect x="109" y="221" width="1" height="1" fill="#0000bd"/>
<rect x="111" y="221" width="1" height="1" fill="#0000a1"/>
<rect x="112" y="221" width="1" height="1" fill="#0000dd"/>
<rect x="113" y="221" width="1" height="1" fill="#0000e3"/>
<rect x="114" y="222" width="1" height="1" fill="#0000c4"/>
<rect x="115" y="222" width="1" height="1" fill="#0002ff"/>
<rect x="116" y="222" width="1" height="1" fill="#0000e8"/>
<rect x="117" y="222" width="1" height="1" fill="#0000e9"/>
<rect x="118" y="222" width="1" height="1" fill="#0000ec"/>
<rect x="119" y="223" width="1" height="1" fill="#006cff"/>
<rect x="120" y="223" width="1" height="1" fill="#00b5ff"/>
<rect x="121" y="223" width="1" height="1" fill="#00ff8b"/>
<rect x="122" y="223" width="1" height="1" fill="#00f7ff"/>
<rect x="122" y="222" width="1" height="1" fill="#00ff94"/>
<rect x="123" y="222" width="1" height="1" fill="#00cdff"/>
<rect x="124" y="222" width="1" height="1" fill="#00ff9a"/>
<rect x="125" y="223" width="1" height="1" fill="#00ffe1"/>
<rect x="126" y="223" width="1" height="1" fill="#00ffb6"/>
<rect x="126" y="224" width="1" height="1" fill="#0000e5"/>
<rect x="127" y="223" width="1" height="1" fill="#00ff97"/>
<rect x="127" y="224" width="1" height="1" fill="#000eff"/>
<rect x="128" y="224" width="1" height="1" fill="#00ff0c"/>
<rect x="128" y="223" width="1" height="1" fill="#0053ff"/>
<rect x="129" y="224" width="1" height="1" fill="#e9ff00"/>
<rect x="129" y="223" width="1" height="1" fill="#00b5ff"/>
<rect x="130" y="224" width="1" height="1" fill="#fff100"/>
<rect x="130" y="223" width="1" height="1" fill="#00d0ff"/>
<rect x="130" y="225" width="1" height="1" fill="#00acff"/>
<rect x="131" y="224" width="1" height="1" fill="#deff00"/>
<rect x="131" y="225" width="1" height="1" fill="#00caff"/>
<rect x="132" y="224" width="1" height="1" fill="#c8ff00"/>
<rect x="132" y="225" width="1" height="1" fill="#00d0ff"/>
<rect x="133" y="225" width="1" height="1" fill="#97ff00"/>
<rect x="133" y="224" width="1" height="1" fill="#00ccff"/>
<rect x="134" y="225" width="1" height="1" fill="#ff9600"/>
<rect x="134" y="224" width="1" height="1" fill="#00ff95"/>
<rect x="135" y="225" width="1" height="1" fill="#ffdf00"/>
<rect x="135" y="224" width="1" height="1" fill="#00fff7"/>
<rect x="136" y="225" width="1" height="1" fill="#ff3000"/>
<rect x="136" y="224" width="1" height="1" fill="#00ff0b"/>
<rect x="137" y="225" width="1" height="1" fill="#ff7f00"/>
<rect x="137" y="226" width="1" height="1" fill="#00ff76"/>
<rect x="138" y="225" width="1" height="1" fill="#ff1b00"/>
<rect x="138" y="226" width="1" height="1" fill="#10ff00"/>
<rect x="139" y="225" width="1" height="1" fill="#ff0000"/>
<rect x="139" y="226" width="1" height="1" fill="#33ff00"/>
<rect x="140" y="225" width="1" height="1" fill="#ff2a00"/>
<rect x="140" y="226" width="1" height="1" fill="#00ff04"/>
<rect x="141" y="225" width="1" height="1" fill="#ff0300"/>
<rect x="141" y="226" width="1" height="1" fill="#2dff00"/>
<rect x="142" y="226" width="1" height="1" fill="#ff2b00"/>
<rect x="142" y="225" width="1" height="1" fill="#00ff04"/>
<rect x="143" y="226" width="1" height="1" fill="#ff4800"/>
<rect x="143" y="225" width="1" height="1" fill="#00ff2c"/>
<rect x="144" y="226" width="1" height="1" fill="#ff8c00"/>
<rect x="144" y="225" width="1" height="1" fill="#00ffa9"/>
<rect x="145" y="226" width="1" height="1" fill="#ff7000"/>
<rect x="145" y="225" width="1" height="1" fill="#00ffa9"/>
<rect x="146" y="226" width="1" height="1" fill="#ffd100"/>
<rect x="146" y="225" width="1" height="1" fill="#00deff"/>
<rect x="146" y="227" width="1" height="1" fill="#00ffeb"/>
<rect x="147" y="226" width="1" height="1" fill="#ff9900"/>
<rect x="147" y="227" width="1" height="1" fill="#00efff"/>
<rect x="148" y="226" width="1" height="1" fill="#ffeb00"/>
<rect x="148" y="227" width="1" height="1" fill="#00b0ff"/>
<rect x="149" y="227" width="1" height="1" fill="#9aff00"/>
<rect x="149" y="226" width="1" height="1" fill="#0079ff"/>
<rect x="150" y="227" width="1" height="1" fill="#a7ff00"/>
<rect x="150" y="226" width="1" height="1" fill="#006dff"/>
<rect x="151" y="227" width="1" height="1" fill="#d0ff00"/>
<rect x="151" y="228" width="1" height="1" fill="#007cff"/>
<rect x="152" y="227" width="1" height="1" fill="#ffe900"/>
<rect x="152" y="228" width="1" height="1" fill="#00a1ff"/>
<rect x="153" y="227" width="1" height="1" fill="#ffc200"/>
<rect x="153" y="228" width="1" height="1" fill="#00c3ff"/>
<rect x="154" y="228" width="1" height="1" fill="#ff7700"/>
<rect x="154" y="227" width="1" height="1" fill="#00fbff"/>
<rect x="155" y="228" width="1" height="1" fill="#ff4d00"/>
<rect x="155" y="227" width="1" height="1" fill="#00ffef"/>
<rect x="156" y="228" width="1" height="1" fill="#ffad00"/>
<rect x="156" y="227" width="1" height="1" fill="#00adff"/>
<rect x="157" y="228" width="1" height="1" fill="#44ff00"/>
<rect x="157" y="229" width="1" height="1" fill="#0036ff"/>
<rect x="158" y="228" width="1" height="1" fill="#07ff00"/>
<rect x="158" y="229" width="1" height="1" fill="#000cff"/>
<rect x="159" y="228" width="1" height="1" fill="#28ff00"/>
<rect x="160" y="229" width="1" height="1" fill="#00ffe8"/>
<rect x="161" y="229" width="1" height="1" fill="#00ff9b"/>
<rect x="162" y="229" width="1" height="1" fill="#00fff2"/>
<rect x="163" y="229" width="1" height="1" fill="#0096ff"/>
<rect x="164" y="229" width="1" height="1" fill="#00e0ff"/>
<rect x="165" y="229" width="1" height="1" fill="#0037ff"/>
<rect x="166" y="229" width="1" height="1" fill="#0058ff"/>
<rect x="167" y="230" width="1" height="1" fill="#0078ff"/>
<rect x="168" y="230" width="1" height="1" fill="#0055ff"/>
<rect x="169" y="230" width="1" height="1" fill="#006aff"/>
<rect x="170" y="230" width="1" height="1" fill="#0000d6"/>
<rect x="171" y="230" width="1" height="1" fill="#0000bd"/>
<rect x="172" y="231" width="1" height="1" fill="#0000f7"/>
<rect x="173" y="231" width="1" height="1" fill="#0012ff"/>
<rect x="174" y="231" width="1" height="1" fill="#000092"/>
<rect x="176" y="232" width="1" height="1" fill="#0000a3"/>
<rect x="180" y="235" width="1" height="1" fill="#0000d5"/>
<rect x="181" y="235" width="1" height="1" fill="#0028ff"/>
<rect x="182" y="236" width="1" height="1" fill="#0003ff"/>
<rect x="183" y="236" width="1" height="1" fill="#00baff"/>
<rect x="184" y="237" width="1" height="1" fill="#00bdff"/>
<rect x="185" y="237" width="1" height="1" fill="#00d9ff"/>
<rect x="185" y="238" width="1" height="1" fill="#00f4ff"/>
<rect x="186" y="238" width="1" height="1" fill="#00ff8d"/>
<rect x="187" y="239" width="1" height="1" fill="#00ffbd"/>
<rect x="188" y="239" width="1" height="1" fill="#00ffb8"/>
<rect x="188" y="240" width="1" height="1" fill="#00ffb8"/>
<rect x="189" y="240" width="1" height="1" fill="#00ff64"/>
<rect x="190" y="240" width="1" height="1" fill="#00ff6e"/>
<rect x="191" y="241" width="1" height="1" fill="#36ff00"/>
<rect x="191" y="240" width="1" height="1" fill="#0016ff"/>
<rect x="192" y="241" width="1" height="1" fill="#c7ff00"/>
<rect x="192" y="240" width="1" height="1" fill="#004cff"/>
<rect x="192" y="242" width="1" height="1" fill="#0061ff"/>
<rect x="193" y="241" width="1" height="1" fill="#ffe800"/>
<rect x="193" y="242" width="1" height="1" fill="#007bff"/>
<rect x="194" y="242" width="1" height="1" fill="#fff000"/>
<rect x="194" y="243" width="1" height="1" fill="#0057ff"/>
<rect x="195" y="243" width="1" height="1" fill="#00ff71"/>
<rect x="196" y="244" width="1" height="1" fill="#00afff"/>
<rect x="197" y="244" width="1" height="1" fill="#00a8ff"/>
<rect x="197" y="245" width="1" height="1" fill="#00b6ff"/>
<rect x="198" y="245" width="1" height="1" fill="#00b1ff"/>
<rect x="199" y="246" width="1" height="1" fill="#0072ff"/>
<rect x="200" y="246" width="1" height="1" fill="#009bff"/>
<rect x="200" y="247" width="1" height="1" fill="#00c2ff"/>
<rect x="201" y="247" width="1" height="1" fill="#00a0ff"/>
<rect x="202" y="247" width="1" height="1" fill="#00ffcb"/>
<rect x="202" y="248" width="1" height="1" fill="#00fdff"/>
<rect x="203" y="248" width="1" height="1" fill="#00ff01"/>
<rect x="204" y="249" width="1" height="1" fill="#adff00"/>
<rect x="204" y="248" width="1" height="1" fill="#003bff"/>
<rect x="205" y="249" width="1" height="1" fill="#ff9600"/>
<rect x="205" y="250" width="1" height="1" fill="#00b0ff"/>
<rect x="206" y="250" width="1" height="1" fill="#ebff00"/>
<rect x="207" y="250" width="1" height="1" fill="#00ff63"/>
<rect x="207" y="251" width="1" height="1" fill="#00ffb6"/>
<rect x="208" y="251" width="1" height="1" fill="#00ff9e"/>
<rect x="209" y="251" width="1" height="1" fill="#92ff00"/>
<rect x="209" y="252" width="1" height="1" fill="#62ff00"/>
<rect x="210" y="252" width="1" height="1" fill="#fbff00"/>
<rect x="210" y="251" width="1" height="1" fill="#006cff"/>
<rect x="210" y="253" width="1" height="1" fill="#00d6ff"/>
<rect x="211" y="252" width="1" height="1" fill="#ff6700"/>
<rect x="211" y="253" width="1" height="1" fill="#00ffe5"/>
<rect x="212" y="253" width="1" height="1" fill="#ff9f00"/>
<rect x="212" y="252" width="1" height="1" fill="#00b8ff"/>
<rect x="212" y="254" width="1" height="1" fill="#0081ff"/>
<rect x="213" y="254" width="1" height="1" fill="#87ff00"/>
<rect x="213" y="253" width="1" height="1" fill="#003dff"/>
<rect x="214" y="254" width="1" height="1" fill="#00ffb8"/>
<rect x="214" y="255" width="1" height="1" fill="#00f4ff"/>
<rect x="215" y="255" width="1" height="1" fill="#00aeff"/>
<rect x="216" y="256" width="1" height="1" fill="#0066ff"/>
<rect x="217" y="256" width="1" height="1" fill="#00daff"/>
<rect x="218" y="257" width="1" height="1" fill="#00ff3d"/>
<rect x="219" y="257" width="1" height="1" fill="#19ff00"/>
<rect x="220" y="258" width="1" height="1" fill="#00ff2d"/>
<rect x="221" y="258" width="1" height="1" fill="#00ffc6"/>
<rect x="222" y="258" width="1" height="1" fill="#00ffb8"/>
<rect x="222" y="259" width="1" height="1" fill="#00ff50"/>
<rect x="223" y="259" width="1" height="1" fill="#00ffdd"/>
<rect x="224" y="259" width="1" height="1" fill="#00ddff"/>
<rect x="224" y="260" width="1" height="1" fill="#00fbff"/>
<rect x="225" y="260" width="1" height="1" fill="#00c3ff"/>
<rect x="226" y="260" width="1" height="1" fill="#00b2ff"/>
<rect x="227" y="261" width="1" height="1" fill="#00d1ff"/>
<rect x="228" y="261" width="1" height="1" fill="#00f3ff"/>
<rect x="229" y="261" width="1" height="1" fill="#00ffe7"/>
<rect x="229" y="262" width="1" height="1" fill="#00fff5"/>
<rect x="230" y="262" width="1" height="1" fill="#00c5ff"/>
<rect x="231" y="262" width="1" height="1" fill="#0095ff"/>
<rect x="232" y="263" width="1" height="1" fill="#0078ff"/>
<rect x="233" y="263" width="1" height="1" fill="#0067ff"/>
<rect x="234" y="263" width="1" height="1" fill="#0047ff"/>
<rect x="235" y="263" width="1" height="1" fill="#0000f2"/>
<rect x="236" y="264" width="1" height="1" fill="#0000e1"/>
<rect x="352" y="220" width="1" height="1" fill="#0000ee"/>
<rect x="353" y="220" width="1" height="1" fill="#002cff"/>
<rect x="354" y="220" width="1" height="1" fill="#0013ff"/>
<rect x="355" y="220" width="1" height="1" fill="#001aff"/>
<rect x="356" y="220" width="1" height="1" fill="#0018ff"/>
<rect x="357" y="220" width="1" height="1" fill="#0006ff"/>
<rect x="358" y="220" width="1" height="1" fill="#0000cb"/>
<rect x="359" y="220" width="1" height="1" fill="#0000ab"/>
<rect x="360" y="221" width="1" height="1" fill="#0000ca"/>
<rect x="361" y="221" width="1" height="1" fill="#0000e6"/>
<rect x="362" y="221" width="1" height="1" fill="#0000c7"/>
<rect x="363" y="221" width="1" height="1" fill="#0000e4"/>
<rect x="364" y="221" width="1" height="1" fill="#0014ff"/>
<rect x="365" y="221" width="1" height="1" fill="#0004ff"/>
<rect x="366" y="221" width="1" height="1" fill="#0000f7"/>
<rect x="367" y="222" width="1" height="1" fill="#0039ff"/>
<rect x="368" y="222" width="1" height="1" fill="#0000ff"/>
<rect x="369" y="222" width="1" height="1" fill="#0000f3"/>
<rect x="370" y="222" width="1" height="1" fill="#00008c"/>
<rect x="371" y="222" width="1" height="1" fill="#0000fa"/>
<rect x="373" y="223" width="1" height="1" fill="#0000b2"/>
<rect x="374" y="223" width="1" height="1" fill="#00008b"/>
<rect x="375" y="223" width="1" height="1" fill="#0000d1"/>
<rect x="376" y="223" width="1" height="1" fill="#0000e5"/>
<rect x="377" y="223" width="1" height="1" fill="#005dff"/>
<rect x="378" y="223" width="1" height="1" fill="#00c6ff"/>
<rect x="378" y="224" width="1" height="1" fill="#0000e0"/>
<rect x="379" y="224" width="1" height="1" fill="#00f4ff"/>
<rect x="379" y="223" width="1" height="1" fill="#0000f7"/>
<rect x="380" y="224" width="1" height="1" fill="#00ffe6"/>
<rect x="380" y="223" width="1" height="1" fill="#0003ff"/>
<rect x="381" y="224" width="1" height="1" fill="#00ff02"/>
<rect x="381" y="225" width="1" height="1" fill="#003aff"/>
<rect x="382" y="224" width="1" height="1" fill="#e9ff00"/>
<rect x="382" y="225" width="1" height="1" fill="#00a3ff"/>
<rect x="383" y="224" width="1" height="1" fill="#ff9f00"/>
<rect x="383" y="225" width="1" height="1" fill="#00ffd7"/>
<rect x="384" y="225" width="1" height="1" fill="#ff2200"/>
<rect x="384" y="224" width="1" height="1" fill="#07ff00"/>
<rect x="385" y="225" width="1" height="1" fill="#ff6000"/>
<rect x="385" y="224" width="1" height="1" fill="#00ff4c"/>
<rect x="386" y="225" width="1" height="1" fill="#ff1200"/>
<rect x="386" y="224" width="1" height="1" fill="#1bff00"/>
<rect x="387" y="225" width="1" height="1" fill="#ff5500"/>
<rect x="387" y="224" width="1" height="1" fill="#00ff3d"/>
<rect x="387" y="226" width="1" height="1" fill="#00ff17"/>
<rect x="388" y="225" width="1" height="1" fill="#ff1000"/>
<rect x="388" y="226" width="1" height="1" fill="#1eff00"/>
<rect x="389" y="225" width="1" height="1" fill="#ff6700"/>
<rect x="389" y="226" width="1" height="1" fill="#00ff56"/>
<rect x="390" y="225" width="1" height="1" fill="#ff5700"/>
<rect x="390" y="226" width="1" height="1" fill="#00ffd1"/>
<rect x="391" y="226" width="1" height="1" fill="#e6ff00"/>
<rect x="391" y="225" width="1" height="1" fill="#0075ff"/>
<rect x="392" y="226" width="1" height="1" fill="#6bff00"/>
<rect x="392" y="225" width="1" height="1" fill="#003cff"/>
<rect x="393" y="226" width="1" height="1" fill="#b1ff00"/>
<rect x="393" y="225" width="1" height="1" fill="#0031ff"/>
<rect x="394" y="226" width="1" height="1" fill="#00ff8a"/>
<rect x="395" y="226" width="1" height="1" fill="#00dbff"/>
<rect x="396" y="227" width="1" height="1" fill="#00cbff"/>
<rect x="397" y="227" width="1" height="1" fill="#00ffba"/>
<rect x="398" y="227" width="1" height="1" fill="#8bff00"/>
<rect x="398" y="228" width="1" height="1" fill="#0029ff"/>
<rect x="399" y="227" width="1" height="1" fill="#7fff00"/>
<rect x="399" y="228" width="1" height="1" fill="#0041ff"/>
<rect x="400" y="227" width="1" height="1" fill="#ffd100"/>
<rect x="400" y="228" width="1" height="1" fill="#0092ff"/>
<rect x="401" y="228" width="1" height="1" fill="#ff7800"/>
<rect x="401" y="227" width="1" height="1" fill="#00e0ff"/>
<rect x="402" y="228" width="1" height="1" fill="#ff2200"/>
<rect x="402" y="227" width="1" height="1" fill="#00ff92"/>
<rect x="403" y="228" width="1" height="1" fill="#ff8000"/>
<rect x="403" y="229" width="1" height="1" fill="#00d1ff"/>
<rect x="404" y="229" width="1" height="1" fill="#ffd000"/>
<rect x="404" y="228" width="1" height="1" fill="#007fff"/>
<rect x="405" y="229" width="1" height="1" fill="#00ff6d"/>
<rect x="405" y="228" width="1" height="1" fill="#0000f4"/>
<rect x="406" y="229" width="1" height="1" fill="#1cff00"/>
<rect x="406" y="230" width="1" height="1" fill="#00ff32"/>
<rect x="407" y="230" width="1" height="1" fill="#00ff4a"/>
<rect x="408" y="230" width="1" height="1" fill="#04ff00"/>
<rect x="409" y="231" width="1" height="1" fill="#83ff00"/>
<rect x="410" y="231" width="1" height="1" fill="#0070ff"/>
<rect x="411" y="231" width="1" height="1" fill="#0000d9"/>
<rect x="412" y="232" width="1" height="1" fill="#0000d7"/>
<rect x="413" y="232" width="1" height="1" fill="#00beff"/>
<rect x="414" y="232" width="1" height="1" fill="#00ffbc"/>
<rect x="415" y="233" width="1" height="1" fill="#ffbe00"/>
<rect x="415" y="232" width="1" height="1" fill="#0083ff"/>
<rect x="416" y="233" width="1" height="1" fill="#ff2800"/>
<rect x="416" y="234" width="1" height="1" fill="#00ff00"/>
<rect x="417" y="234" width="1" height="1" fill="#ff4700"/>
<rect x="417" y="235" width="1" height="1" fill="#00ff2a"/>
<rect x="418" y="235" width="1" height="1" fill="#ff1900"/>
<rect x="418" y="234" width="1" height="1" fill="#12ff00"/>
<rect x="419" y="235" width="1" height="1" fill="#ff0b00"/>
<rect x="419" y="236" width="1" height="1" fill="#00ff28"/>
<rect x="420" y="235" width="1" height="1" fill="#ffa800"/>
<rect x="420" y="236" width="1" height="1" fill="#00c6ff"/>
<rect x="421" y="236" width="1" height="1" fill="#86ff00"/>
<rect x="421" y="235" width="1" height="1" fill="#0042ff"/>
<rect x="422" y="236" width="1" height="1" fill="#00ff44"/>
<rect x="423" y="236" width="1" height="1" fill="#0069ff"/>
<rect x="423" y="237" width="1" height="1" fill="#0044ff"/>
<rect x="424" y="237" width="1" height="1" fill="#0000e9"/>
<rect x="425" y="237" width="1" height="1" fill="#0000a6"/>
<rect x="425" y="238" width="1" height="1" fill="#0049ff"/>
<rect x="426" y="238" width="1" height="1" fill="#00b0ff"/>
<rect x="427" y="238" width="1" height="1" fill="#00d0ff"/>
<rect x="427" y="239" width="1" height="1" fill="#008bff"/>
<rect x="428" y="239" width="1" height="1" fill="#0018ff"/>
<rect x="428" y="240" width="1" height="1" fill="#0000bd"/>
<rect x="429" y="240" width="1" height="1" fill="#0000d8"/>
<rect x="430" y="241" width="1" height="1" fill="#0049ff"/>
<rect x="431" y="241" width="1" height="1" fill="#000eff"/>
<rect x="431" y="242" width="1" height="1" fill="#0006ff"/>
<rect x="432" y="242" width="1" height="1" fill="#0000e1"/>
<rect x="433" y="242" width="1" height="1" fill="#0074ff"/>
<rect x="433" y="243" width="1" height="1" fill="#0004ff"/>
<rect x="434" y="243" width="1" height="1" fill="#005dff"/>
<rect x="435" y="244" width="1" height="1" fill="#006eff"/>
<rect x="436" y="244" width="1" height="1" fill="#0037ff"/>
<rect x="437" y="245" width="1" height="1" fill="#00baff"/>
<rect x="438" y="245" width="1" height="1" fill="#00ff01"/>
<rect x="438" y="246" width="1" height="1" fill="#15ff00"/>
<rect x="439" y="246" width="1" height="1" fill="#7bff00"/>
<rect x="439" y="247" width="1" height="1" fill="#31ff00"/>
<rect x="440" y="247" width="1" height="1" fill="#ffef00"/>
<rect x="441" y="248" width="1" height="1" fill="#caff00"/>
<rect x="441" y="247" width="1" height="1" fill="#006aff"/>
<rect x="442" y="248" width="1" height="1" fill="#a8ff00"/>
<rect x="442" y="249" width="1" height="1" fill="#a1ff00"/>
<rect x="443" y="249" width="1" height="1" fill="#00ff65"/>
<rect x="444" y="249" width="1" height="1" fill="#00ffe3"/>
<rect x="444" y="250" width="1" height="1" fill="#00ffec"/>
<rect x="445" y="250" width="1" height="1" fill="#00ffd9"/>
<rect x="446" y="250" width="1" height="1" fill="#00cdff"/>
<rect x="446" y="251" width="1" height="1" fill="#00d6ff"/>
<rect x="447" y="251" width="1" height="1" fill="#00cfff"/>
<rect x="447" y="252" width="1" height="1" fill="#00ffb4"/>
<rect x="448" y="252" width="1" height="1" fill="#00ffdf"/>
<rect x="449" y="253" width="1" height="1" fill="#00ffab"/>
<rect x="450" y="253" width="1" height="1" fill="#00c1ff"/>
<rect x="451" y="254" width="1" height="1" fill="#00ffe5"/>
<rect x="452" y="254" width="1" height="1" fill="#00ff50"/>
<rect x="453" y="254" width="1" height="1" fill="#00ffd0"/>
<rect x="454" y="255" width="1" height="1" fill="#00ffd3"/>
<rect x="455" y="255" width="1" height="1" fill="#00ff7f"/>
<rect x="456" y="256" width="1" height="1" fill="#00d7ff"/>
<rect x="457" y="256" width="1" height="1" fill="#003bff"/>
<rect x="457" y="257" width="1" height="1" fill="#0000f4"/>
<rect x="455" y="259" width="1" height="1" fill="#00ebff"/>
<rect x="197" y="257" width="1" height="1" fill="#00ccff"/>
</g>
<rect x="24" y="229" width="1" height="1" fill="#00ccff"/>
<rect x="24" y="230" width="1" height="1" fill="#00e8ff"/>
<rect x="24" y="231" width="1" height="1" fill="#00ffe8"/>
<rect x="24" y="232" width="1" height="1" fill="#00ff5d"/>
<rect x="24" y="233" width="1" height="1" fill="#2eff00"/>
<rect x="24" y="234" width="1" height="1" fill="#b9ff00"/>
<rect x="24" y="235" width="1" height="1" fill="#ffc700"/>
<rect x="24" y="236" width="1" height="1" fill="#ff5800"/>
<rect x="24" y="237" width="1" height="1" fill="#ffb500"/>
<rect x="24" y="238" width="1" height="1" fill="#17ff00"/>
<rect x="24" y="239" width="1" height="1" fill="#00ffec"/>
<rect x="24" y="240" width="1" height="1" fill="#0099ff"/>
<rect x="103" y="229" width="1" height="1" fill="#00ffff"/>
<rect x="103" y="230" width="1" height="1" fill="#00ffc2"/>
<rect x="103" y="231" width="1" height="1" fill="#00ff7f"/>
<rect x="103" y="232" width="1" height="1" fill="#00ff2b"/>
<rect x="103" y="233" width="1" height="1" fill="#00ff2b"/>
<rect x="103" y="234" width="1" height="1" fill="#00ff7f"/>
<rect x="103" y="235" width="1" height="1" fill="#00ffd4"/>
<rect x="103" y="236" width="1" height="1" fill="#00ebff"/>
<rect x="202" y="222" width="1" height="1" fill="#00ff2b"/>
<rect x="202" y="223" width="1" height="1" fill="#ff9900"/>
<rect x="202" y="224" width="1" height="1" fill="#ff0000"/>
<rect x="202" y="225" width="1" height="1" fill="#ff3300"/>
<rect x="202" y="226" width="1" height="1" fill="#ff6600"/>
<rect x="202" y="227" width="1" height="1" fill="#9dff00"/>
<rect x="202" y="228" width="1" height="1" fill="#0099ff"/>
<rect x="232" y="222" width="1" height="1" fill="#00ffff"/>
<rect x="232" y="223" width="1" height="1" fill="#00eeff"/>
<rect x="232" y="224" width="1" height="1" fill="#00ddff"/>
<rect x="232" y="225" width="1" height="1" fill="#00ccff"/>
<rect x="465" y="223" width="1" height="1" fill="#00adff"/>
<rect x="465" y="224" width="1" height="1" fill="#00ff00"/>
<rect x="465" y="225" width="1" height="1" fill="#ff6600"/>
<rect x="465" y="226" width="1" height="1" fill="#00ff00"/>
<rect x="465" y="227" width="1" height="1" fill="#00ebff"/>
<rect x="465" y="228" width="1" height="1" fill="#00ccff"/>
<rect x="465" y="229" width="1" height="1" fill="#0085ff"/>
<rect x="510" y="213" width="1" height="1" fill="#00008f"/>
<rect x="510" y="214" width="1" height="1" fill="#0000ab"/>
<rect x="510" y="215" width="1" height="1" fill="#0000c8"/>
<rect x="510" y="216" width="1" height="1" fill="#0000dc"/>
<rect x="510" y="217" width="1" height="1" fill="#0000ef"/>
<rect x="510" y="218" width="1" height="1" fill="#0003ff"/>
<rect x="510" y="219" width="1" height="1" fill="#0016ff"/>
<rect x="510" y="220" width="1" height="1" fill="#0034ff"/>
<rect x="510" y="221" width="1" height="1" fill="#005aff"/>
<rect x="510" y="222" width="1" height="1" fill="#0085ff"/>
<rect x="510" y="223" width="1" height="1" fill="#00b4ff"/>
<rect x="510" y="224" width="1" height="1" fill="#00dcff"/>
<rect x="510" y="225" width="1" height="1" fill="#00efff"/>
<rect x="510" y="226" width="1" height="1" fill="#00f7ff"/>
<rect x="510" y="227" width="1" height="1" fill="#00beff"/>
<rect x="510" y="228" width="1" height="1" fill="#0085ff"/>
<rect x="514" y="235" width="1" height="1" fill="#c4ff00"/>
<rect x="514" y="236" width="1" height="1" fill="#ffe700"/>
<rect x="514" y="237" width="1" height="1" fill="#ff9900"/>
<rect x="514" y="238" width="1" height="1" fill="#ff3300"/>
<rect x="453" y="219" width="1" height="1" fill="#00ccff"/>
<path d="M20 400V393 h1V395 h1V393 h1V398 h1V397 h1V399 h1V397 h1V397 h1V399 h1V399 h1V396 h1V396 h1V397 h1V397 h1V399 h1V398 h1V397 h1V395 h1V396 h1V397 h1V397 h1V398 h1V397 h1V397 h1V398 h1V397 h1V397 h1V397 h1V397 h1V396 h1V396 h1V396 h1V399 h1V398 h1V397 h1V398 h1V398 h1V396 h1V397 h1V396 h1V396 h1V396 h1V396 h1V398 h1V396 h1V399 h1V396 h1V397 h1V396 h1V397 h1V397 h1V397 h1V399 h1V397 h1V397 h1V397 h1V399 h1V395 h1V395 h1V399 h1V394 h1V399 h1V397 h1V396 h1V392 h1V393 h1V392 h1V396 h1V393 h1V393 h1V393 h1V393 h1V394 h1V393 h1V393 h1V392 h1V393 h1V394 h1V392 h1V393 h1V393 h1V394 h1V395 h1V392 h1V393 h1V395 h1V395 h1V396 h1V394 h1V396 h1V393 h1V393 h1V394 h1V393 h1V393 h1V394 h1V392 h1V392 h1V393 h1V393 h1V393 h1V394 h1V394 h1V398 h1V394 h1V395 h1V393 h1V393 h1V395 h1V392 h1V392 h1V393 h1V394 h1V394 h1V395 h1V394 h1V395 h1V392 h1V393 h1V395 h1V393 h1V392 h1V393 h1V392 h1V394 h1V392 h1V393 h1V393 h1V393 h1V393 h1V393 h1V392 h1V392 h1V392 h1V397 h1V393 h1V393 h1V393 h1V394 h1V395 h1V394 h1V393 h1V392 h1V393 h1V393 h1V395 h1V393 h1V394 h1V394 h1V396 h1V397 h1V394 h1V393 h1V393 h1V393 h1V394 h1V394 h1V393 h1V394 h1V392 h1V397 h1V393 h1V394 h1V393 h1V392 h1V394 h1V396 h1V393 h1V393 h1V392 h1V393 h1V396 h1V393 h1V394 h1V393 h1V393 h1V392 h1V393 h1V393 h1V396 h1V392 h1V392 h1V393 h1V393 h1V393 h1V393 h1V393 h1V394 h1V392 h1V395 h1V393 h1V393 h1V394 h1V393 h1V393 h1V398 h1V394 h1V394 h1V392 h1V393 h1V393 h1V394 h1V393 h1V394 h1V394 h1V393 h1V395 h1V394 h1V393 h1V393 h1V392 h1V392 h1V392 h1V392 h1V393 h1V392 h1V393 h1V394 h1V396 h1V393 h1V394 h1V395 h1V395 h1V396 h1V394 h1V398 h1V396 h1V395 h1V396 h1V395 h1V397 h1V393 h1V394 h1V393 h1V394 h1V395 h1V394 h1V394 h1V396 h1V398 h1V395 h1V395 h1V395 h1V394 h1V394 h1V395 h1V392 h1V393 h1V394 h1V395 h1V394 h1V395 h1V398 h1V396 h1V394 h1V394 h1V394 h1V394 h1V395 h1V395 h1V393 h1V393 h1V392 h1V393 h1V392 h1V393 h1V392 h1V392 h1V394 h1V394 h1V395 h1V395 h1V396 h1V395 h1V399 h1V395 h1V394 h1V394 h1V393 h1V393 h1V393 h1V395 h1V392 h1V394 h1V393 h1V394 h1V395 h1V393 h1V392 h1V394 h1V394 h1V395 h1V396 h1V396 h1V393 h1V394 h1V395 h1V395 h1V395 h1V394 h1V392 h1V392 h1V393 h1V395 h1V394 h1V393 h1V393 h1V396 h1V395 h1V394 h1V393 h1V392 h1V393 h1V392 h1V395 h1V394 h1V395 h1V392 h1V392 h1V392 h1V393 h1V394 h1V395 h1V393 h1V395 h1V394 h1V394 h1V394 h1V394 h1V392 h1V394 h1V393 h1V392 h1V392 h1V392 h1V392 h1V392 h1V393 h1V392 h1V393 h1V393 h1V392 h1V392 h1V392 h1V392 h1V393 h1V393 h1V393 h1V392 h1V393 h1V394 h1V395 h1V394 h1V392 h1V392 h1V392 h1V393 h1V392 h1V392 h1V392 h1V395 h1V394 h1V393 h1V393 h1V394 h1V397 h1V394 h1V393 h1V393 h1V394 h1V393 h1V393 h1V394 h1V393 h1V393 h1V396 h1V393 h1V392 h1V395 h1V393 h1V394 h1V397 h1V394 h1V393 h1V392 h1V393 h1V393 h1V393 h1V393 h1V395 h1V393 h1V393 h1V393 h1V393 h1V392 h1V392 h1V393 h1V394 h1V393 h1V394 h1V393 h1V394 h1V392 h1V393 h1V393 h1V395 h1V394 h1V394 h1V394 h1V393 h1V393 h1V395 h1V392 h1V393 h1V394 h1V394 h1V393 h1V394 h1V392 h1V392 h1V393 h1V395 h1V393 h1V394 h1V392 h1V392 h1V392 h1V392 h1V392 h1V392 h1V392 h1V393 h1V393 h1V393 h1V393 h1V393 h1V395 h1V393 h1V393 h1V393 h1V393 h1V393 h1V397 h1V394 h1V392 h1V395 h1V394 h1V394 h1V392 h1V392 h1V397 h1V393 h1V392 h1V392 h1V392 h1V392 h1V396 h1V395 h1V394 h1V392 h1V396 h1V393 h1V392 h1V392 h1V392 h1V392 h1V392 h1V392 h1V394 h1V394 h1V393 h1V395 h1V392 h1V393 h1V392 h1V395 h1V396 h1V394 h1V392 h1V392 h1V392 h1V393 h1V393 h1V393 h1V396 h1V393 h1V394 h1V393 h1V396 h1V392 h1V393 h1V392 h1V394 h1V394 h1V392 h1V392 h1V392 h1V392 h1V393 h1V396 h1V392 h1V392 h1V392 h1V392 h1V394 h1V394 h1V393 h1V392 h1V393 h1V393 h1V394 h1V393 h1V392 h1V394 h1V394 h1V394 h1V394 h1V394 h1V393 h1V392 h1V396 h1V392 h1V392 h1V392 h1V393 h1V394 h1V394 h1V398 h1V393 h1V394 h1V393 h1V392 h1V393 h1V392 h1V394 h1V392 h1V392 h1V396 h1V394 h1V395 h1V394 h1V392 h1V394 h1V396 h1V395 h1V393 h1V392 h1V392 h1V394 h1V393 h1V392 h1V392 h1V392 h1V392 h1V392 h1V393 h1V395 h1V392 h1V393 h1V392 h1V393 h1V393 h1V392 h1V392 h1V393 h1V392 h1V392 h1V393 h1V392 h1V392 h1V393 h1V394 h1V395 h1V392 h1V392 h1V392 h1V392 h1V392 h1V394 h1V393 h1V392 h1V392 h1V394 h1V395 h1V394 h1V392 h1V393 h1V392 h1V392 h1V393 h1V392 h1V392 h1V393 h1V393 h1V392 h1V392 h1V396 h1V393 h1V392 h1V392 h1V400Z" fill="#00ffff"/>
<path d="M127 400V388 h1V388 h1V388 h1V388 h1V389 h1V388 h1V388 h1V387 h1V387 h1V388 h1V386 h1V387 h1V387 h1V386 h1V386 h1V385 h1V384 h1V383 h1V384 h1V386 h1V386 h1V386 h1V400Z" fill="#ffff00"/>
<path d="M150 400V388 h1V388 h1V388 h1V387 h1V387 h1V386 h1V387 h1V387 h1V388 h1V400Z" fill="#ffff00"/>
<path d="M192 400V389 h1V388 h1V389 h1V400Z" fill="#ffff00"/>
<path d="M202 400V384 h1V389 h1V390 h1V390 h1V400Z" fill="#ffff00"/>
<path d="M210 400V389 h1V388 h1V387 h1V388 h1V388 h1V400Z" fill="#ffff00"/>
<path d="M219 400V388 h1V389 h1V400Z" fill="#ffff00"/>
<path d="M380 400V389 h1V388 h1V388 h1V387 h1V386 h1V385 h1V385 h1V384 h1V383 h1V384 h1V384 h1V386 h1V400Z" fill="#ffff00"/>
<path d="M397 400V389 h1V388 h1V387 h1V385 h1V384 h1V385 h1V385 h1V385 h1V385 h1V386 h1V386 h1V387 h1V388 h1V389 h1V400Z" fill="#ffff00"/>
<path d="M415 400V387 h1V387 h1V386 h1V386 h1V386 h1V386 h1V388 h1V389 h1V400Z" fill="#ffff00"/>
<path d="M438 400V388 h1V388 h1V388 h1V388 h1V389 h1V400Z" fill="#ffff00"/>
<rect x="24" y="383" width="1" height="17" fill="#ffff00"/>
<rect x="103" y="390" width="1" height="10" fill="#ffff00"/>
<rect x="115" y="390" width="1" height="10" fill="#ffff00"/>
<rect x="124" y="390" width="1" height="10" fill="#ffff00"/>
<rect x="190" y="389" width="1" height="11" fill="#ffff00"/>
<rect x="393" y="389" width="1" height="11" fill="#ffff00"/>
<rect x="411" y="389" width="1" height="11" fill="#ffff00"/>
<rect x="455" y="390" width="1" height="10" fill="#ffff00"/>
<rect x="465" y="385" width="1" height="15" fill="#ffff00"/>
<rect x="514" y="383" width="1" height="17" fill="#ffff00"/>
<rect x="528" y="390" width="1" height="10" fill="#ffff00"/>
<rect x="604" y="389" width="1" height="11" fill="#ffff00"/>
<rect x="56" y="80" width="24" height="12" fill="#000"/>
<rect x="79" y="92" width="1" height="3" fill="#ffff00"/>
<text transform="translate(58.9,90) scale(0.75,1)" text-anchor="middle" font-family="Liberation Sans" font-size="12.4" fill="#ffff00" stroke="#ffff00" stroke-width="0.12">0</text>
<text transform="translate(64.9,90) scale(0.75,1)" text-anchor="middle" font-family="Liberation Sans" font-size="12.4" fill="#ffff00" stroke="#ffff00" stroke-width="0.12">5</text>
<text transform="translate(70.9,90) scale(0.75,1)" text-anchor="middle" font-family="Liberation Sans" font-size="12.4" fill="#ffff00" stroke="#ffff00" stroke-width="0.12">1</text>
<text transform="translate(76.9,90) scale(0.75,1)" text-anchor="middle" font-family="Liberation Sans" font-size="12.4" fill="#ffff00" stroke="#ffff00" stroke-width="0.12">1</text>
<rect x="116" y="80" width="24" height="12" fill="#000"/>
<rect x="139" y="92" width="1" height="3" fill="#ffff00"/>
<text transform="translate(118.9,90) scale(0.75,1)" text-anchor="middle" font-family="Liberation Sans" font-size="12.4" fill="#ffff00" stroke="#ffff00" stroke-width="0.12">0</text>
<text transform="translate(124.9,90) scale(0.75,1)" text-anchor="middle" font-family="Liberation Sans" font-size="12.4" fill="#ffff00" stroke="#ffff00" stroke-width="0.12">5</text>
<text transform="translate(130.9,90) scale(0.75,1)" text-anchor="middle" font-family="Liberation Sans" font-size="12.4" fill="#ffff00" stroke="#ffff00" stroke-width="0.12">1</text>
<text transform="translate(136.9,90) scale(0.75,1)" text-anchor="middle" font-family="Liberation Sans" font-size="12.4" fill="#ffff00" stroke="#ffff00" stroke-width="0.12">2</text>
<rect x="176" y="80" width="24" height="12" fill="#000"/>
<rect x="199" y="92" width="1" height="3" fill="#ffff00"/>
<text transform="translate(178.9,90) scale(0.75,1)" text-anchor="middle" font-family="Liberation Sans" font-size="12.4" fill="#ffff00" stroke="#ffff00" stroke-width="0.12">0</text>
<text transform="translate(184.9,90) scale(0.75,1)" text-anchor="middle" font-family="Liberation Sans" font-size="12.4" fill="#ffff00" stroke="#ffff00" stroke-width="0.12">5</text>
<text transform="translate(190.9,90) scale(0.75,1)" text-anchor="middle" font-family="Liberation Sans" font-size="12.4" fill="#ffff00" stroke="#ffff00" stroke-width="0.12">1</text>
<text transform="translate(196.9,90) scale(0.75,1)" text-anchor="middle" font-family="Liberation Sans" font-size="12.4" fill="#ffff00" stroke="#ffff00" stroke-width="0.12">3</text>
<rect x="236" y="80" width="24" height="12" fill="#000"/>
<rect x="259" y="92" width="1" height="3" fill="#ffff00"/>
<text transform="translate(238.9,90) scale(0.75,1)" text-anchor="middle" font-family="Liberation Sans" font-size="12.4" fill="#ffff00" stroke="#ffff00" stroke-width="0.12">0</text>
<text transform="translate(244.9,90) scale(0.75,1)" text-anchor="middle" font-family="Liberation Sans" font-size="12.4" fill="#ffff00" stroke="#ffff00" stroke-width="0.12">5</text>
<text transform="translate(250.9,90) scale(0.75,1)" text-anchor="middle" font-family="Liberation Sans" font-size="12.4" fill="#ffff00" stroke="#ffff00" stroke-width="0.12">1</text>
<text transform="translate(256.9,90) scale(0.75,1)" text-anchor="middle" font-family="Liberation Sans" font-size="12.4" fill="#ffff00" stroke="#ffff00" stroke-width="0.12">4</text>
<rect x="296" y="80" width="24" height="12" fill="#000"/>
<rect x="319" y="92" width="1" height="3" fill="#ffff00"/>
<text transform="translate(298.9,90) scale(0.75,1)" text-anchor="middle" font-family="Liberation Sans" font-size="12.4" fill="#ffff00" stroke="#ffff00" stroke-width="0.12">0</text>
<text transform="translate(304.9,90) scale(0.75,1)" text-anchor="middle" font-family="Liberation Sans" font-size="12.4" fill="#ffff00" stroke="#ffff00" stroke-width="0.12">5</text>
<text transform="translate(310.9,90) scale(0.75,1)" text-anchor="middle" font-family="Liberation Sans" font-size="12.4" fill="#ffff00" stroke="#ffff00" stroke-width="0.12">1</text>
<text transform="translate(316.9,90) scale(0.75,1)" text-anchor="middle" font-family="Liberation Sans" font-size="12.4" fill="#ffff00" stroke="#ffff00" stroke-width="0.12">5</text>
<rect x="356" y="80" width="24" height="12" fill="#000"/>
<rect x="379" y="92" width="1" height="3" fill="#ffff00"/>
<text transform="translate(358.9,90) scale(0.75,1)" text-anchor="middle" font-family="Liberation Sans" font-size="12.4" fill="#ffff00" stroke="#ffff00" stroke-width="0.12">0</text>
<text transform="translate(364.9,90) scale(0.75,1)" text-anchor="middle" font-family="Liberation Sans" font-size="12.4" fill="#ffff00" stroke="#ffff00" stroke-width="0.12">5</text>
<text transform="translate(370.9,90) scale(0.75,1)" text-anchor="middle" font-family="Liberation Sans" font-size="12.4" fill="#ffff00" stroke="#ffff00" stroke-width="0.12">1</text>
<text transform="translate(376.9,90) scale(0.75,1)" text-anchor="middle" font-family="Liberation Sans" font-size="12.4" fill="#ffff00" stroke="#ffff00" stroke-width="0.12">6</text>
<rect x="416" y="80" width="24" height="12" fill="#000"/>
<rect x="439" y="92" width="1" height="3" fill="#ffff00"/>
<text transform="translate(418.9,90) scale(0.75,1)" text-anchor="middle" font-family="Liberation Sans" font-size="12.4" fill="#ffff00" stroke="#ffff00" stroke-width="0.12">0</text>
<text transform="translate(424.9,90) scale(0.75,1)" text-anchor="middle" font-family="Liberation Sans" font-size="12.4" fill="#ffff00" stroke="#ffff00" stroke-width="0.12">5</text>
<text transform="translate(430.9,90) scale(0.75,1)" text-anchor="middle" font-family="Liberation Sans" font-size="12.4" fill="#ffff00" stroke="#ffff00" stroke-width="0.12">1</text>
<text transform="translate(436.9,90) scale(0.75,1)" text-anchor="middle" font-family="Liberation Sans" font-size="12.4" fill="#ffff00" stroke="#ffff00" stroke-width="0.12">7</text>
<rect x="476" y="80" width="24" height="12" fill="#000"/>
<rect x="499" y="92" width="1" height="3" fill="#ffff00"/>
<text transform="translate(478.9,90) scale(0.75,1)" text-anchor="middle" font-family="Liberation Sans" font-size="12.4" fill="#ffff00" stroke="#ffff00" stroke-width="0.12">0</text>
<text transform="translate(484.9,90) scale(0.75,1)" text-anchor="middle" font-family="Liberation Sans" font-size="12.4" fill="#ffff00" stroke="#ffff00" stroke-width="0.12">5</text>
<text transform="translate(490.9,90) scale(0.75,1)" text-anchor="middle" font-family="Liberation Sans" font-size="12.4" fill="#ffff00" stroke="#ffff00" stroke-width="0.12">1</text>
<text transform="translate(496.9,90) scale(0.75,1)" text-anchor="middle" font-family="Liberation Sans" font-size="12.4" fill="#ffff00" stroke="#ffff00" stroke-width="0.12">8</text>
<rect x="536" y="80" width="24" height="12" fill="#000"/>
<rect x="559" y="92" width="1" height="3" fill="#ffff00"/>
<text transform="translate(538.9,90) scale(0.75,1)" text-anchor="middle" font-family="Liberation Sans" font-size="12.4" fill="#ffff00" stroke="#ffff00" stroke-width="0.12">0</text>
<text transform="translate(544.9,90) scale(0.75,1)" text-anchor="middle" font-family="Liberation Sans" font-size="12.4" fill="#ffff00" stroke="#ffff00" stroke-width="0.12">5</text>
<text transform="translate(550.9,90) scale(0.75,1)" text-anchor="middle" font-family="Liberation Sans" font-size="12.4" fill="#ffff00" stroke="#ffff00" stroke-width="0.12">1</text>
<text transform="translate(556.9,90) scale(0.75,1)" text-anchor="middle" font-family="Liberation Sans" font-size="12.4" fill="#ffff00" stroke="#ffff00" stroke-width="0.12">9</text>
<rect x="596" y="80" width="24" height="12" fill="#000"/>
<rect x="619" y="92" width="1" height="3" fill="#ffff00"/>
<text transform="translate(598.9,90) scale(0.75,1)" text-anchor="middle" font-family="Liberation Sans" font-size="12.4" fill="#ffff00" stroke="#ffff00" stroke-width="0.12">0</text>
<text transform="translate(604.9,90) scale(0.75,1)" text-anchor="middle" font-family="Liberation Sans" font-size="12.4" fill="#ffff00" stroke="#ffff00" stroke-width="0.12">5</text>
<text transform="translate(610.9,90) scale(0.75,1)" text-anchor="middle" font-family="Liberation Sans" font-size="12.4" fill="#ffff00" stroke="#ffff00" stroke-width="0.12">2</text>
<text transform="translate(616.9,90) scale(0.75,1)" text-anchor="middle" font-family="Liberation Sans" font-size="12.4" fill="#ffff00" stroke="#ffff00" stroke-width="0.12">0</text>
<rect x="16" y="90" width="2" height="1" fill="#ffff00"/>
<rect x="624" y="90" width="2" height="1" fill="#ffff00"/>
<rect x="16" y="100" width="2" height="1" fill="#ffff00"/>
<rect x="624" y="100" width="2" height="1" fill="#ffff00"/>
<rect x="16" y="110" width="2" height="1" fill="#ffff00"/>
<rect x="624" y="110" width="2" height="1" fill="#ffff00"/>
<rect x="16" y="120" width="2" height="1" fill="#ffff00"/>
<rect x="624" y="120" width="2" height="1" fill="#ffff00"/>
<rect x="14" y="130" width="4" height="1" fill="#ffff00"/>
<rect x="623" y="130" width="4" height="1" fill="#ffff00"/>
<rect x="16" y="140" width="2" height="1" fill="#ffff00"/>
<rect x="624" y="140" width="2" height="1" fill="#ffff00"/>
<rect x="16" y="150" width="2" height="1" fill="#ffff00"/>
<rect x="624" y="150" width="2" height="1" fill="#ffff00"/>
<rect x="16" y="160" width="2" height="1" fill="#ffff00"/>
<rect x="624" y="160" width="2" height="1" fill="#ffff00"/>
<rect x="16" y="170" width="2" height="1" fill="#ffff00"/>
<rect x="624" y="170" width="2" height="1" fill="#ffff00"/>
<rect x="14" y="180" width="4" height="1" fill="#ffff00"/>
<rect x="623" y="180" width="4" height="1" fill="#ffff00"/>
<rect x="16" y="190" width="2" height="1" fill="#ffff00"/>
<rect x="624" y="190" width="2" height="1" fill="#ffff00"/>
<rect x="16" y="200" width="2" height="1" fill="#ffff00"/>
<rect x="624" y="200" width="2" height="1" fill="#ffff00"/>
<rect x="16" y="210" width="2" height="1" fill="#ffff00"/>
<rect x="624" y="210" width="2" height="1" fill="#ffff00"/>
<rect x="16" y="220" width="2" height="1" fill="#ffff00"/>
<rect x="624" y="220" width="2" height="1" fill="#ffff00"/>
<rect x="14" y="230" width="4" height="1" fill="#ffff00"/>
<rect x="623" y="230" width="4" height="1" fill="#ffff00"/>
<rect x="16" y="240" width="2" height="1" fill="#ffff00"/>
<rect x="624" y="240" width="2" height="1" fill="#ffff00"/>
<rect x="16" y="250" width="2" height="1" fill="#ffff00"/>
<rect x="624" y="250" width="2" height="1" fill="#ffff00"/>
<rect x="16" y="260" width="2" height="1" fill="#ffff00"/>
<rect x="624" y="260" width="2" height="1" fill="#ffff00"/>
<rect x="16" y="270" width="2" height="1" fill="#ffff00"/>
<rect x="624" y="270" width="2" height="1" fill="#ffff00"/>
<rect x="14" y="280" width="4" height="1" fill="#ffff00"/>
<rect x="623" y="280" width="4" height="1" fill="#ffff00"/>
<rect x="16" y="290" width="2" height="1" fill="#ffff00"/>
<rect x="624" y="290" width="2" height="1" fill="#ffff00"/>
<rect x="16" y="300" width="2" height="1" fill="#ffff00"/>
<rect x="624" y="300" width="2" height="1" fill="#ffff00"/>
<rect x="16" y="310" width="2" height="1" fill="#ffff00"/>
<rect x="624" y="310" width="2" height="1" fill="#ffff00"/>
<rect x="16" y="320" width="2" height="1" fill="#ffff00"/>
<rect x="624" y="320" width="2" height="1" fill="#ffff00"/>
<rect x="14" y="330" width="4" height="1" fill="#ffff00"/>
<rect x="623" y="330" width="4" height="1" fill="#ffff00"/>
<rect x="16" y="340" width="2" height="1" fill="#ffff00"/>
<rect x="624" y="340" width="2" height="1" fill="#ffff00"/>
<rect x="16" y="350" width="2" height="1" fill="#ffff00"/>
<rect x="624" y="350" width="2" height="1" fill="#ffff00"/>
<rect x="16" y="360" width="2" height="1" fill="#ffff00"/>
<rect x="624" y="360" width="2" height="1" fill="#ffff00"/>
<rect x="16" y="370" width="2" height="1" fill="#ffff00"/>
<rect x="624" y="370" width="2" height="1" fill="#ffff00"/>
<rect x="14" y="380" width="4" height="1" fill="#ffff00"/>
<rect x="623" y="380" width="4" height="1" fill="#ffff00"/>
<rect x="16" y="390" width="2" height="1" fill="#ffff00"/>
<rect x="624" y="390" width="2" height="1" fill="#ffff00"/>
<text transform="translate(0.6,134.4) scale(0.78,1)" font-family="Liberation Sans" font-size="12.6" fill="#ffff00" stroke="#ffff00" stroke-width="0.12" xml:space="preserve">1.1</text>
<text transform="translate(0.6,184.4) scale(0.78,1)" font-family="Liberation Sans" font-size="12.6" fill="#ffff00" stroke="#ffff00" stroke-width="0.12" xml:space="preserve">1.0</text>
<text transform="translate(0.6,234.4) scale(0.78,1)" font-family="Liberation Sans" font-size="12.6" fill="#ffff00" stroke="#ffff00" stroke-width="0.12" xml:space="preserve">0.9</text>
<text transform="translate(0.6,284.4) scale(0.78,1)" font-family="Liberation Sans" font-size="12.6" fill="#ffff00" stroke="#ffff00" stroke-width="0.12" xml:space="preserve">0.8</text>
<text transform="translate(0.6,334.4) scale(0.78,1)" font-family="Liberation Sans" font-size="12.6" fill="#ffff00" stroke="#ffff00" stroke-width="0.12" xml:space="preserve">0.7</text>
<text transform="translate(0.6,384.4) scale(0.78,1)" font-family="Liberation Sans" font-size="12.6" fill="#ffff00" stroke="#ffff00" stroke-width="0.12" xml:space="preserve">0.6</text>
<text transform="translate(-0.3,84.5) scale(0.8,1)" font-family="Liberation Sans" font-size="12.4" fill="#ffff00" stroke="#ffff00" stroke-width="0.1" xml:space="preserve">k</text>
<text transform="translate(5.3,84.5) scale(0.78,1)" font-family="Liberation Sans" font-size="12.4" fill="#ffff00" stroke="#ffff00" stroke-width="0.1" xml:space="preserve">H</text>
<text transform="translate(13,84.5) scale(0.85,1)" font-family="Liberation Sans" font-size="12.4" fill="#ffff00" stroke="#ffff00" stroke-width="0.1" xml:space="preserve">z</text>
<text x="14.7" y="13" text-anchor="middle" font-family="Liberation Sans" font-size="14.5" fill="#00ff00" stroke="#00ff00" stroke-width=".1">H</text>
<text x="34.7" y="13" text-anchor="middle" font-family="Liberation Sans" font-size="14.5" fill="#00ff00" stroke="#00ff00" stroke-width=".1">R</text>
<text x="54.6" y="13" text-anchor="middle" font-family="Liberation Sans" font-size="14.5" fill="#00ff00" stroke="#00ff00" stroke-width=".1">O</text>
<text x="74.9" y="13" text-anchor="middle" font-family="Liberation Sans" font-size="14.5" fill="#00ff00" stroke="#00ff00" stroke-width=".1">F</text>
<text x="92.3" y="13" text-anchor="middle" font-family="Liberation Sans" font-size="14.5" fill="#00ff00" stroke="#00ff00" stroke-width=".1">F</text>
<text x="109.7" y="13" text-anchor="middle" font-family="Liberation Sans" font-size="14.5" fill="#00ff00" stroke="#00ff00" stroke-width=".1">T</text>
<text transform="translate(126,13) scale(0.8,1)" font-family="Liberation Sans" font-size="11.4" fill="#00ff00" stroke="#00ff00" stroke-width="0.22" xml:space="preserve">1.0.0</text>
<text transform="translate(10,30) scale(0.732,1)" font-family="Liberation Mono" font-size="13.66" fill="#ffff00" stroke="#ffff00" stroke-width="0.22" xml:space="preserve">          .png</text>
<text transform="translate(12.9,30) scale(0.75,1)" text-anchor="middle" font-family="Liberation Sans" font-size="12.4" fill="#ffff00" stroke="#ffff00" stroke-width="0.12">2</text>
<text transform="translate(18.9,30) scale(0.75,1)" text-anchor="middle" font-family="Liberation Sans" font-size="12.4" fill="#ffff00" stroke="#ffff00" stroke-width="0.12">5</text>
<text transform="translate(24.9,30) scale(0.75,1)" text-anchor="middle" font-family="Liberation Sans" font-size="12.4" fill="#ffff00" stroke="#ffff00" stroke-width="0.12">1</text>
<text transform="translate(30.9,30) scale(0.75,1)" text-anchor="middle" font-family="Liberation Sans" font-size="12.4" fill="#ffff00" stroke="#ffff00" stroke-width="0.12">0</text>
<text transform="translate(36.9,30) scale(0.75,1)" text-anchor="middle" font-family="Liberation Sans" font-size="12.4" fill="#ffff00" stroke="#ffff00" stroke-width="0.12">0</text>
<text transform="translate(42.9,30) scale(0.75,1)" text-anchor="middle" font-family="Liberation Sans" font-size="12.4" fill="#ffff00" stroke="#ffff00" stroke-width="0.12">1</text>
<text transform="translate(48.9,30) scale(0.75,1)" text-anchor="middle" font-family="Liberation Sans" font-size="12.4" fill="#ffff00" stroke="#ffff00" stroke-width="0.12">0</text>
<text transform="translate(54.9,30) scale(0.75,1)" text-anchor="middle" font-family="Liberation Sans" font-size="12.4" fill="#ffff00" stroke="#ffff00" stroke-width="0.12">5</text>
<text transform="translate(60.9,30) scale(0.75,1)" text-anchor="middle" font-family="Liberation Sans" font-size="12.4" fill="#ffff00" stroke="#ffff00" stroke-width="0.12">1</text>
<text transform="translate(66.9,30) scale(0.75,1)" text-anchor="middle" font-family="Liberation Sans" font-size="12.4" fill="#ffff00" stroke="#ffff00" stroke-width="0.12">0</text>
<text transform="translate(10,50) scale(0.732,1)" font-family="Liberation Mono" font-size="13.66" fill="#ffff00" stroke="#ffff00" stroke-width="0.22" xml:space="preserve">  .  .     :</text>
<text transform="translate(12.9,50) scale(0.75,1)" text-anchor="middle" font-family="Liberation Sans" font-size="12.4" fill="#ffff00" stroke="#ffff00" stroke-width="0.12">2</text>
<text transform="translate(18.9,50) scale(0.75,1)" text-anchor="middle" font-family="Liberation Sans" font-size="12.4" fill="#ffff00" stroke="#ffff00" stroke-width="0.12">5</text>
<text transform="translate(30.9,50) scale(0.75,1)" text-anchor="middle" font-family="Liberation Sans" font-size="12.4" fill="#ffff00" stroke="#ffff00" stroke-width="0.12">1</text>
<text transform="translate(36.9,50) scale(0.75,1)" text-anchor="middle" font-family="Liberation Sans" font-size="12.4" fill="#ffff00" stroke="#ffff00" stroke-width="0.12">0</text>
<text transform="translate(48.9,50) scale(0.75,1)" text-anchor="middle" font-family="Liberation Sans" font-size="12.4" fill="#ffff00" stroke="#ffff00" stroke-width="0.12">0</text>
<text transform="translate(54.9,50) scale(0.75,1)" text-anchor="middle" font-family="Liberation Sans" font-size="12.4" fill="#ffff00" stroke="#ffff00" stroke-width="0.12">1</text>
<text transform="translate(66.9,50) scale(0.75,1)" text-anchor="middle" font-family="Liberation Sans" font-size="12.4" fill="#ffff00" stroke="#ffff00" stroke-width="0.12">0</text>
<text transform="translate(72.9,50) scale(0.75,1)" text-anchor="middle" font-family="Liberation Sans" font-size="12.4" fill="#ffff00" stroke="#ffff00" stroke-width="0.12">5</text>
<text transform="translate(84.9,50) scale(0.75,1)" text-anchor="middle" font-family="Liberation Sans" font-size="12.4" fill="#ffff00" stroke="#ffff00" stroke-width="0.12">1</text>
<text transform="translate(90.9,50) scale(0.75,1)" text-anchor="middle" font-family="Liberation Sans" font-size="12.4" fill="#ffff00" stroke="#ffff00" stroke-width="0.12">0</text>
<text transform="translate(124,36) scale(0.732,1)" font-family="Liberation Mono" font-size="13.66" fill="#ffff00" stroke="#ffff00" stroke-width="0.22" xml:space="preserve">meteor</text>
<text transform="translate(142.9,50) scale(0.75,1)" text-anchor="middle" font-family="Liberation Sans" font-size="12.4" fill="#ffff00" stroke="#ffff00" stroke-width="0.12">2</text>
<text transform="translate(148.9,50) scale(0.75,1)" text-anchor="middle" font-family="Liberation Sans" font-size="12.4" fill="#ffff00" stroke="#ffff00" stroke-width="0.12">2</text>
<text transform="translate(180,15) scale(0.732,1)" font-family="Liberation Mono" font-size="13.66" fill="#ffff00" stroke="#ffff00" stroke-width="0.22" xml:space="preserve">Observer           : Takanori Kawachi</text>
<text transform="translate(180,27) scale(0.732,1)" font-family="Liberation Mono" font-size="13.66" fill="#ffff00" stroke="#ffff00" stroke-width="0.22" xml:space="preserve">Receiving Location : Ogaki, Gifu, JAPAN (   .  E,   .  N)</text>
<text transform="translate(428.9,27) scale(0.75,1)" text-anchor="middle" font-family="Liberation Sans" font-size="12.4" fill="#ffff00" stroke="#ffff00" stroke-width="0.12">1</text>
<text transform="translate(434.9,27) scale(0.75,1)" text-anchor="middle" font-family="Liberation Sans" font-size="12.4" fill="#ffff00" stroke="#ffff00" stroke-width="0.12">3</text>
<text transform="translate(440.9,27) scale(0.75,1)" text-anchor="middle" font-family="Liberation Sans" font-size="12.4" fill="#ffff00" stroke="#ffff00" stroke-width="0.12">6</text>
<text transform="translate(452.9,27) scale(0.75,1)" text-anchor="middle" font-family="Liberation Sans" font-size="12.4" fill="#ffff00" stroke="#ffff00" stroke-width="0.12">6</text>
<text transform="translate(458.9,27) scale(0.75,1)" text-anchor="middle" font-family="Liberation Sans" font-size="12.4" fill="#ffff00" stroke="#ffff00" stroke-width="0.12">0</text>
<text transform="translate(482.9,27) scale(0.75,1)" text-anchor="middle" font-family="Liberation Sans" font-size="12.4" fill="#ffff00" stroke="#ffff00" stroke-width="0.12">3</text>
<text transform="translate(488.9,27) scale(0.75,1)" text-anchor="middle" font-family="Liberation Sans" font-size="12.4" fill="#ffff00" stroke="#ffff00" stroke-width="0.12">5</text>
<text transform="translate(500.9,27) scale(0.75,1)" text-anchor="middle" font-family="Liberation Sans" font-size="12.4" fill="#ffff00" stroke="#ffff00" stroke-width="0.12">3</text>
<text transform="translate(506.9,27) scale(0.75,1)" text-anchor="middle" font-family="Liberation Sans" font-size="12.4" fill="#ffff00" stroke="#ffff00" stroke-width="0.12">5</text>
<text transform="translate(180,39) scale(0.732,1)" font-family="Liberation Mono" font-size="13.66" fill="#ffff00" stroke="#ffff00" stroke-width="0.22" xml:space="preserve">Receiver           : R   T (RTL-SDR) SDR-Sharp   .    MHz</text>
<text transform="translate(314.9,39) scale(0.75,1)" text-anchor="middle" font-family="Liberation Sans" font-size="12.4" fill="#ffff00" stroke="#ffff00" stroke-width="0.12">8</text>
<text transform="translate(320.9,39) scale(0.75,1)" text-anchor="middle" font-family="Liberation Sans" font-size="12.4" fill="#ffff00" stroke="#ffff00" stroke-width="0.12">2</text>
<text transform="translate(326.9,39) scale(0.75,1)" text-anchor="middle" font-family="Liberation Sans" font-size="12.4" fill="#ffff00" stroke="#ffff00" stroke-width="0.12">0</text>
<text transform="translate(338.9,39) scale(0.75,1)" text-anchor="middle" font-family="Liberation Sans" font-size="12.4" fill="#ffff00" stroke="#ffff00" stroke-width="0.12">2</text>
<text transform="translate(464.9,39) scale(0.75,1)" text-anchor="middle" font-family="Liberation Sans" font-size="12.4" fill="#ffff00" stroke="#ffff00" stroke-width="0.12">5</text>
<text transform="translate(470.9,39) scale(0.75,1)" text-anchor="middle" font-family="Liberation Sans" font-size="12.4" fill="#ffff00" stroke="#ffff00" stroke-width="0.12">3</text>
<text transform="translate(482.9,39) scale(0.75,1)" text-anchor="middle" font-family="Liberation Sans" font-size="12.4" fill="#ffff00" stroke="#ffff00" stroke-width="0.12">1</text>
<text transform="translate(488.9,39) scale(0.75,1)" text-anchor="middle" font-family="Liberation Sans" font-size="12.4" fill="#ffff00" stroke="#ffff00" stroke-width="0.12">0</text>
<text transform="translate(494.9,39) scale(0.75,1)" text-anchor="middle" font-family="Liberation Sans" font-size="12.4" fill="#ffff00" stroke="#ffff00" stroke-width="0.12">0</text>
<text transform="translate(500.9,39) scale(0.75,1)" text-anchor="middle" font-family="Liberation Sans" font-size="12.4" fill="#ffff00" stroke="#ffff00" stroke-width="0.12">0</text>
<text transform="translate(180,51) scale(0.732,1)" font-family="Liberation Mono" font-size="13.66" fill="#ffff00" stroke="#ffff00" stroke-width="0.22" xml:space="preserve">Receiving antenna  :  el-HB CV Vertical (el. E-W)</text>
<text transform="translate(308.9,51) scale(0.75,1)" text-anchor="middle" font-family="Liberation Sans" font-size="12.4" fill="#ffff00" stroke="#ffff00" stroke-width="0.12">2</text>
<text transform="translate(344.9,51) scale(0.75,1)" text-anchor="middle" font-family="Liberation Sans" font-size="12.4" fill="#ffff00" stroke="#ffff00" stroke-width="0.12">9</text>
</svg></body></html>
